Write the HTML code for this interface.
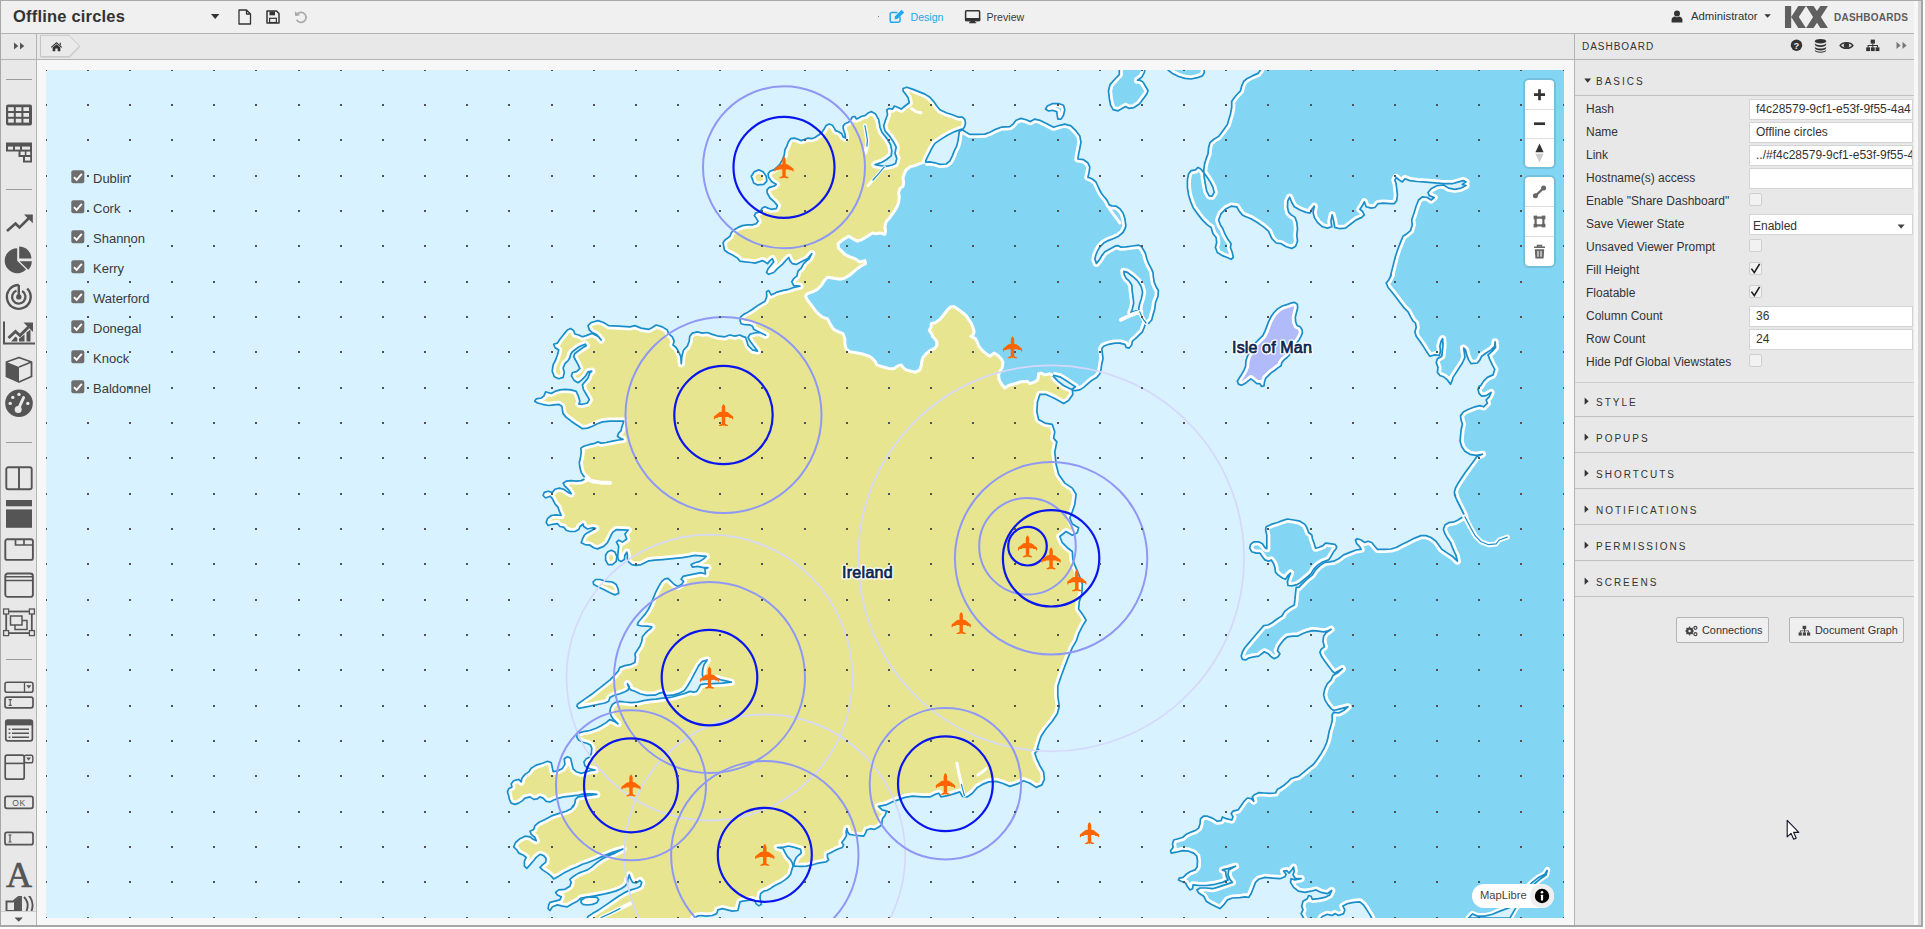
<!DOCTYPE html>
<html lang="en"><head><meta charset="utf-8"><title>Offline circles</title>
<style>

html,body{margin:0;padding:0;background:#fff;}
body{width:1925px;height:929px;overflow:hidden;position:relative;font-family:'Liberation Sans',Arial,sans-serif;color:#333;}
#app{position:absolute;left:0;top:0;width:1925px;height:929px;overflow:hidden;}
.abs{position:absolute;}
#topbar{position:absolute;left:0;top:0;width:1915px;height:33px;background:#f0f0f0;border-bottom:1px solid #b4b4b4;}
#secondbar{position:absolute;left:0;top:34px;width:1915px;height:25px;background:#e8e8e8;border-bottom:1px solid #b4b4b4;}
#sidebar{position:absolute;left:0;top:60px;width:36px;height:865px;background:#e8e8e8;border-right:1px solid #b4b4b4;}
#canvas{position:absolute;left:37px;top:60px;width:1538px;height:865px;background:#f7f7f7;}
#rpanel{position:absolute;left:1574px;top:34px;width:341px;height:891px;background:#e8e8e8;border-left:1px solid #b4b4b4;box-sizing:border-box;}
.title{position:absolute;left:13px;top:7px;font-size:16.5px;font-weight:bold;color:#333;letter-spacing:0.2px;white-space:nowrap;}
.t11{font-size:11px;white-space:nowrap;}
.lbl{position:absolute;left:11px;font-size:12px;color:#333;white-space:nowrap;line-height:14px;}
.inp{position:absolute;left:174px;width:164px;height:21px;background:#fff;border:1px solid #d4d4d4;box-sizing:border-box;font-size:12px;line-height:19px;padding-left:6px;color:#333;white-space:nowrap;overflow:hidden;}
.chk{position:absolute;left:174px;width:13px;height:13px;background:#f2f2f2;border:1px solid #cfcfcf;border-radius:2px;box-sizing:border-box;}
.sec{position:absolute;left:21px;font-size:10px;letter-spacing:2px;color:#333;white-space:nowrap;line-height:12px;}
.hr{position:absolute;left:0px;width:340px;height:1px;background:#c2c2c2;}
.btn{position:absolute;height:26px;box-sizing:border-box;border:1px solid #b4b4b4;border-radius:2px;background:#efefef;font-size:10.9px;color:#333;line-height:25px;white-space:nowrap;}
.cbrow{position:absolute;left:71px;font-size:13px;color:#333;white-space:nowrap;}

</style></head>
<body>
<div id="app">
<div id="topbar">
<div class="title">Offline circles</div>
<svg class="abs" style="left:211px;top:14px" width="9" height="6"><path d="M0,0H8.4L4.2,5Z" fill="#333"/></svg>
<svg class="abs" style="left:238px;top:9px" width="14" height="16" viewBox="0 0 14 16"><path d="M1,1H8.5L12.5,5V15H1Z M8.5,1V5H12.5" fill="none" stroke="#333" stroke-width="1.3" stroke-linejoin="round"/></svg>
<svg class="abs" style="left:266px;top:10px" width="14" height="14" viewBox="0 0 14 14"><path d="M1,1H10.5L13,3.5V13H1Z" fill="none" stroke="#333" stroke-width="1.5" stroke-linejoin="round"/><rect x="3.5" y="1.5" width="5.5" height="3.8" fill="#333"/><rect x="3.6" y="8.3" width="6.8" height="4.2" fill="none" stroke="#333" stroke-width="1.2"/></svg>
<svg class="abs" style="left:294px;top:10px" width="14" height="14" viewBox="0 0 14 14"><path d="M3.2,4.2A5,5 0 1 1 2.6,9.6" fill="none" stroke="#a9a9a9" stroke-width="1.7"/><path d="M0.8,1.2L1.2,6.2L6,5.2Z" fill="#a9a9a9"/></svg>
<span class="abs" style="left:878px;top:16px;width:1px;height:1px;background:#777"></span>
<svg class="abs" style="left:888.5px;top:8.5px" width="17" height="15" viewBox="0 0 17 15"><path d="M11,7.5V11.5A1.8,1.8 0 0 1 9.2,13.3H3A1.8,1.8 0 0 1 1.2,11.5V5.3A1.8,1.8 0 0 1 3,3.5H8.5" fill="none" stroke="#21a8ee" stroke-width="1.5"/><path d="M6,7.2L12.6,0.8L15.2,3.4L8.6,9.8L5.6,10.4Z" fill="#21a8ee"/></svg>
<span class="abs t11" style="left:910.5px;top:10.5px;color:#21a8ee;font-size:10.6px">Design</span>
<svg class="abs" style="left:964px;top:10px" width="17" height="14" viewBox="0 0 17 14"><rect x="1.6" y="0.8" width="14" height="9.8" rx="1" fill="none" stroke="#333" stroke-width="1.5"/><rect x="1" y="8" width="15.2" height="3.2" fill="#333"/><path d="M6.5,11H10.7L11.2,12.3H12.2V13.2H5V12.3H6Z" fill="#333"/></svg>
<span class="abs t11" style="left:986.5px;top:10.5px;color:#3a3a3a;font-size:10.6px">Preview</span>
<svg class="abs" style="left:1671px;top:10px" width="12" height="13" viewBox="0 0 12 13"><circle cx="6" cy="3.4" r="3" fill="#333"/><path d="M0.6,12.4V9.5C0.6,7.6 2.4,6.6 4,6.4C5.2,7.4 6.8,7.4 8,6.4C9.6,6.6 11.4,7.6 11.4,9.5V12.4Z" fill="#333"/></svg>
<span class="abs t11" style="left:1691px;top:10px;color:#333;font-size:11.3px">Administrator</span>
<svg class="abs" style="left:1764px;top:14px" width="8" height="5"><path d="M0.4,0.3H6.8L3.6,3.8Z" fill="#333"/></svg>
<svg class="abs" style="left:1784px;top:5px" width="46" height="24" viewBox="0 0 46 24"><path d="M0.97,1.04H7.19V22.89H0.97Z M7.19,11.98L14.29,1.04H21.93L14.83,11.98L21.93,22.89H14.29Z M22.11,1.04H29.57L32.94,6.01L36.32,1.04H43.96L36.85,11.98L43.96,22.89H36.32L32.94,17.73L29.57,22.89H22.11L29.04,11.98Z" fill="#606060"/></svg>
<span class="abs" style="left:1834px;top:11.5px;font-size:10px;font-weight:bold;color:#5c5c5c;letter-spacing:0.25px;white-space:nowrap">DASHBOARDS</span>
</div>
<div id="secondbar">
<svg class="abs" style="left:12.5px;top:8px" width="13" height="8" viewBox="0 0 13 8"><path d="M1,0.5L5.3,4L1,7.5Z M7,0.5L11.3,4L7,7.5Z" fill="#555"/></svg>
<div class="abs" style="left:36px;top:0;width:1px;height:25px;background:#b4b4b4"></div>
<svg class="abs" style="left:38px;top:0" width="46" height="26" viewBox="0 0 46 26"><path d="M2.5,1.3H31L41.5,12L31,22.7H2.5Z" fill="#d0d0d0" opacity="0.7" transform="translate(0.8,1.4)"/><path d="M2.5,1.3H31L41.5,12L31,22.7H2.5Z" fill="#eaeaea" stroke="#c6c6c6" stroke-width="1"/><g transform="translate(18.5,12.6) scale(0.92) translate(-18.5,-12.3)"><path d="M12.4,12.6L18.5,7.2L24.6,12.6L23.8,13.5L18.5,8.9L13.2,13.5Z M14.3,13.2L18.5,9.7L22.7,13.2V17.3H19.8V14.4H17.2V17.3H14.3Z M22,8V10L23.2,11V8Z" fill="#333"/></g></svg>
</div>
<div id="sidebar">
<div class="abs" style="left:6px;top:19px;width:26px;height:1px;background:#9c9c9c"></div>
<svg class="abs" style="left:0px;top:44px" width="36" height="22" viewBox="0 0 36 22"><rect x="6" y="0.5" width="26" height="21" rx="2" fill="#555"/><rect x="8.2" y="3.2" width="5.6" height="3.8" fill="#e8e8e8"/><rect x="8.2" y="9.0" width="5.6" height="3.8" fill="#e8e8e8"/><rect x="8.2" y="14.8" width="5.6" height="3.8" fill="#e8e8e8"/><rect x="15.8" y="3.2" width="5.6" height="3.8" fill="#e8e8e8"/><rect x="15.8" y="9.0" width="5.6" height="3.8" fill="#e8e8e8"/><rect x="15.8" y="14.8" width="5.6" height="3.8" fill="#e8e8e8"/><rect x="23.4" y="3.2" width="5.6" height="3.8" fill="#e8e8e8"/><rect x="23.4" y="9.0" width="5.6" height="3.8" fill="#e8e8e8"/><rect x="23.4" y="14.8" width="5.6" height="3.8" fill="#e8e8e8"/></svg>
<svg class="abs" style="left:0px;top:82px" width="36" height="21" viewBox="0 0 36 21"><path d="M6,0.5H32V20.5H23V15H18.5V9.5H6Z" fill="#555"/><rect x="8" y="4.6" width="5" height="3" fill="#e8e8e8"/><rect x="15" y="4.6" width="5" height="3" fill="#e8e8e8"/><rect x="22" y="4.6" width="8" height="3" fill="#e8e8e8"/><rect x="20.5" y="9.6" width="4.3" height="3.4" fill="#e8e8e8"/><rect x="26.4" y="9.6" width="3.8" height="3.4" fill="#e8e8e8"/><rect x="25" y="15" width="5.2" height="3.6" fill="#e8e8e8"/></svg>
<div class="abs" style="left:6px;top:128.7px;width:26px;height:1px;background:#9c9c9c"></div>
<svg class="abs" style="left:0px;top:153px" width="36" height="20" viewBox="0 0 36 20"><path d="M7,18L15.5,10.5L19.5,14.5L29.5,4.5" fill="none" stroke="#555" stroke-width="2.6"/><path d="M24,1.5H32.8V10.3Z" fill="#555"/></svg>
<svg class="abs" style="left:0px;top:186px" width="36" height="29" viewBox="0 0 36 29"><path d="M17.2,14.7L26.04,23.54A12.5,12.5 0 1 1 17.2,2.2Z" fill="#555"/><path d="M19.2,12.6V0.4A12.2,12.2 0 0 1 31.4,12.6Z" fill="#555"/><path d="M19.6,15.2H31.8A12.2,12.2 0 0 1 28.23,23.83Z" fill="#555"/></svg>
<svg class="abs" style="left:0px;top:222px" width="36" height="30" viewBox="0 0 36 30"><circle cx="18.8" cy="14.9" r="2.7" fill="#555"/><path d="M18.8,14.9V3" stroke="#555" stroke-width="2.4"/><path d="M18.8,3A11.9,11.9 0 1 0 27.2,6.5" fill="none" stroke="#555" stroke-width="2.4"/><path d="M22.15,9.1A6.7,6.7 0 1 1 16.5,8.6" fill="none" stroke="#555" stroke-width="2.3"/></svg>
<svg class="abs" style="left:0px;top:261px" width="36" height="25" viewBox="0 0 36 25"><path d="M4,0.5V22.5H35" fill="none" stroke="#555" stroke-width="2"/><path d="M8.5,17L15.5,10.5L20,14.5L28.5,6" fill="none" stroke="#555" stroke-width="3"/><path d="M23.5,1.5H33V11Z" fill="#555"/><path d="M11,20.5L15.5,15.5L17.3,17V20.5Z M19,20.5V17.8L22.5,15L24.5,13.5V20.5Z M26.5,20.5V11.5L30.5,8.5V20.5Z" fill="#555"/></svg>
<svg class="abs" style="left:0px;top:296px" width="36" height="28" viewBox="0 0 36 28"><path d="M19,1.5L31.5,6V20.5L19,26L6.5,20.5V6Z" fill="#e8e8e8" stroke="#555" stroke-width="1.8" stroke-linejoin="round"/><path d="M6.5,6L19,11V26L6.5,20.5Z" fill="#555"/><path d="M19,11L31.5,6" stroke="#555" stroke-width="1.6"/></svg>
<svg class="abs" style="left:0px;top:329px" width="36" height="29" viewBox="0 0 36 29"><circle cx="19" cy="14.2" r="13.8" fill="#555"/><circle cx="18.2" cy="20.4" r="3.5" fill="#e8e8e8"/><path d="M18.2,20.4L23.6,8.6" stroke="#e8e8e8" stroke-width="2.9" stroke-linecap="round"/><circle cx="10.2" cy="14.4" r="1.7" fill="#e8e8e8"/><circle cx="12.8" cy="8.4" r="1.7" fill="#e8e8e8"/><circle cx="19" cy="5.4" r="1.7" fill="#e8e8e8"/><circle cx="27.8" cy="14.4" r="1.7" fill="#e8e8e8"/></svg>
<div class="abs" style="left:6px;top:381.5px;width:26px;height:1px;background:#9c9c9c"></div>
<svg class="abs" style="left:0px;top:406px" width="36" height="25" viewBox="0 0 36 25"><rect x="6.3" y="1.3" width="25.4" height="22" rx="2" fill="none" stroke="#555" stroke-width="1.9"/><path d="M19,1.3V23.3" stroke="#555" stroke-width="1.9"/></svg>
<svg class="abs" style="left:0px;top:440px" width="36" height="28" viewBox="0 0 36 28"><rect x="6" y="0" width="26" height="6.3" fill="#555"/><rect x="6" y="9.4" width="26" height="18.4" fill="#555"/></svg>
<svg class="abs" style="left:0px;top:478px" width="36" height="24" viewBox="0 0 36 24"><rect x="5.3" y="1.3" width="27.6" height="20.6" rx="2" fill="none" stroke="#555" stroke-width="1.9"/><path d="M15.5,1.3V7H33 M24,1.3V7" fill="none" stroke="#555" stroke-width="1.7"/></svg>
<svg class="abs" style="left:0px;top:512px" width="36" height="27" viewBox="0 0 36 27"><rect x="5.3" y="1.5" width="27.6" height="23.4" rx="2.5" fill="none" stroke="#555" stroke-width="1.9"/><path d="M5.3,4.8H33 M5.3,8.6H33" stroke="#555" stroke-width="1.5"/></svg>
<svg class="abs" style="left:0px;top:548px" width="36" height="29" viewBox="0 0 36 29"><rect x="6.2" y="3.5" width="25.6" height="21.6" fill="none" stroke="#555" stroke-width="1.8"/><rect x="3.6" y="1" width="5" height="5" fill="#e8e8e8" stroke="#555" stroke-width="1.3"/><rect x="3.6" y="22.6" width="5" height="5" fill="#e8e8e8" stroke="#555" stroke-width="1.3"/><rect x="29.4" y="1" width="5" height="5" fill="#e8e8e8" stroke="#555" stroke-width="1.3"/><rect x="29.4" y="22.6" width="5" height="5" fill="#e8e8e8" stroke="#555" stroke-width="1.3"/><rect x="15" y="12.5" width="12" height="9" fill="#e8e8e8" stroke="#555" stroke-width="1.5"/><rect x="10.5" y="8" width="11.5" height="9" fill="#e8e8e8" stroke="#555" stroke-width="1.5"/></svg>
<div class="abs" style="left:6px;top:598.5px;width:26px;height:1px;background:#9c9c9c"></div>
<svg class="abs" style="left:0px;top:621px" width="36" height="13" viewBox="0 0 36 13"><rect x="5" y="1.2" width="28" height="10" rx="2" fill="none" stroke="#555" stroke-width="1.6"/><path d="M24.5,1.2V11.2" stroke="#555" stroke-width="1.3"/><path d="M26.3,4.3H31.3L28.8,7.6Z" fill="#555"/></svg>
<svg class="abs" style="left:0px;top:636px" width="36" height="13" viewBox="0 0 36 13"><rect x="5" y="1.2" width="28" height="10.6" rx="2" fill="none" stroke="#555" stroke-width="1.7"/><path d="M8.6,3.6H11.8 M8.6,9.4H11.8 M10.2,3.6V9.4" stroke="#555" stroke-width="1.1"/></svg>
<svg class="abs" style="left:0px;top:659px" width="36" height="23" viewBox="0 0 36 23"><rect x="5.8" y="1.2" width="26.6" height="20.6" rx="2" fill="none" stroke="#555" stroke-width="1.7"/><rect x="5.8" y="1.2" width="26.6" height="5.2" fill="#555"/><path d="M12,10.3H29 M12,14.3H29 M12,18.3H29" stroke="#555" stroke-width="1.6"/><path d="M8.6,10.3H10.4 M8.6,14.3H10.4 M8.6,18.3H10.4" stroke="#555" stroke-width="1.6"/></svg>
<svg class="abs" style="left:0px;top:694px" width="36" height="27" viewBox="0 0 36 27"><rect x="5.2" y="1.2" width="19" height="24" rx="2" fill="none" stroke="#555" stroke-width="1.7"/><rect x="24.4" y="1.2" width="8.4" height="7.6" rx="1.5" fill="none" stroke="#555" stroke-width="1.4"/><path d="M26.2,3.6H31L28.6,6.6Z" fill="#555"/><path d="M5.2,9.4H24" stroke="#555" stroke-width="1.6"/></svg>
<svg class="abs" style="left:0px;top:735px" width="36" height="15" viewBox="0 0 36 15"><rect x="5" y="1.3" width="28" height="12" rx="2" fill="none" stroke="#555" stroke-width="1.7"/><text x="19" y="10.6" text-anchor="middle" font-family="'Liberation Sans',Arial,sans-serif" font-size="8.5" letter-spacing="0.6" fill="#555">OK</text></svg>
<svg class="abs" style="left:0px;top:771px" width="36" height="15" viewBox="0 0 36 15"><rect x="5" y="1.3" width="28" height="12.4" rx="2" fill="none" stroke="#555" stroke-width="1.7"/><path d="M8.4,4H11.6 M8.4,11H11.6 M10,4V11" stroke="#555" stroke-width="1.2"/></svg>
<div class="abs" style="left:5px;top:794.5px;width:28px;text-align:center;font-family:'Liberation Serif',serif;font-size:36px;line-height:40px;color:#555;-webkit-text-stroke:0.7px #555">A</div>
<svg class="abs" style="left:0px;top:836px" width="36" height="15" viewBox="0 0 36 15"><path d="M6.5,15V5.5H13L21,-1V15Z" fill="none" stroke="#555" stroke-width="1.9"/><path d="M14,5.5L20,1V15H14Z" fill="#555"/><path d="M24,1A13,13 0 0 1 26.5,15" fill="none" stroke="#555" stroke-width="1.9"/><path d="M28.5,-1A16,16 0 0 1 31.5,15" fill="none" stroke="#555" stroke-width="1.9"/></svg>
<div class="abs" style="left:0;top:851px;width:36px;height:14px;background:#f0f0f0;border-top:1px solid #cfcfcf;box-sizing:border-box"></div>
<svg class="abs" style="left:14px;top:857px" width="10" height="6"><path d="M0.5,0.5H8.9L4.7,4.7Z" fill="#555"/></svg>
</div>
<div id="canvas"></div>
<svg id="map" width="1518" height="848" viewBox="0 0 1518 848" style="position:absolute;left:46px;top:70px;background:#D8F2FF">
<clipPath id="c1"><path d="M1218.8,-6.0 L1215.7,-2.3 L1214.5,0.0 L1212.0,3.4 L1206.3,5.9 L1201.3,8.4 L1197.6,11.5 L1195.7,15.9 L1194.5,20.8 L1191.4,24.0 L1188.2,27.7 L1185.7,31.5 L1185.7,37.7 L1184.5,44.0 L1182.6,50.2 L1181.4,54.6 L1176.4,61.4 L1172.6,66.4 L1167.6,69.5 L1163.9,72.7 L1162.6,77.7 L1162.0,83.9 L1160.1,88.9 L1158.6,93.9 L1158.8,92.4 L1157.8,99.9 L1158.2,107.4 L1159.5,114.9 L1160.7,121.2 L1163.2,125.9 L1166.1,126.2 L1168.2,122.4 L1167.0,117.4 L1164.5,112.4 L1161.3,107.4 L1157.6,102.4 L1154.5,98.7 L1152.0,97.4 L1149.5,99.9 L1145.1,100.6 L1142.6,103.7 L1141.4,109.9 L1141.4,117.4 L1142.6,124.9 L1144.5,131.2 L1147.0,137.4 L1151.3,143.6 L1156.3,149.9 L1161.3,154.9 L1165.1,157.5 L1167.0,163.7 L1170.1,167.5 L1170.7,172.5 L1169.4,177.5 L1171.3,182.5 L1176.3,185.6 L1181.3,187.5 L1185.1,189.3 L1187.3,187.5 L1186.3,182.5 L1184.4,177.5 L1185.1,173.7 L1181.9,169.3 L1178.8,163.7 L1176.9,158.7 L1174.4,155.0 L1172.6,150.0 L1175.1,143.6 L1180.1,138.7 L1185.1,136.2 L1190.7,136.8 L1193.2,141.1 L1196.3,144.9 L1198.8,146.2 L1205.0,148.7 L1211.3,152.5 L1217.5,156.9 L1222.5,161.2 L1225.9,168.7 L1230.2,173.0 L1235.2,173.7 L1240.2,176.8 L1245.8,178.4 L1249.6,176.2 L1251.5,171.2 L1250.8,164.9 L1251.5,158.7 L1250.8,152.4 L1249.0,147.4 L1245.2,144.9 L1242.7,142.4 L1241.5,137.5 L1241.7,131.2 L1243.7,127.2 L1245.8,132.5 L1248.3,136.8 L1254.0,140.0 L1260.2,142.4 L1264.0,143.1 L1265.8,139.3 L1268.3,136.2 L1267.1,142.4 L1268.3,147.4 L1271.4,152.4 L1276.4,156.8 L1281.4,158.1 L1285.8,156.8 L1284.9,151.2 L1286.2,144.9 L1287.7,151.2 L1288.7,157.4 L1293.9,158.7 L1299.5,158.1 L1304.5,154.3 L1310.2,149.9 L1315.8,147.4 L1318.3,144.9 L1316.4,141.2 L1313.9,139.3 L1316.4,135.6 L1318.3,131.8 L1320.1,136.8 L1325.1,138.1 L1328.9,137.5 L1332.0,133.7 L1337.6,133.1 L1343.9,133.7 L1348.2,133.7 L1350.7,130.6 L1351.4,125.0 L1350.7,118.7 L1350.1,113.7 L1348.9,110.0 L1350.1,107.5 L1353.2,110.0 L1356.4,111.9 L1358.9,108.7 L1363.9,110.6 L1371.3,111.5 L1380.1,112.2 L1388.8,112.9 L1397.6,113.5 L1406.3,113.7 L1412.6,111.9 L1417.5,110.6 L1420.0,111.9 L1416.3,114.4 L1420.0,115.6 L1415.0,118.1 L1408.8,119.3 L1402.6,118.1 L1397.6,115.0 L1391.3,115.6 L1385.1,118.7 L1382.0,122.5 L1383.2,125.6 L1388.2,127.5 L1385.1,130.0 L1381.3,127.5 L1376.3,126.8 L1372.6,130.0 L1370.1,136.2 L1368.2,142.4 L1365.7,149.9 L1366.3,154.9 L1364.5,160.6 L1360.1,164.3 L1357.0,166.2 L1354.5,172.4 L1352.0,178.7 L1349.5,186.2 L1347.6,193.6 L1345.7,201.1 L1344.5,206.0 L1345.2,205.0 L1342.7,210.0 L1340.2,213.1 L1342.1,217.5 L1345.2,221.2 L1349.6,226.8 L1353.9,232.5 L1358.3,238.1 L1362.1,241.8 L1364.6,246.8 L1367.1,251.2 L1369.5,253.1 L1370.2,257.4 L1368.9,261.8 L1370.2,266.2 L1373.3,270.6 L1376.4,274.9 L1379.5,279.9 L1382.0,283.7 L1383.9,286.2 L1388.9,284.9 L1393.3,285.5 L1394.5,281.2 L1393.9,276.2 L1395.1,271.2 L1396.6,268.7 L1397.0,274.9 L1396.4,281.2 L1395.8,286.2 L1391.4,288.7 L1390.2,292.4 L1392.0,297.4 L1391.4,302.4 L1393.9,305.5 L1397.6,306.8 L1401.4,309.9 L1404.5,314.3 L1406.4,309.9 L1407.0,307.4 L1409.5,303.6 L1412.6,298.7 L1416.4,293.0 L1418.9,287.4 L1418.3,282.4 L1417.6,278.0 L1419.5,279.9 L1420.7,284.9 L1422.6,289.9 L1425.1,293.7 L1431.4,293.0 L1433.9,289.9 L1435.7,286.2 L1440.1,283.0 L1445.1,279.9 L1448.8,276.2 L1449.1,271.8 L1449.5,277.4 L1446.3,281.2 L1442.0,284.9 L1443.9,289.9 L1446.3,294.9 L1448.8,299.3 L1447.0,304.9 L1441.4,307.4 L1437.6,311.1 L1434.5,316.0 L1433.2,316.2 L1432.0,319.4 L1433.2,323.7 L1435.7,326.2 L1440.1,325.6 L1445.1,322.5 L1443.2,326.9 L1440.1,330.0 L1441.4,333.1 L1437.6,336.8 L1433.9,335.6 L1428.9,336.8 L1422.6,339.3 L1417.6,341.8 L1414.5,345.6 L1415.1,350.0 L1416.4,354.3 L1415.1,360.0 L1414.5,366.2 L1414.1,371.2 L1415.8,376.8 L1418.9,381.2 L1423.9,384.3 L1430.1,385.3 L1436.4,384.3 L1430.7,386.8 L1427.6,391.2 L1423.9,396.2 L1420.1,401.2 L1416.4,406.8 L1412.6,412.4 L1409.5,418.0 L1408.3,422.4 L1409.5,426.0 L1408.6,425.0 L1410.8,430.0 L1413.3,435.0 L1415.8,440.0 L1418.3,445.0 L1418.9,447.5 L1415.8,447.5 L1412.0,450.0 L1408.3,451.8 L1402.6,452.7 L1398.9,455.0 L1397.4,459.3 L1398.9,463.7 L1401.4,468.1 L1404.5,472.4 L1406.4,477.4 L1408.3,481.8 L1410.1,485.6 L1411.4,491.2 L1407.0,486.8 L1401.4,483.1 L1395.8,479.3 L1390.0,471.2 L1385.0,467.5 L1380.0,465.6 L1375.0,465.6 L1368.8,468.1 L1362.5,471.2 L1356.3,474.3 L1350.1,477.5 L1345.1,479.0 L1338.8,479.3 L1331.3,479.3 L1328.8,476.2 L1325.7,472.5 L1322.0,471.2 L1318.8,472.5 L1315.1,470.0 L1311.3,468.7 L1309.5,470.0 L1310.7,473.7 L1313.8,476.8 L1315.1,479.3 L1310.1,480.0 L1303.9,482.4 L1297.6,484.9 L1292.6,488.7 L1287.6,491.2 L1283.9,491.8 L1278.9,492.4 L1273.9,495.6 L1269.5,499.9 L1266.4,504.9 L1261.4,508.7 L1256.4,513.7 L1252.7,517.4 L1250.2,517.4 L1249.5,523.7 L1248.9,529.9 L1248.3,534.9 L1243.9,537.4 L1238.9,541.1 L1235.8,546.0 L1236.4,545.6 L1231.4,548.7 L1226.4,552.5 L1222.1,555.0 L1217.7,555.6 L1213.9,560.0 L1210.2,564.3 L1206.4,568.7 L1202.7,573.1 L1199.0,577.5 L1196.5,581.8 L1195.2,586.2 L1196.5,589.3 L1199.6,589.9 L1202.7,588.1 L1207.7,586.8 L1212.7,586.2 L1215.8,583.7 L1218.3,581.8 L1222.1,583.7 L1225.2,586.8 L1228.3,588.7 L1232.0,586.8 L1233.9,583.7 L1231.4,580.6 L1232.7,576.8 L1235.2,573.1 L1237.7,570.0 L1241.4,566.8 L1246.4,566.2 L1251.4,566.2 L1256.4,563.7 L1261.4,561.8 L1266.4,560.6 L1272.6,561.2 L1277.6,561.8 L1281.4,561.2 L1285.1,559.3 L1280.1,562.7 L1277.6,566.2 L1277.0,571.2 L1278.3,576.8 L1275.1,579.3 L1273.9,582.4 L1275.8,586.8 L1278.9,591.2 L1282.6,596.2 L1286.4,601.2 L1288.9,603.1 L1296.4,598.7 L1291.4,603.1 L1287.0,605.5 L1285.1,609.9 L1281.4,613.7 L1278.9,618.7 L1277.6,624.9 L1278.9,629.9 L1282.0,634.9 L1285.1,638.6 L1287.6,640.5 L1295.1,638.6 L1302.0,636.8 L1297.6,640.5 L1292.6,643.0 L1287.6,642.4 L1286.1,645.0 L1286.3,650.0 L1285.1,655.0 L1283.2,661.2 L1282.0,667.5 L1280.7,672.5 L1278.2,678.1 L1275.1,683.7 L1271.3,689.3 L1267.6,694.3 L1262.6,698.1 L1257.6,702.4 L1252.6,706.4 L1248.9,707.4 L1245.1,708.7 L1241.4,712.4 L1237.6,715.5 L1233.9,718.0 L1231.4,719.3 L1229.5,723.0 L1223.9,723.4 L1217.6,723.0 L1212.7,722.7 L1208.3,724.7 L1206.4,726.8 L1207.7,731.1 L1205.2,728.7 L1201.4,728.0 L1198.3,731.1 L1195.2,735.5 L1192.0,739.9 L1187.1,741.1 L1185.2,743.6 L1187.0,746.9 L1185.8,750.0 L1180.2,748.7 L1176.4,746.9 L1175.2,750.6 L1171.4,751.2 L1166.4,748.1 L1161.4,746.2 L1157.7,746.0 L1154.6,748.7 L1154.0,753.7 L1152.7,758.1 L1149.0,760.6 L1144.0,762.5 L1140.2,764.3 L1136.5,767.5 L1132.1,768.7 L1127.7,770.0 L1126.5,773.7 L1127.1,777.5 L1124.6,780.6 L1125.2,783.1 L1130.2,782.2 L1136.5,780.6 L1142.7,781.2 L1147.7,783.1 L1150.8,786.2 L1151.5,791.2 L1151.2,796.8 L1149.0,799.9 L1144.0,801.8 L1140.2,804.3 L1137.1,807.4 L1133.3,808.1 L1132.5,809.9 L1135.2,811.2 L1139.6,813.0 L1141.5,816.8 L1144.0,819.9 L1146.5,818.7 L1147.1,814.9 L1154.0,815.5 L1160.2,815.5 L1168.9,814.3 L1176.4,812.4 L1182.0,809.9 L1180.2,806.2 L1179.5,801.2 L1176.4,799.9 L1181.4,798.7 L1189.5,796.2 L1182.7,799.9 L1182.0,804.9 L1183.9,809.3 L1186.4,812.4 L1178.9,814.9 L1171.4,817.4 L1166.4,818.7 L1160.2,818.0 L1154.0,818.0 L1150.8,819.9 L1152.7,823.0 L1157.7,826.2 L1160.2,831.2 L1165.2,834.3 L1170.2,836.8 L1173.9,838.6 L1177.7,834.9 L1181.4,829.9 L1186.4,828.0 L1193.9,827.7 L1198.9,826.8 L1202.7,827.4 L1205.1,823.7 L1207.6,817.4 L1209.5,812.4 L1212.6,809.3 L1218.9,807.4 L1226.4,808.1 L1233.9,808.7 L1238.9,806.8 L1240.1,804.3 L1237.6,801.2 L1240.7,800.6 L1243.2,803.1 L1245.7,799.9 L1247.6,797.2 L1248.2,801.2 L1247.0,804.9 L1249.5,808.7 L1255.1,808.7 L1248.9,809.9 L1245.1,808.7 L1244.5,812.4 L1247.6,817.4 L1252.6,821.2 L1258.8,822.4 L1265.1,821.2 L1270.1,819.9 L1275.1,822.4 L1281.3,823.7 L1285.7,820.5 L1283.8,824.9 L1278.8,827.4 L1272.6,828.7 L1266.3,829.3 L1265.1,826.2 L1262.6,825.5 L1261.3,828.7 L1257.0,831.2 L1255.7,836.1 L1257.0,839.9 L1255.1,843.6 L1257.6,848.0 L1257.6,854.9 L1275.1,854.9 L1275.1,848.0 L1276.3,846.5 L1281.3,844.3 L1286.3,845.5 L1288.8,843.6 L1292.6,845.5 L1297.6,843.6 L1298.8,839.9 L1296.9,836.1 L1301.3,833.7 L1307.5,832.4 L1313.8,831.8 L1317.5,834.9 L1320.0,838.6 L1323.2,843.6 L1325.7,848.0 L1325.7,854.9 L1326.0,860.0 L1544.0,860.0 L1544.0,-15.0 L1219.0,-15.0Z" clip-rule="evenodd"/></clipPath>
<path d="M1218.8,-6.0 L1215.7,-2.3 L1214.5,0.0 L1212.0,3.4 L1206.3,5.9 L1201.3,8.4 L1197.6,11.5 L1195.7,15.9 L1194.5,20.8 L1191.4,24.0 L1188.2,27.7 L1185.7,31.5 L1185.7,37.7 L1184.5,44.0 L1182.6,50.2 L1181.4,54.6 L1176.4,61.4 L1172.6,66.4 L1167.6,69.5 L1163.9,72.7 L1162.6,77.7 L1162.0,83.9 L1160.1,88.9 L1158.6,93.9 L1158.8,92.4 L1157.8,99.9 L1158.2,107.4 L1159.5,114.9 L1160.7,121.2 L1163.2,125.9 L1166.1,126.2 L1168.2,122.4 L1167.0,117.4 L1164.5,112.4 L1161.3,107.4 L1157.6,102.4 L1154.5,98.7 L1152.0,97.4 L1149.5,99.9 L1145.1,100.6 L1142.6,103.7 L1141.4,109.9 L1141.4,117.4 L1142.6,124.9 L1144.5,131.2 L1147.0,137.4 L1151.3,143.6 L1156.3,149.9 L1161.3,154.9 L1165.1,157.5 L1167.0,163.7 L1170.1,167.5 L1170.7,172.5 L1169.4,177.5 L1171.3,182.5 L1176.3,185.6 L1181.3,187.5 L1185.1,189.3 L1187.3,187.5 L1186.3,182.5 L1184.4,177.5 L1185.1,173.7 L1181.9,169.3 L1178.8,163.7 L1176.9,158.7 L1174.4,155.0 L1172.6,150.0 L1175.1,143.6 L1180.1,138.7 L1185.1,136.2 L1190.7,136.8 L1193.2,141.1 L1196.3,144.9 L1198.8,146.2 L1205.0,148.7 L1211.3,152.5 L1217.5,156.9 L1222.5,161.2 L1225.9,168.7 L1230.2,173.0 L1235.2,173.7 L1240.2,176.8 L1245.8,178.4 L1249.6,176.2 L1251.5,171.2 L1250.8,164.9 L1251.5,158.7 L1250.8,152.4 L1249.0,147.4 L1245.2,144.9 L1242.7,142.4 L1241.5,137.5 L1241.7,131.2 L1243.7,127.2 L1245.8,132.5 L1248.3,136.8 L1254.0,140.0 L1260.2,142.4 L1264.0,143.1 L1265.8,139.3 L1268.3,136.2 L1267.1,142.4 L1268.3,147.4 L1271.4,152.4 L1276.4,156.8 L1281.4,158.1 L1285.8,156.8 L1284.9,151.2 L1286.2,144.9 L1287.7,151.2 L1288.7,157.4 L1293.9,158.7 L1299.5,158.1 L1304.5,154.3 L1310.2,149.9 L1315.8,147.4 L1318.3,144.9 L1316.4,141.2 L1313.9,139.3 L1316.4,135.6 L1318.3,131.8 L1320.1,136.8 L1325.1,138.1 L1328.9,137.5 L1332.0,133.7 L1337.6,133.1 L1343.9,133.7 L1348.2,133.7 L1350.7,130.6 L1351.4,125.0 L1350.7,118.7 L1350.1,113.7 L1348.9,110.0 L1350.1,107.5 L1353.2,110.0 L1356.4,111.9 L1358.9,108.7 L1363.9,110.6 L1371.3,111.5 L1380.1,112.2 L1388.8,112.9 L1397.6,113.5 L1406.3,113.7 L1412.6,111.9 L1417.5,110.6 L1420.0,111.9 L1416.3,114.4 L1420.0,115.6 L1415.0,118.1 L1408.8,119.3 L1402.6,118.1 L1397.6,115.0 L1391.3,115.6 L1385.1,118.7 L1382.0,122.5 L1383.2,125.6 L1388.2,127.5 L1385.1,130.0 L1381.3,127.5 L1376.3,126.8 L1372.6,130.0 L1370.1,136.2 L1368.2,142.4 L1365.7,149.9 L1366.3,154.9 L1364.5,160.6 L1360.1,164.3 L1357.0,166.2 L1354.5,172.4 L1352.0,178.7 L1349.5,186.2 L1347.6,193.6 L1345.7,201.1 L1344.5,206.0 L1345.2,205.0 L1342.7,210.0 L1340.2,213.1 L1342.1,217.5 L1345.2,221.2 L1349.6,226.8 L1353.9,232.5 L1358.3,238.1 L1362.1,241.8 L1364.6,246.8 L1367.1,251.2 L1369.5,253.1 L1370.2,257.4 L1368.9,261.8 L1370.2,266.2 L1373.3,270.6 L1376.4,274.9 L1379.5,279.9 L1382.0,283.7 L1383.9,286.2 L1388.9,284.9 L1393.3,285.5 L1394.5,281.2 L1393.9,276.2 L1395.1,271.2 L1396.6,268.7 L1397.0,274.9 L1396.4,281.2 L1395.8,286.2 L1391.4,288.7 L1390.2,292.4 L1392.0,297.4 L1391.4,302.4 L1393.9,305.5 L1397.6,306.8 L1401.4,309.9 L1404.5,314.3 L1406.4,309.9 L1407.0,307.4 L1409.5,303.6 L1412.6,298.7 L1416.4,293.0 L1418.9,287.4 L1418.3,282.4 L1417.6,278.0 L1419.5,279.9 L1420.7,284.9 L1422.6,289.9 L1425.1,293.7 L1431.4,293.0 L1433.9,289.9 L1435.7,286.2 L1440.1,283.0 L1445.1,279.9 L1448.8,276.2 L1449.1,271.8 L1449.5,277.4 L1446.3,281.2 L1442.0,284.9 L1443.9,289.9 L1446.3,294.9 L1448.8,299.3 L1447.0,304.9 L1441.4,307.4 L1437.6,311.1 L1434.5,316.0 L1433.2,316.2 L1432.0,319.4 L1433.2,323.7 L1435.7,326.2 L1440.1,325.6 L1445.1,322.5 L1443.2,326.9 L1440.1,330.0 L1441.4,333.1 L1437.6,336.8 L1433.9,335.6 L1428.9,336.8 L1422.6,339.3 L1417.6,341.8 L1414.5,345.6 L1415.1,350.0 L1416.4,354.3 L1415.1,360.0 L1414.5,366.2 L1414.1,371.2 L1415.8,376.8 L1418.9,381.2 L1423.9,384.3 L1430.1,385.3 L1436.4,384.3 L1430.7,386.8 L1427.6,391.2 L1423.9,396.2 L1420.1,401.2 L1416.4,406.8 L1412.6,412.4 L1409.5,418.0 L1408.3,422.4 L1409.5,426.0 L1408.6,425.0 L1410.8,430.0 L1413.3,435.0 L1415.8,440.0 L1418.3,445.0 L1418.9,447.5 L1415.8,447.5 L1412.0,450.0 L1408.3,451.8 L1402.6,452.7 L1398.9,455.0 L1397.4,459.3 L1398.9,463.7 L1401.4,468.1 L1404.5,472.4 L1406.4,477.4 L1408.3,481.8 L1410.1,485.6 L1411.4,491.2 L1407.0,486.8 L1401.4,483.1 L1395.8,479.3 L1390.0,471.2 L1385.0,467.5 L1380.0,465.6 L1375.0,465.6 L1368.8,468.1 L1362.5,471.2 L1356.3,474.3 L1350.1,477.5 L1345.1,479.0 L1338.8,479.3 L1331.3,479.3 L1328.8,476.2 L1325.7,472.5 L1322.0,471.2 L1318.8,472.5 L1315.1,470.0 L1311.3,468.7 L1309.5,470.0 L1310.7,473.7 L1313.8,476.8 L1315.1,479.3 L1310.1,480.0 L1303.9,482.4 L1297.6,484.9 L1292.6,488.7 L1287.6,491.2 L1283.9,491.8 L1278.9,492.4 L1273.9,495.6 L1269.5,499.9 L1266.4,504.9 L1261.4,508.7 L1256.4,513.7 L1252.7,517.4 L1250.2,517.4 L1249.5,523.7 L1248.9,529.9 L1248.3,534.9 L1243.9,537.4 L1238.9,541.1 L1235.8,546.0 L1236.4,545.6 L1231.4,548.7 L1226.4,552.5 L1222.1,555.0 L1217.7,555.6 L1213.9,560.0 L1210.2,564.3 L1206.4,568.7 L1202.7,573.1 L1199.0,577.5 L1196.5,581.8 L1195.2,586.2 L1196.5,589.3 L1199.6,589.9 L1202.7,588.1 L1207.7,586.8 L1212.7,586.2 L1215.8,583.7 L1218.3,581.8 L1222.1,583.7 L1225.2,586.8 L1228.3,588.7 L1232.0,586.8 L1233.9,583.7 L1231.4,580.6 L1232.7,576.8 L1235.2,573.1 L1237.7,570.0 L1241.4,566.8 L1246.4,566.2 L1251.4,566.2 L1256.4,563.7 L1261.4,561.8 L1266.4,560.6 L1272.6,561.2 L1277.6,561.8 L1281.4,561.2 L1285.1,559.3 L1280.1,562.7 L1277.6,566.2 L1277.0,571.2 L1278.3,576.8 L1275.1,579.3 L1273.9,582.4 L1275.8,586.8 L1278.9,591.2 L1282.6,596.2 L1286.4,601.2 L1288.9,603.1 L1296.4,598.7 L1291.4,603.1 L1287.0,605.5 L1285.1,609.9 L1281.4,613.7 L1278.9,618.7 L1277.6,624.9 L1278.9,629.9 L1282.0,634.9 L1285.1,638.6 L1287.6,640.5 L1295.1,638.6 L1302.0,636.8 L1297.6,640.5 L1292.6,643.0 L1287.6,642.4 L1286.1,645.0 L1286.3,650.0 L1285.1,655.0 L1283.2,661.2 L1282.0,667.5 L1280.7,672.5 L1278.2,678.1 L1275.1,683.7 L1271.3,689.3 L1267.6,694.3 L1262.6,698.1 L1257.6,702.4 L1252.6,706.4 L1248.9,707.4 L1245.1,708.7 L1241.4,712.4 L1237.6,715.5 L1233.9,718.0 L1231.4,719.3 L1229.5,723.0 L1223.9,723.4 L1217.6,723.0 L1212.7,722.7 L1208.3,724.7 L1206.4,726.8 L1207.7,731.1 L1205.2,728.7 L1201.4,728.0 L1198.3,731.1 L1195.2,735.5 L1192.0,739.9 L1187.1,741.1 L1185.2,743.6 L1187.0,746.9 L1185.8,750.0 L1180.2,748.7 L1176.4,746.9 L1175.2,750.6 L1171.4,751.2 L1166.4,748.1 L1161.4,746.2 L1157.7,746.0 L1154.6,748.7 L1154.0,753.7 L1152.7,758.1 L1149.0,760.6 L1144.0,762.5 L1140.2,764.3 L1136.5,767.5 L1132.1,768.7 L1127.7,770.0 L1126.5,773.7 L1127.1,777.5 L1124.6,780.6 L1125.2,783.1 L1130.2,782.2 L1136.5,780.6 L1142.7,781.2 L1147.7,783.1 L1150.8,786.2 L1151.5,791.2 L1151.2,796.8 L1149.0,799.9 L1144.0,801.8 L1140.2,804.3 L1137.1,807.4 L1133.3,808.1 L1132.5,809.9 L1135.2,811.2 L1139.6,813.0 L1141.5,816.8 L1144.0,819.9 L1146.5,818.7 L1147.1,814.9 L1154.0,815.5 L1160.2,815.5 L1168.9,814.3 L1176.4,812.4 L1182.0,809.9 L1180.2,806.2 L1179.5,801.2 L1176.4,799.9 L1181.4,798.7 L1189.5,796.2 L1182.7,799.9 L1182.0,804.9 L1183.9,809.3 L1186.4,812.4 L1178.9,814.9 L1171.4,817.4 L1166.4,818.7 L1160.2,818.0 L1154.0,818.0 L1150.8,819.9 L1152.7,823.0 L1157.7,826.2 L1160.2,831.2 L1165.2,834.3 L1170.2,836.8 L1173.9,838.6 L1177.7,834.9 L1181.4,829.9 L1186.4,828.0 L1193.9,827.7 L1198.9,826.8 L1202.7,827.4 L1205.1,823.7 L1207.6,817.4 L1209.5,812.4 L1212.6,809.3 L1218.9,807.4 L1226.4,808.1 L1233.9,808.7 L1238.9,806.8 L1240.1,804.3 L1237.6,801.2 L1240.7,800.6 L1243.2,803.1 L1245.7,799.9 L1247.6,797.2 L1248.2,801.2 L1247.0,804.9 L1249.5,808.7 L1255.1,808.7 L1248.9,809.9 L1245.1,808.7 L1244.5,812.4 L1247.6,817.4 L1252.6,821.2 L1258.8,822.4 L1265.1,821.2 L1270.1,819.9 L1275.1,822.4 L1281.3,823.7 L1285.7,820.5 L1283.8,824.9 L1278.8,827.4 L1272.6,828.7 L1266.3,829.3 L1265.1,826.2 L1262.6,825.5 L1261.3,828.7 L1257.0,831.2 L1255.7,836.1 L1257.0,839.9 L1255.1,843.6 L1257.6,848.0 L1257.6,854.9 L1275.1,854.9 L1275.1,848.0 L1276.3,846.5 L1281.3,844.3 L1286.3,845.5 L1288.8,843.6 L1292.6,845.5 L1297.6,843.6 L1298.8,839.9 L1296.9,836.1 L1301.3,833.7 L1307.5,832.4 L1313.8,831.8 L1317.5,834.9 L1320.0,838.6 L1323.2,843.6 L1325.7,848.0 L1325.7,854.9 L1326.0,860.0 L1544.0,860.0 L1544.0,-15.0 L1219.0,-15.0Z" fill="#83D5F4" fill-rule="evenodd"/>
<path d="M1218.8,-6.0 L1215.7,-2.3 L1214.5,0.0 L1212.0,3.4 L1206.3,5.9 L1201.3,8.4 L1197.6,11.5 L1195.7,15.9 L1194.5,20.8 L1191.4,24.0 L1188.2,27.7 L1185.7,31.5 L1185.7,37.7 L1184.5,44.0 L1182.6,50.2 L1181.4,54.6 L1176.4,61.4 L1172.6,66.4 L1167.6,69.5 L1163.9,72.7 L1162.6,77.7 L1162.0,83.9 L1160.1,88.9 L1158.6,93.9 L1158.8,92.4 L1157.8,99.9 L1158.2,107.4 L1159.5,114.9 L1160.7,121.2 L1163.2,125.9 L1166.1,126.2 L1168.2,122.4 L1167.0,117.4 L1164.5,112.4 L1161.3,107.4 L1157.6,102.4 L1154.5,98.7 L1152.0,97.4 L1149.5,99.9 L1145.1,100.6 L1142.6,103.7 L1141.4,109.9 L1141.4,117.4 L1142.6,124.9 L1144.5,131.2 L1147.0,137.4 L1151.3,143.6 L1156.3,149.9 L1161.3,154.9 L1165.1,157.5 L1167.0,163.7 L1170.1,167.5 L1170.7,172.5 L1169.4,177.5 L1171.3,182.5 L1176.3,185.6 L1181.3,187.5 L1185.1,189.3 L1187.3,187.5 L1186.3,182.5 L1184.4,177.5 L1185.1,173.7 L1181.9,169.3 L1178.8,163.7 L1176.9,158.7 L1174.4,155.0 L1172.6,150.0 L1175.1,143.6 L1180.1,138.7 L1185.1,136.2 L1190.7,136.8 L1193.2,141.1 L1196.3,144.9 L1198.8,146.2 L1205.0,148.7 L1211.3,152.5 L1217.5,156.9 L1222.5,161.2 L1225.9,168.7 L1230.2,173.0 L1235.2,173.7 L1240.2,176.8 L1245.8,178.4 L1249.6,176.2 L1251.5,171.2 L1250.8,164.9 L1251.5,158.7 L1250.8,152.4 L1249.0,147.4 L1245.2,144.9 L1242.7,142.4 L1241.5,137.5 L1241.7,131.2 L1243.7,127.2 L1245.8,132.5 L1248.3,136.8 L1254.0,140.0 L1260.2,142.4 L1264.0,143.1 L1265.8,139.3 L1268.3,136.2 L1267.1,142.4 L1268.3,147.4 L1271.4,152.4 L1276.4,156.8 L1281.4,158.1 L1285.8,156.8 L1284.9,151.2 L1286.2,144.9 L1287.7,151.2 L1288.7,157.4 L1293.9,158.7 L1299.5,158.1 L1304.5,154.3 L1310.2,149.9 L1315.8,147.4 L1318.3,144.9 L1316.4,141.2 L1313.9,139.3 L1316.4,135.6 L1318.3,131.8 L1320.1,136.8 L1325.1,138.1 L1328.9,137.5 L1332.0,133.7 L1337.6,133.1 L1343.9,133.7 L1348.2,133.7 L1350.7,130.6 L1351.4,125.0 L1350.7,118.7 L1350.1,113.7 L1348.9,110.0 L1350.1,107.5 L1353.2,110.0 L1356.4,111.9 L1358.9,108.7 L1363.9,110.6 L1371.3,111.5 L1380.1,112.2 L1388.8,112.9 L1397.6,113.5 L1406.3,113.7 L1412.6,111.9 L1417.5,110.6 L1420.0,111.9 L1416.3,114.4 L1420.0,115.6 L1415.0,118.1 L1408.8,119.3 L1402.6,118.1 L1397.6,115.0 L1391.3,115.6 L1385.1,118.7 L1382.0,122.5 L1383.2,125.6 L1388.2,127.5 L1385.1,130.0 L1381.3,127.5 L1376.3,126.8 L1372.6,130.0 L1370.1,136.2 L1368.2,142.4 L1365.7,149.9 L1366.3,154.9 L1364.5,160.6 L1360.1,164.3 L1357.0,166.2 L1354.5,172.4 L1352.0,178.7 L1349.5,186.2 L1347.6,193.6 L1345.7,201.1 L1344.5,206.0 L1345.2,205.0 L1342.7,210.0 L1340.2,213.1 L1342.1,217.5 L1345.2,221.2 L1349.6,226.8 L1353.9,232.5 L1358.3,238.1 L1362.1,241.8 L1364.6,246.8 L1367.1,251.2 L1369.5,253.1 L1370.2,257.4 L1368.9,261.8 L1370.2,266.2 L1373.3,270.6 L1376.4,274.9 L1379.5,279.9 L1382.0,283.7 L1383.9,286.2 L1388.9,284.9 L1393.3,285.5 L1394.5,281.2 L1393.9,276.2 L1395.1,271.2 L1396.6,268.7 L1397.0,274.9 L1396.4,281.2 L1395.8,286.2 L1391.4,288.7 L1390.2,292.4 L1392.0,297.4 L1391.4,302.4 L1393.9,305.5 L1397.6,306.8 L1401.4,309.9 L1404.5,314.3 L1406.4,309.9 L1407.0,307.4 L1409.5,303.6 L1412.6,298.7 L1416.4,293.0 L1418.9,287.4 L1418.3,282.4 L1417.6,278.0 L1419.5,279.9 L1420.7,284.9 L1422.6,289.9 L1425.1,293.7 L1431.4,293.0 L1433.9,289.9 L1435.7,286.2 L1440.1,283.0 L1445.1,279.9 L1448.8,276.2 L1449.1,271.8 L1449.5,277.4 L1446.3,281.2 L1442.0,284.9 L1443.9,289.9 L1446.3,294.9 L1448.8,299.3 L1447.0,304.9 L1441.4,307.4 L1437.6,311.1 L1434.5,316.0 L1433.2,316.2 L1432.0,319.4 L1433.2,323.7 L1435.7,326.2 L1440.1,325.6 L1445.1,322.5 L1443.2,326.9 L1440.1,330.0 L1441.4,333.1 L1437.6,336.8 L1433.9,335.6 L1428.9,336.8 L1422.6,339.3 L1417.6,341.8 L1414.5,345.6 L1415.1,350.0 L1416.4,354.3 L1415.1,360.0 L1414.5,366.2 L1414.1,371.2 L1415.8,376.8 L1418.9,381.2 L1423.9,384.3 L1430.1,385.3 L1436.4,384.3 L1430.7,386.8 L1427.6,391.2 L1423.9,396.2 L1420.1,401.2 L1416.4,406.8 L1412.6,412.4 L1409.5,418.0 L1408.3,422.4 L1409.5,426.0 L1408.6,425.0 L1410.8,430.0 L1413.3,435.0 L1415.8,440.0 L1418.3,445.0 L1418.9,447.5 L1415.8,447.5 L1412.0,450.0 L1408.3,451.8 L1402.6,452.7 L1398.9,455.0 L1397.4,459.3 L1398.9,463.7 L1401.4,468.1 L1404.5,472.4 L1406.4,477.4 L1408.3,481.8 L1410.1,485.6 L1411.4,491.2 L1407.0,486.8 L1401.4,483.1 L1395.8,479.3 L1390.0,471.2 L1385.0,467.5 L1380.0,465.6 L1375.0,465.6 L1368.8,468.1 L1362.5,471.2 L1356.3,474.3 L1350.1,477.5 L1345.1,479.0 L1338.8,479.3 L1331.3,479.3 L1328.8,476.2 L1325.7,472.5 L1322.0,471.2 L1318.8,472.5 L1315.1,470.0 L1311.3,468.7 L1309.5,470.0 L1310.7,473.7 L1313.8,476.8 L1315.1,479.3 L1310.1,480.0 L1303.9,482.4 L1297.6,484.9 L1292.6,488.7 L1287.6,491.2 L1283.9,491.8 L1278.9,492.4 L1273.9,495.6 L1269.5,499.9 L1266.4,504.9 L1261.4,508.7 L1256.4,513.7 L1252.7,517.4 L1250.2,517.4 L1249.5,523.7 L1248.9,529.9 L1248.3,534.9 L1243.9,537.4 L1238.9,541.1 L1235.8,546.0 L1236.4,545.6 L1231.4,548.7 L1226.4,552.5 L1222.1,555.0 L1217.7,555.6 L1213.9,560.0 L1210.2,564.3 L1206.4,568.7 L1202.7,573.1 L1199.0,577.5 L1196.5,581.8 L1195.2,586.2 L1196.5,589.3 L1199.6,589.9 L1202.7,588.1 L1207.7,586.8 L1212.7,586.2 L1215.8,583.7 L1218.3,581.8 L1222.1,583.7 L1225.2,586.8 L1228.3,588.7 L1232.0,586.8 L1233.9,583.7 L1231.4,580.6 L1232.7,576.8 L1235.2,573.1 L1237.7,570.0 L1241.4,566.8 L1246.4,566.2 L1251.4,566.2 L1256.4,563.7 L1261.4,561.8 L1266.4,560.6 L1272.6,561.2 L1277.6,561.8 L1281.4,561.2 L1285.1,559.3 L1280.1,562.7 L1277.6,566.2 L1277.0,571.2 L1278.3,576.8 L1275.1,579.3 L1273.9,582.4 L1275.8,586.8 L1278.9,591.2 L1282.6,596.2 L1286.4,601.2 L1288.9,603.1 L1296.4,598.7 L1291.4,603.1 L1287.0,605.5 L1285.1,609.9 L1281.4,613.7 L1278.9,618.7 L1277.6,624.9 L1278.9,629.9 L1282.0,634.9 L1285.1,638.6 L1287.6,640.5 L1295.1,638.6 L1302.0,636.8 L1297.6,640.5 L1292.6,643.0 L1287.6,642.4 L1286.1,645.0 L1286.3,650.0 L1285.1,655.0 L1283.2,661.2 L1282.0,667.5 L1280.7,672.5 L1278.2,678.1 L1275.1,683.7 L1271.3,689.3 L1267.6,694.3 L1262.6,698.1 L1257.6,702.4 L1252.6,706.4 L1248.9,707.4 L1245.1,708.7 L1241.4,712.4 L1237.6,715.5 L1233.9,718.0 L1231.4,719.3 L1229.5,723.0 L1223.9,723.4 L1217.6,723.0 L1212.7,722.7 L1208.3,724.7 L1206.4,726.8 L1207.7,731.1 L1205.2,728.7 L1201.4,728.0 L1198.3,731.1 L1195.2,735.5 L1192.0,739.9 L1187.1,741.1 L1185.2,743.6 L1187.0,746.9 L1185.8,750.0 L1180.2,748.7 L1176.4,746.9 L1175.2,750.6 L1171.4,751.2 L1166.4,748.1 L1161.4,746.2 L1157.7,746.0 L1154.6,748.7 L1154.0,753.7 L1152.7,758.1 L1149.0,760.6 L1144.0,762.5 L1140.2,764.3 L1136.5,767.5 L1132.1,768.7 L1127.7,770.0 L1126.5,773.7 L1127.1,777.5 L1124.6,780.6 L1125.2,783.1 L1130.2,782.2 L1136.5,780.6 L1142.7,781.2 L1147.7,783.1 L1150.8,786.2 L1151.5,791.2 L1151.2,796.8 L1149.0,799.9 L1144.0,801.8 L1140.2,804.3 L1137.1,807.4 L1133.3,808.1 L1132.5,809.9 L1135.2,811.2 L1139.6,813.0 L1141.5,816.8 L1144.0,819.9 L1146.5,818.7 L1147.1,814.9 L1154.0,815.5 L1160.2,815.5 L1168.9,814.3 L1176.4,812.4 L1182.0,809.9 L1180.2,806.2 L1179.5,801.2 L1176.4,799.9 L1181.4,798.7 L1189.5,796.2 L1182.7,799.9 L1182.0,804.9 L1183.9,809.3 L1186.4,812.4 L1178.9,814.9 L1171.4,817.4 L1166.4,818.7 L1160.2,818.0 L1154.0,818.0 L1150.8,819.9 L1152.7,823.0 L1157.7,826.2 L1160.2,831.2 L1165.2,834.3 L1170.2,836.8 L1173.9,838.6 L1177.7,834.9 L1181.4,829.9 L1186.4,828.0 L1193.9,827.7 L1198.9,826.8 L1202.7,827.4 L1205.1,823.7 L1207.6,817.4 L1209.5,812.4 L1212.6,809.3 L1218.9,807.4 L1226.4,808.1 L1233.9,808.7 L1238.9,806.8 L1240.1,804.3 L1237.6,801.2 L1240.7,800.6 L1243.2,803.1 L1245.7,799.9 L1247.6,797.2 L1248.2,801.2 L1247.0,804.9 L1249.5,808.7 L1255.1,808.7 L1248.9,809.9 L1245.1,808.7 L1244.5,812.4 L1247.6,817.4 L1252.6,821.2 L1258.8,822.4 L1265.1,821.2 L1270.1,819.9 L1275.1,822.4 L1281.3,823.7 L1285.7,820.5 L1283.8,824.9 L1278.8,827.4 L1272.6,828.7 L1266.3,829.3 L1265.1,826.2 L1262.6,825.5 L1261.3,828.7 L1257.0,831.2 L1255.7,836.1 L1257.0,839.9 L1255.1,843.6 L1257.6,848.0 L1257.6,854.9 L1275.1,854.9 L1275.1,848.0 L1276.3,846.5 L1281.3,844.3 L1286.3,845.5 L1288.8,843.6 L1292.6,845.5 L1297.6,843.6 L1298.8,839.9 L1296.9,836.1 L1301.3,833.7 L1307.5,832.4 L1313.8,831.8 L1317.5,834.9 L1320.0,838.6 L1323.2,843.6 L1325.7,848.0 L1325.7,854.9" fill="none" stroke="#fff" stroke-width="7.2" stroke-linejoin="round" clip-path="url(#c1)"/>
<path d="M1218.8,-6.0 L1215.7,-2.3 L1214.5,0.0 L1212.0,3.4 L1206.3,5.9 L1201.3,8.4 L1197.6,11.5 L1195.7,15.9 L1194.5,20.8 L1191.4,24.0 L1188.2,27.7 L1185.7,31.5 L1185.7,37.7 L1184.5,44.0 L1182.6,50.2 L1181.4,54.6 L1176.4,61.4 L1172.6,66.4 L1167.6,69.5 L1163.9,72.7 L1162.6,77.7 L1162.0,83.9 L1160.1,88.9 L1158.6,93.9 L1158.8,92.4 L1157.8,99.9 L1158.2,107.4 L1159.5,114.9 L1160.7,121.2 L1163.2,125.9 L1166.1,126.2 L1168.2,122.4 L1167.0,117.4 L1164.5,112.4 L1161.3,107.4 L1157.6,102.4 L1154.5,98.7 L1152.0,97.4 L1149.5,99.9 L1145.1,100.6 L1142.6,103.7 L1141.4,109.9 L1141.4,117.4 L1142.6,124.9 L1144.5,131.2 L1147.0,137.4 L1151.3,143.6 L1156.3,149.9 L1161.3,154.9 L1165.1,157.5 L1167.0,163.7 L1170.1,167.5 L1170.7,172.5 L1169.4,177.5 L1171.3,182.5 L1176.3,185.6 L1181.3,187.5 L1185.1,189.3 L1187.3,187.5 L1186.3,182.5 L1184.4,177.5 L1185.1,173.7 L1181.9,169.3 L1178.8,163.7 L1176.9,158.7 L1174.4,155.0 L1172.6,150.0 L1175.1,143.6 L1180.1,138.7 L1185.1,136.2 L1190.7,136.8 L1193.2,141.1 L1196.3,144.9 L1198.8,146.2 L1205.0,148.7 L1211.3,152.5 L1217.5,156.9 L1222.5,161.2 L1225.9,168.7 L1230.2,173.0 L1235.2,173.7 L1240.2,176.8 L1245.8,178.4 L1249.6,176.2 L1251.5,171.2 L1250.8,164.9 L1251.5,158.7 L1250.8,152.4 L1249.0,147.4 L1245.2,144.9 L1242.7,142.4 L1241.5,137.5 L1241.7,131.2 L1243.7,127.2 L1245.8,132.5 L1248.3,136.8 L1254.0,140.0 L1260.2,142.4 L1264.0,143.1 L1265.8,139.3 L1268.3,136.2 L1267.1,142.4 L1268.3,147.4 L1271.4,152.4 L1276.4,156.8 L1281.4,158.1 L1285.8,156.8 L1284.9,151.2 L1286.2,144.9 L1287.7,151.2 L1288.7,157.4 L1293.9,158.7 L1299.5,158.1 L1304.5,154.3 L1310.2,149.9 L1315.8,147.4 L1318.3,144.9 L1316.4,141.2 L1313.9,139.3 L1316.4,135.6 L1318.3,131.8 L1320.1,136.8 L1325.1,138.1 L1328.9,137.5 L1332.0,133.7 L1337.6,133.1 L1343.9,133.7 L1348.2,133.7 L1350.7,130.6 L1351.4,125.0 L1350.7,118.7 L1350.1,113.7 L1348.9,110.0 L1350.1,107.5 L1353.2,110.0 L1356.4,111.9 L1358.9,108.7 L1363.9,110.6 L1371.3,111.5 L1380.1,112.2 L1388.8,112.9 L1397.6,113.5 L1406.3,113.7 L1412.6,111.9 L1417.5,110.6 L1420.0,111.9 L1416.3,114.4 L1420.0,115.6 L1415.0,118.1 L1408.8,119.3 L1402.6,118.1 L1397.6,115.0 L1391.3,115.6 L1385.1,118.7 L1382.0,122.5 L1383.2,125.6 L1388.2,127.5 L1385.1,130.0 L1381.3,127.5 L1376.3,126.8 L1372.6,130.0 L1370.1,136.2 L1368.2,142.4 L1365.7,149.9 L1366.3,154.9 L1364.5,160.6 L1360.1,164.3 L1357.0,166.2 L1354.5,172.4 L1352.0,178.7 L1349.5,186.2 L1347.6,193.6 L1345.7,201.1 L1344.5,206.0 L1345.2,205.0 L1342.7,210.0 L1340.2,213.1 L1342.1,217.5 L1345.2,221.2 L1349.6,226.8 L1353.9,232.5 L1358.3,238.1 L1362.1,241.8 L1364.6,246.8 L1367.1,251.2 L1369.5,253.1 L1370.2,257.4 L1368.9,261.8 L1370.2,266.2 L1373.3,270.6 L1376.4,274.9 L1379.5,279.9 L1382.0,283.7 L1383.9,286.2 L1388.9,284.9 L1393.3,285.5 L1394.5,281.2 L1393.9,276.2 L1395.1,271.2 L1396.6,268.7 L1397.0,274.9 L1396.4,281.2 L1395.8,286.2 L1391.4,288.7 L1390.2,292.4 L1392.0,297.4 L1391.4,302.4 L1393.9,305.5 L1397.6,306.8 L1401.4,309.9 L1404.5,314.3 L1406.4,309.9 L1407.0,307.4 L1409.5,303.6 L1412.6,298.7 L1416.4,293.0 L1418.9,287.4 L1418.3,282.4 L1417.6,278.0 L1419.5,279.9 L1420.7,284.9 L1422.6,289.9 L1425.1,293.7 L1431.4,293.0 L1433.9,289.9 L1435.7,286.2 L1440.1,283.0 L1445.1,279.9 L1448.8,276.2 L1449.1,271.8 L1449.5,277.4 L1446.3,281.2 L1442.0,284.9 L1443.9,289.9 L1446.3,294.9 L1448.8,299.3 L1447.0,304.9 L1441.4,307.4 L1437.6,311.1 L1434.5,316.0 L1433.2,316.2 L1432.0,319.4 L1433.2,323.7 L1435.7,326.2 L1440.1,325.6 L1445.1,322.5 L1443.2,326.9 L1440.1,330.0 L1441.4,333.1 L1437.6,336.8 L1433.9,335.6 L1428.9,336.8 L1422.6,339.3 L1417.6,341.8 L1414.5,345.6 L1415.1,350.0 L1416.4,354.3 L1415.1,360.0 L1414.5,366.2 L1414.1,371.2 L1415.8,376.8 L1418.9,381.2 L1423.9,384.3 L1430.1,385.3 L1436.4,384.3 L1430.7,386.8 L1427.6,391.2 L1423.9,396.2 L1420.1,401.2 L1416.4,406.8 L1412.6,412.4 L1409.5,418.0 L1408.3,422.4 L1409.5,426.0 L1408.6,425.0 L1410.8,430.0 L1413.3,435.0 L1415.8,440.0 L1418.3,445.0 L1418.9,447.5 L1415.8,447.5 L1412.0,450.0 L1408.3,451.8 L1402.6,452.7 L1398.9,455.0 L1397.4,459.3 L1398.9,463.7 L1401.4,468.1 L1404.5,472.4 L1406.4,477.4 L1408.3,481.8 L1410.1,485.6 L1411.4,491.2 L1407.0,486.8 L1401.4,483.1 L1395.8,479.3 L1390.0,471.2 L1385.0,467.5 L1380.0,465.6 L1375.0,465.6 L1368.8,468.1 L1362.5,471.2 L1356.3,474.3 L1350.1,477.5 L1345.1,479.0 L1338.8,479.3 L1331.3,479.3 L1328.8,476.2 L1325.7,472.5 L1322.0,471.2 L1318.8,472.5 L1315.1,470.0 L1311.3,468.7 L1309.5,470.0 L1310.7,473.7 L1313.8,476.8 L1315.1,479.3 L1310.1,480.0 L1303.9,482.4 L1297.6,484.9 L1292.6,488.7 L1287.6,491.2 L1283.9,491.8 L1278.9,492.4 L1273.9,495.6 L1269.5,499.9 L1266.4,504.9 L1261.4,508.7 L1256.4,513.7 L1252.7,517.4 L1250.2,517.4 L1249.5,523.7 L1248.9,529.9 L1248.3,534.9 L1243.9,537.4 L1238.9,541.1 L1235.8,546.0 L1236.4,545.6 L1231.4,548.7 L1226.4,552.5 L1222.1,555.0 L1217.7,555.6 L1213.9,560.0 L1210.2,564.3 L1206.4,568.7 L1202.7,573.1 L1199.0,577.5 L1196.5,581.8 L1195.2,586.2 L1196.5,589.3 L1199.6,589.9 L1202.7,588.1 L1207.7,586.8 L1212.7,586.2 L1215.8,583.7 L1218.3,581.8 L1222.1,583.7 L1225.2,586.8 L1228.3,588.7 L1232.0,586.8 L1233.9,583.7 L1231.4,580.6 L1232.7,576.8 L1235.2,573.1 L1237.7,570.0 L1241.4,566.8 L1246.4,566.2 L1251.4,566.2 L1256.4,563.7 L1261.4,561.8 L1266.4,560.6 L1272.6,561.2 L1277.6,561.8 L1281.4,561.2 L1285.1,559.3 L1280.1,562.7 L1277.6,566.2 L1277.0,571.2 L1278.3,576.8 L1275.1,579.3 L1273.9,582.4 L1275.8,586.8 L1278.9,591.2 L1282.6,596.2 L1286.4,601.2 L1288.9,603.1 L1296.4,598.7 L1291.4,603.1 L1287.0,605.5 L1285.1,609.9 L1281.4,613.7 L1278.9,618.7 L1277.6,624.9 L1278.9,629.9 L1282.0,634.9 L1285.1,638.6 L1287.6,640.5 L1295.1,638.6 L1302.0,636.8 L1297.6,640.5 L1292.6,643.0 L1287.6,642.4 L1286.1,645.0 L1286.3,650.0 L1285.1,655.0 L1283.2,661.2 L1282.0,667.5 L1280.7,672.5 L1278.2,678.1 L1275.1,683.7 L1271.3,689.3 L1267.6,694.3 L1262.6,698.1 L1257.6,702.4 L1252.6,706.4 L1248.9,707.4 L1245.1,708.7 L1241.4,712.4 L1237.6,715.5 L1233.9,718.0 L1231.4,719.3 L1229.5,723.0 L1223.9,723.4 L1217.6,723.0 L1212.7,722.7 L1208.3,724.7 L1206.4,726.8 L1207.7,731.1 L1205.2,728.7 L1201.4,728.0 L1198.3,731.1 L1195.2,735.5 L1192.0,739.9 L1187.1,741.1 L1185.2,743.6 L1187.0,746.9 L1185.8,750.0 L1180.2,748.7 L1176.4,746.9 L1175.2,750.6 L1171.4,751.2 L1166.4,748.1 L1161.4,746.2 L1157.7,746.0 L1154.6,748.7 L1154.0,753.7 L1152.7,758.1 L1149.0,760.6 L1144.0,762.5 L1140.2,764.3 L1136.5,767.5 L1132.1,768.7 L1127.7,770.0 L1126.5,773.7 L1127.1,777.5 L1124.6,780.6 L1125.2,783.1 L1130.2,782.2 L1136.5,780.6 L1142.7,781.2 L1147.7,783.1 L1150.8,786.2 L1151.5,791.2 L1151.2,796.8 L1149.0,799.9 L1144.0,801.8 L1140.2,804.3 L1137.1,807.4 L1133.3,808.1 L1132.5,809.9 L1135.2,811.2 L1139.6,813.0 L1141.5,816.8 L1144.0,819.9 L1146.5,818.7 L1147.1,814.9 L1154.0,815.5 L1160.2,815.5 L1168.9,814.3 L1176.4,812.4 L1182.0,809.9 L1180.2,806.2 L1179.5,801.2 L1176.4,799.9 L1181.4,798.7 L1189.5,796.2 L1182.7,799.9 L1182.0,804.9 L1183.9,809.3 L1186.4,812.4 L1178.9,814.9 L1171.4,817.4 L1166.4,818.7 L1160.2,818.0 L1154.0,818.0 L1150.8,819.9 L1152.7,823.0 L1157.7,826.2 L1160.2,831.2 L1165.2,834.3 L1170.2,836.8 L1173.9,838.6 L1177.7,834.9 L1181.4,829.9 L1186.4,828.0 L1193.9,827.7 L1198.9,826.8 L1202.7,827.4 L1205.1,823.7 L1207.6,817.4 L1209.5,812.4 L1212.6,809.3 L1218.9,807.4 L1226.4,808.1 L1233.9,808.7 L1238.9,806.8 L1240.1,804.3 L1237.6,801.2 L1240.7,800.6 L1243.2,803.1 L1245.7,799.9 L1247.6,797.2 L1248.2,801.2 L1247.0,804.9 L1249.5,808.7 L1255.1,808.7 L1248.9,809.9 L1245.1,808.7 L1244.5,812.4 L1247.6,817.4 L1252.6,821.2 L1258.8,822.4 L1265.1,821.2 L1270.1,819.9 L1275.1,822.4 L1281.3,823.7 L1285.7,820.5 L1283.8,824.9 L1278.8,827.4 L1272.6,828.7 L1266.3,829.3 L1265.1,826.2 L1262.6,825.5 L1261.3,828.7 L1257.0,831.2 L1255.7,836.1 L1257.0,839.9 L1255.1,843.6 L1257.6,848.0 L1257.6,854.9 L1275.1,854.9 L1275.1,848.0 L1276.3,846.5 L1281.3,844.3 L1286.3,845.5 L1288.8,843.6 L1292.6,845.5 L1297.6,843.6 L1298.8,839.9 L1296.9,836.1 L1301.3,833.7 L1307.5,832.4 L1313.8,831.8 L1317.5,834.9 L1320.0,838.6 L1323.2,843.6 L1325.7,848.0 L1325.7,854.9" fill="none" stroke="#198EC8" stroke-width="1.7" stroke-linejoin="round" stroke-linecap="round"/>
<clipPath id="c2"><path d="M1290.7,476.8 L1288.9,474.3 L1283.9,473.7 L1279.5,473.1 L1277.0,475.6 L1272.6,477.5 L1269.5,478.1 L1268.3,473.7 L1266.4,468.7 L1265.8,465.0 L1262.6,462.5 L1260.8,457.5 L1258.9,454.4 L1253.9,451.2 L1247.7,450.0 L1241.4,449.0 L1236.4,450.6 L1231.4,452.5 L1225.2,454.4 L1220.2,456.8 L1219.6,460.0 L1220.8,465.0 L1220.8,471.2 L1220.8,478.7 L1218.9,477.5 L1216.4,473.7 L1212.7,471.8 L1207.7,471.8 L1204.6,474.3 L1203.7,478.1 L1205.8,481.8 L1210.2,483.1 L1213.9,483.1 L1216.4,486.8 L1218.9,489.9 L1222.7,491.2 L1225.2,489.9 L1227.7,493.7 L1228.9,497.4 L1229.5,502.4 L1232.0,504.9 L1236.4,508.0 L1239.5,509.3 L1242.0,505.5 L1244.5,503.1 L1242.7,507.4 L1241.4,511.8 L1242.0,515.5 L1245.8,515.9 L1250.2,514.9 L1253.9,513.0 L1257.6,509.9 L1261.4,506.8 L1265.1,503.7 L1267.6,499.3 L1272.0,494.9 L1277.0,491.8 L1282.6,489.9 L1285.1,486.2 L1287.6,481.8 L1290.1,478.7Z" clip-rule="evenodd"/></clipPath>
<path d="M1290.7,476.8 L1288.9,474.3 L1283.9,473.7 L1279.5,473.1 L1277.0,475.6 L1272.6,477.5 L1269.5,478.1 L1268.3,473.7 L1266.4,468.7 L1265.8,465.0 L1262.6,462.5 L1260.8,457.5 L1258.9,454.4 L1253.9,451.2 L1247.7,450.0 L1241.4,449.0 L1236.4,450.6 L1231.4,452.5 L1225.2,454.4 L1220.2,456.8 L1219.6,460.0 L1220.8,465.0 L1220.8,471.2 L1220.8,478.7 L1218.9,477.5 L1216.4,473.7 L1212.7,471.8 L1207.7,471.8 L1204.6,474.3 L1203.7,478.1 L1205.8,481.8 L1210.2,483.1 L1213.9,483.1 L1216.4,486.8 L1218.9,489.9 L1222.7,491.2 L1225.2,489.9 L1227.7,493.7 L1228.9,497.4 L1229.5,502.4 L1232.0,504.9 L1236.4,508.0 L1239.5,509.3 L1242.0,505.5 L1244.5,503.1 L1242.7,507.4 L1241.4,511.8 L1242.0,515.5 L1245.8,515.9 L1250.2,514.9 L1253.9,513.0 L1257.6,509.9 L1261.4,506.8 L1265.1,503.7 L1267.6,499.3 L1272.0,494.9 L1277.0,491.8 L1282.6,489.9 L1285.1,486.2 L1287.6,481.8 L1290.1,478.7Z" fill="#83D5F4" fill-rule="evenodd"/>
<path d="M1290.7,476.8 L1288.9,474.3 L1283.9,473.7 L1279.5,473.1 L1277.0,475.6 L1272.6,477.5 L1269.5,478.1 L1268.3,473.7 L1266.4,468.7 L1265.8,465.0 L1262.6,462.5 L1260.8,457.5 L1258.9,454.4 L1253.9,451.2 L1247.7,450.0 L1241.4,449.0 L1236.4,450.6 L1231.4,452.5 L1225.2,454.4 L1220.2,456.8 L1219.6,460.0 L1220.8,465.0 L1220.8,471.2 L1220.8,478.7 L1218.9,477.5 L1216.4,473.7 L1212.7,471.8 L1207.7,471.8 L1204.6,474.3 L1203.7,478.1 L1205.8,481.8 L1210.2,483.1 L1213.9,483.1 L1216.4,486.8 L1218.9,489.9 L1222.7,491.2 L1225.2,489.9 L1227.7,493.7 L1228.9,497.4 L1229.5,502.4 L1232.0,504.9 L1236.4,508.0 L1239.5,509.3 L1242.0,505.5 L1244.5,503.1 L1242.7,507.4 L1241.4,511.8 L1242.0,515.5 L1245.8,515.9 L1250.2,514.9 L1253.9,513.0 L1257.6,509.9 L1261.4,506.8 L1265.1,503.7 L1267.6,499.3 L1272.0,494.9 L1277.0,491.8 L1282.6,489.9 L1285.1,486.2 L1287.6,481.8 L1290.1,478.7Z" fill="none" stroke="#fff" stroke-width="7.2" stroke-linejoin="round" clip-path="url(#c2)"/>
<path d="M1290.7,476.8 L1288.9,474.3 L1283.9,473.7 L1279.5,473.1 L1277.0,475.6 L1272.6,477.5 L1269.5,478.1 L1268.3,473.7 L1266.4,468.7 L1265.8,465.0 L1262.6,462.5 L1260.8,457.5 L1258.9,454.4 L1253.9,451.2 L1247.7,450.0 L1241.4,449.0 L1236.4,450.6 L1231.4,452.5 L1225.2,454.4 L1220.2,456.8 L1219.6,460.0 L1220.8,465.0 L1220.8,471.2 L1220.8,478.7 L1218.9,477.5 L1216.4,473.7 L1212.7,471.8 L1207.7,471.8 L1204.6,474.3 L1203.7,478.1 L1205.8,481.8 L1210.2,483.1 L1213.9,483.1 L1216.4,486.8 L1218.9,489.9 L1222.7,491.2 L1225.2,489.9 L1227.7,493.7 L1228.9,497.4 L1229.5,502.4 L1232.0,504.9 L1236.4,508.0 L1239.5,509.3 L1242.0,505.5 L1244.5,503.1 L1242.7,507.4 L1241.4,511.8 L1242.0,515.5 L1245.8,515.9 L1250.2,514.9 L1253.9,513.0 L1257.6,509.9 L1261.4,506.8 L1265.1,503.7 L1267.6,499.3 L1272.0,494.9 L1277.0,491.8 L1282.6,489.9 L1285.1,486.2 L1287.6,481.8 L1290.1,478.7Z" fill="none" stroke="#198EC8" stroke-width="1.7" stroke-linejoin="round" stroke-linecap="round"/>
<clipPath id="c3"><path d="M1073.3,-6.0 L1073.3,4.6 L1069.0,9.0 L1064.0,14.6 L1062.5,20.8 L1063.4,29.0 L1064.6,35.2 L1067.1,39.6 L1072.1,40.8 L1076.5,38.3 L1079.6,36.5 L1082.7,38.3 L1087.7,37.7 L1093.3,34.0 L1097.7,28.3 L1100.8,24.0 L1102.1,20.8 L1099.6,16.5 L1097.1,12.1 L1094.0,10.2 L1091.5,10.2 L1095.8,7.1 L1098.3,2.7 L1099.9,-6.0Z" clip-rule="evenodd"/></clipPath>
<path d="M1073.3,-6.0 L1073.3,4.6 L1069.0,9.0 L1064.0,14.6 L1062.5,20.8 L1063.4,29.0 L1064.6,35.2 L1067.1,39.6 L1072.1,40.8 L1076.5,38.3 L1079.6,36.5 L1082.7,38.3 L1087.7,37.7 L1093.3,34.0 L1097.7,28.3 L1100.8,24.0 L1102.1,20.8 L1099.6,16.5 L1097.1,12.1 L1094.0,10.2 L1091.5,10.2 L1095.8,7.1 L1098.3,2.7 L1099.9,-6.0Z" fill="#83D5F4" fill-rule="evenodd"/>
<path d="M1073.3,-6.0 L1073.3,4.6 L1069.0,9.0 L1064.0,14.6 L1062.5,20.8 L1063.4,29.0 L1064.6,35.2 L1067.1,39.6 L1072.1,40.8 L1076.5,38.3 L1079.6,36.5 L1082.7,38.3 L1087.7,37.7 L1093.3,34.0 L1097.7,28.3 L1100.8,24.0 L1102.1,20.8 L1099.6,16.5 L1097.1,12.1 L1094.0,10.2 L1091.5,10.2 L1095.8,7.1 L1098.3,2.7 L1099.9,-6.0Z" fill="none" stroke="#fff" stroke-width="7.2" stroke-linejoin="round" clip-path="url(#c3)"/>
<path d="M1073.3,-6.0 L1073.3,4.6 L1069.0,9.0 L1064.0,14.6 L1062.5,20.8 L1063.4,29.0 L1064.6,35.2 L1067.1,39.6 L1072.1,40.8 L1076.5,38.3 L1079.6,36.5 L1082.7,38.3 L1087.7,37.7 L1093.3,34.0 L1097.7,28.3 L1100.8,24.0 L1102.1,20.8 L1099.6,16.5 L1097.1,12.1 L1094.0,10.2 L1091.5,10.2 L1095.8,7.1 L1098.3,2.7 L1099.9,-6.0Z" fill="none" stroke="#198EC8" stroke-width="1.7" stroke-linejoin="round" stroke-linecap="round"/>
<clipPath id="c4"><path d="M1120.2,-6.0 L1122.0,0.0 L1126.4,3.4 L1132.7,6.5 L1138.9,8.4 L1145.1,9.0 L1151.4,7.7 L1156.4,5.9 L1158.3,2.7 L1157.9,-6.0Z" clip-rule="evenodd"/></clipPath>
<path d="M1120.2,-6.0 L1122.0,0.0 L1126.4,3.4 L1132.7,6.5 L1138.9,8.4 L1145.1,9.0 L1151.4,7.7 L1156.4,5.9 L1158.3,2.7 L1157.9,-6.0Z" fill="#83D5F4" fill-rule="evenodd"/>
<path d="M1120.2,-6.0 L1122.0,0.0 L1126.4,3.4 L1132.7,6.5 L1138.9,8.4 L1145.1,9.0 L1151.4,7.7 L1156.4,5.9 L1158.3,2.7 L1157.9,-6.0Z" fill="none" stroke="#fff" stroke-width="7.2" stroke-linejoin="round" clip-path="url(#c4)"/>
<path d="M1120.2,-6.0 L1122.0,0.0 L1126.4,3.4 L1132.7,6.5 L1138.9,8.4 L1145.1,9.0 L1151.4,7.7 L1156.4,5.9 L1158.3,2.7 L1157.9,-6.0Z" fill="none" stroke="#198EC8" stroke-width="1.7" stroke-linejoin="round" stroke-linecap="round"/>
<clipPath id="c5"><path d="M999.4,39.1 L1001.3,36.0 L1006.3,33.7 L1012.6,33.5 L1017.5,35.3 L1018.8,39.7 L1017.5,45.3 L1015.0,49.1 L1011.9,49.1 L1011.1,44.7 L1010.7,41.6 L1006.3,40.3 L1002.6,41.0Z" clip-rule="evenodd"/></clipPath>
<path d="M999.4,39.1 L1001.3,36.0 L1006.3,33.7 L1012.6,33.5 L1017.5,35.3 L1018.8,39.7 L1017.5,45.3 L1015.0,49.1 L1011.9,49.1 L1011.1,44.7 L1010.7,41.6 L1006.3,40.3 L1002.6,41.0Z" fill="#83D5F4" fill-rule="evenodd"/>
<path d="M999.4,39.1 L1001.3,36.0 L1006.3,33.7 L1012.6,33.5 L1017.5,35.3 L1018.8,39.7 L1017.5,45.3 L1015.0,49.1 L1011.9,49.1 L1011.1,44.7 L1010.7,41.6 L1006.3,40.3 L1002.6,41.0Z" fill="none" stroke="#fff" stroke-width="7.2" stroke-linejoin="round" clip-path="url(#c5)"/>
<path d="M999.4,39.1 L1001.3,36.0 L1006.3,33.7 L1012.6,33.5 L1017.5,35.3 L1018.8,39.7 L1017.5,45.3 L1015.0,49.1 L1011.9,49.1 L1011.1,44.7 L1010.7,41.6 L1006.3,40.3 L1002.6,41.0Z" fill="none" stroke="#198EC8" stroke-width="1.7" stroke-linejoin="round" stroke-linecap="round"/>
<clipPath id="c6"><path d="M1248.7,232.4 L1251.3,234.2 L1251.7,237.8 L1250.5,242.5 L1249.3,247.2 L1249.7,252.0 L1251.1,255.5 L1254.1,256.7 L1256.1,259.7 L1256.4,263.2 L1254.7,266.8 L1253.2,269.7 L1250.5,273.3 L1247.6,276.8 L1244.6,281.6 L1244.0,284.5 L1241.0,287.5 L1238.1,289.9 L1235.7,292.8 L1235.1,295.8 L1232.2,297.6 L1228.6,300.5 L1225.1,302.9 L1222.1,305.9 L1219.7,308.2 L1218.5,311.8 L1218.0,315.9 L1215.6,316.5 L1213.8,313.6 L1210.8,313.6 L1207.9,311.2 L1204.9,308.8 L1202.0,311.2 L1199.0,313.6 L1195.4,315.3 L1192.5,314.1 L1191.3,311.2 L1193.1,308.2 L1195.4,304.7 L1197.8,300.5 L1199.6,296.4 L1199.9,291.1 L1201.4,286.3 L1203.7,281.6 L1206.7,276.8 L1209.7,272.7 L1213.2,269.1 L1216.8,265.6 L1219.1,260.9 L1220.9,256.1 L1222.7,251.4 L1225.1,246.6 L1228.0,242.5 L1231.6,238.9 L1236.3,236.0 L1241.6,234.4 L1245.8,232.8Z" clip-rule="evenodd"/></clipPath>
<path d="M1248.7,232.4 L1251.3,234.2 L1251.7,237.8 L1250.5,242.5 L1249.3,247.2 L1249.7,252.0 L1251.1,255.5 L1254.1,256.7 L1256.1,259.7 L1256.4,263.2 L1254.7,266.8 L1253.2,269.7 L1250.5,273.3 L1247.6,276.8 L1244.6,281.6 L1244.0,284.5 L1241.0,287.5 L1238.1,289.9 L1235.7,292.8 L1235.1,295.8 L1232.2,297.6 L1228.6,300.5 L1225.1,302.9 L1222.1,305.9 L1219.7,308.2 L1218.5,311.8 L1218.0,315.9 L1215.6,316.5 L1213.8,313.6 L1210.8,313.6 L1207.9,311.2 L1204.9,308.8 L1202.0,311.2 L1199.0,313.6 L1195.4,315.3 L1192.5,314.1 L1191.3,311.2 L1193.1,308.2 L1195.4,304.7 L1197.8,300.5 L1199.6,296.4 L1199.9,291.1 L1201.4,286.3 L1203.7,281.6 L1206.7,276.8 L1209.7,272.7 L1213.2,269.1 L1216.8,265.6 L1219.1,260.9 L1220.9,256.1 L1222.7,251.4 L1225.1,246.6 L1228.0,242.5 L1231.6,238.9 L1236.3,236.0 L1241.6,234.4 L1245.8,232.8Z" fill="#B1BBF9" fill-rule="evenodd"/>
<path d="M1248.7,232.4 L1251.3,234.2 L1251.7,237.8 L1250.5,242.5 L1249.3,247.2 L1249.7,252.0 L1251.1,255.5 L1254.1,256.7 L1256.1,259.7 L1256.4,263.2 L1254.7,266.8 L1253.2,269.7 L1250.5,273.3 L1247.6,276.8 L1244.6,281.6 L1244.0,284.5 L1241.0,287.5 L1238.1,289.9 L1235.7,292.8 L1235.1,295.8 L1232.2,297.6 L1228.6,300.5 L1225.1,302.9 L1222.1,305.9 L1219.7,308.2 L1218.5,311.8 L1218.0,315.9 L1215.6,316.5 L1213.8,313.6 L1210.8,313.6 L1207.9,311.2 L1204.9,308.8 L1202.0,311.2 L1199.0,313.6 L1195.4,315.3 L1192.5,314.1 L1191.3,311.2 L1193.1,308.2 L1195.4,304.7 L1197.8,300.5 L1199.6,296.4 L1199.9,291.1 L1201.4,286.3 L1203.7,281.6 L1206.7,276.8 L1209.7,272.7 L1213.2,269.1 L1216.8,265.6 L1219.1,260.9 L1220.9,256.1 L1222.7,251.4 L1225.1,246.6 L1228.0,242.5 L1231.6,238.9 L1236.3,236.0 L1241.6,234.4 L1245.8,232.8Z" fill="none" stroke="#fff" stroke-width="7.2" stroke-linejoin="round" clip-path="url(#c6)"/>
<path d="M1248.7,232.4 L1251.3,234.2 L1251.7,237.8 L1250.5,242.5 L1249.3,247.2 L1249.7,252.0 L1251.1,255.5 L1254.1,256.7 L1256.1,259.7 L1256.4,263.2 L1254.7,266.8 L1253.2,269.7 L1250.5,273.3 L1247.6,276.8 L1244.6,281.6 L1244.0,284.5 L1241.0,287.5 L1238.1,289.9 L1235.7,292.8 L1235.1,295.8 L1232.2,297.6 L1228.6,300.5 L1225.1,302.9 L1222.1,305.9 L1219.7,308.2 L1218.5,311.8 L1218.0,315.9 L1215.6,316.5 L1213.8,313.6 L1210.8,313.6 L1207.9,311.2 L1204.9,308.8 L1202.0,311.2 L1199.0,313.6 L1195.4,315.3 L1192.5,314.1 L1191.3,311.2 L1193.1,308.2 L1195.4,304.7 L1197.8,300.5 L1199.6,296.4 L1199.9,291.1 L1201.4,286.3 L1203.7,281.6 L1206.7,276.8 L1209.7,272.7 L1213.2,269.1 L1216.8,265.6 L1219.1,260.9 L1220.9,256.1 L1222.7,251.4 L1225.1,246.6 L1228.0,242.5 L1231.6,238.9 L1236.3,236.0 L1241.6,234.4 L1245.8,232.8Z" fill="none" stroke="#198EC8" stroke-width="1.7" stroke-linejoin="round" stroke-linecap="round"/>
<clipPath id="c7"><path d="M879.2,92.2 L883.9,91.9 L888.9,92.8 L893.9,94.4 L900.2,94.0 L903.9,90.9 L906.4,85.9 L908.3,80.9 L910.8,75.9 L912.0,70.9 L912.7,65.9 L913.3,61.6 L916.4,59.7 L916.4,59.7 L920.1,62.2 L923.9,64.4 L931.4,64.4 L938.9,64.1 L943.9,62.2 L950.1,59.1 L955.1,57.2 L963.9,56.6 L967.0,54.1 L970.1,50.3 L975.1,48.4 L980.1,49.7 L984.5,51.6 L988.8,49.1 L993.8,50.3 L1001.3,54.1 L1007.6,57.2 L1013.8,55.3 L1018.8,54.1 L1025.0,55.9 L1030.0,60.9 L1033.8,65.9 L1035.0,72.2 L1033.8,78.4 L1032.5,84.7 L1031.9,89.0 L1037.5,89.7 L1041.9,92.8 L1043.8,97.1 L1043.1,102.1 L1041.9,107.1 L1046.3,109.0 L1050.0,112.0 L1052.7,118.0 L1055.2,123.0 L1057.7,126.2 L1060.8,129.9 L1063.3,134.9 L1065.8,135.9 L1070.2,136.2 L1073.9,138.7 L1077.0,143.0 L1078.9,148.6 L1079.9,156.0 L1079.5,157.5 L1077.0,162.5 L1072.7,166.2 L1067.7,168.5 L1062.1,170.6 L1057.7,173.1 L1053.9,176.8 L1051.4,181.2 L1049.6,185.6 L1048.9,189.3 L1050.4,193.4 L1053.3,190.0 L1055.8,185.6 L1058.9,181.8 L1063.9,179.0 L1068.9,176.2 L1072.0,175.6 L1074.5,177.1 L1080.2,176.8 L1086.4,176.0 L1092.7,175.2 L1095.1,176.2 L1097.6,180.0 L1099.5,183.7 L1100.8,188.7 L1102.6,193.7 L1105.1,198.1 L1107.0,202.4 L1107.4,207.4 L1108.3,212.4 L1110.1,216.8 L1112.4,220.5 L1112.0,226.2 L1109.5,232.5 L1108.8,238.7 L1107.0,245.0 L1105.7,250.0 L1102.6,253.5 L1099.5,253.5 L1098.2,257.5 L1096.4,261.8 L1092.6,265.6 L1089.5,268.7 L1086.4,271.2 L1085.7,274.9 L1083.2,278.1 L1080.1,277.4 L1078.9,274.3 L1073.9,273.1 L1068.9,273.1 L1062.6,274.3 L1057.6,276.2 L1055.8,278.7 L1056.4,283.7 L1057.0,288.7 L1055.8,293.7 L1055.1,298.7 L1053.9,303.7 L1050.8,307.4 L1046.4,309.9 L1042.0,313.7 L1037.7,317.4 L1033.9,319.9 L1028.9,320.6 L1025.2,319.9 L1029.4,316.8 L1025.0,313.9 L1020.0,310.5 L1013.8,306.8 L1006.9,305.2 L1006.9,305.5 L1003.8,303.7 L998.8,304.9 L995.0,303.1 L992.6,303.7 L991.9,309.9 L988.8,311.8 L983.8,313.7 L981.3,311.2 L975.1,311.8 L968.8,313.7 L962.6,315.5 L958.8,318.0 L955.7,314.3 L953.2,309.9 L952.6,304.9 L953.8,301.8 L956.3,297.4 L957.0,292.4 L955.1,288.7 L952.0,285.6 L948.2,283.1 L943.9,286.2 L940.1,283.7 L936.4,280.6 L933.2,276.8 L931.4,272.5 L929.5,268.7 L925.1,266.5 L927.0,265.0 L928.2,261.8 L927.0,257.5 L925.1,253.1 L922.6,249.4 L920.1,245.6 L916.4,242.5 L911.4,238.7 L907.6,236.5 L904.5,236.9 L901.4,240.0 L897.6,245.0 L893.9,249.4 L889.5,252.5 L885.2,253.7 L885.2,256.8 L883.3,260.6 L885.8,263.7 L886.4,266.2 L888.9,268.7 L890.8,271.8 L890.8,275.6 L888.9,278.1 L883.9,280.6 L880.2,283.7 L877.0,287.4 L875.8,291.2 L875.2,295.6 L873.9,299.9 L869.5,302.2 L865.2,301.2 L860.2,299.9 L857.7,298.1 L855.2,294.9 L851.4,296.2 L847.7,298.7 L842.7,298.4 L836.5,296.8 L830.8,294.9 L829.0,291.2 L825.2,287.4 L822.6,286.0 L817.6,284.3 L811.4,283.0 L803.9,281.8 L800.1,278.6 L798.9,273.6 L798.9,268.7 L797.0,263.7 L792.6,261.8 L787.6,259.3 L783.9,253.7 L781.4,248.7 L777.0,247.4 L772.7,244.3 L768.9,239.9 L765.2,234.9 L761.4,229.9 L759.5,226.2 L761.4,223.7 L766.4,221.8 L771.4,219.3 L775.1,215.6 L778.3,210.6 L781.4,207.2 L786.4,208.1 L793.9,209.3 L798.9,208.1 L803.9,205.0 L808.9,200.6 L813.9,196.8 L819.5,193.7 L818.9,190.6 L813.9,191.9 L808.9,188.7 L803.9,186.9 L798.9,184.4 L795.8,181.2 L792.6,178.1 L792.0,173.7 L792.7,173.0 L797.7,169.3 L802.7,166.2 L807.7,169.3 L811.4,171.2 L816.4,169.3 L821.4,166.2 L826.4,163.0 L830.2,163.7 L833.9,163.0 L838.9,164.3 L839.5,161.2 L838.9,156.2 L840.1,151.8 L843.9,147.4 L847.6,142.4 L850.8,137.4 L852.6,132.4 L853.3,127.5 L852.6,122.5 L853.9,118.7 L857.0,116.2 L857.6,112.5 L857.0,107.5 L858.3,103.7 L860.1,100.0 L863.9,96.9 L868.9,95.6 L873.9,93.7 L878.9,91.9ZM1077.9,201.4 L1081.4,202.4 L1086.4,206.2 L1091.4,210.6 L1095.1,216.2 L1096.6,222.4 L1095.4,228.7 L1093.7,233.7 L1092.7,238.7 L1093.7,241.8 L1090.2,240.9 L1084.9,242.6 L1086.4,238.7 L1087.7,233.0 L1087.0,227.4 L1086.2,221.2 L1085.8,214.9 L1083.3,211.2 L1080.2,208.4 L1078.3,204.9Z" clip-rule="evenodd"/></clipPath>
<path d="M879.2,92.2 L883.9,91.9 L888.9,92.8 L893.9,94.4 L900.2,94.0 L903.9,90.9 L906.4,85.9 L908.3,80.9 L910.8,75.9 L912.0,70.9 L912.7,65.9 L913.3,61.6 L916.4,59.7 L916.4,59.7 L920.1,62.2 L923.9,64.4 L931.4,64.4 L938.9,64.1 L943.9,62.2 L950.1,59.1 L955.1,57.2 L963.9,56.6 L967.0,54.1 L970.1,50.3 L975.1,48.4 L980.1,49.7 L984.5,51.6 L988.8,49.1 L993.8,50.3 L1001.3,54.1 L1007.6,57.2 L1013.8,55.3 L1018.8,54.1 L1025.0,55.9 L1030.0,60.9 L1033.8,65.9 L1035.0,72.2 L1033.8,78.4 L1032.5,84.7 L1031.9,89.0 L1037.5,89.7 L1041.9,92.8 L1043.8,97.1 L1043.1,102.1 L1041.9,107.1 L1046.3,109.0 L1050.0,112.0 L1052.7,118.0 L1055.2,123.0 L1057.7,126.2 L1060.8,129.9 L1063.3,134.9 L1065.8,135.9 L1070.2,136.2 L1073.9,138.7 L1077.0,143.0 L1078.9,148.6 L1079.9,156.0 L1079.5,157.5 L1077.0,162.5 L1072.7,166.2 L1067.7,168.5 L1062.1,170.6 L1057.7,173.1 L1053.9,176.8 L1051.4,181.2 L1049.6,185.6 L1048.9,189.3 L1050.4,193.4 L1053.3,190.0 L1055.8,185.6 L1058.9,181.8 L1063.9,179.0 L1068.9,176.2 L1072.0,175.6 L1074.5,177.1 L1080.2,176.8 L1086.4,176.0 L1092.7,175.2 L1095.1,176.2 L1097.6,180.0 L1099.5,183.7 L1100.8,188.7 L1102.6,193.7 L1105.1,198.1 L1107.0,202.4 L1107.4,207.4 L1108.3,212.4 L1110.1,216.8 L1112.4,220.5 L1112.0,226.2 L1109.5,232.5 L1108.8,238.7 L1107.0,245.0 L1105.7,250.0 L1102.6,253.5 L1099.5,253.5 L1098.2,257.5 L1096.4,261.8 L1092.6,265.6 L1089.5,268.7 L1086.4,271.2 L1085.7,274.9 L1083.2,278.1 L1080.1,277.4 L1078.9,274.3 L1073.9,273.1 L1068.9,273.1 L1062.6,274.3 L1057.6,276.2 L1055.8,278.7 L1056.4,283.7 L1057.0,288.7 L1055.8,293.7 L1055.1,298.7 L1053.9,303.7 L1050.8,307.4 L1046.4,309.9 L1042.0,313.7 L1037.7,317.4 L1033.9,319.9 L1028.9,320.6 L1025.2,319.9 L1029.4,316.8 L1025.0,313.9 L1020.0,310.5 L1013.8,306.8 L1006.9,305.2 L1006.9,305.5 L1003.8,303.7 L998.8,304.9 L995.0,303.1 L992.6,303.7 L991.9,309.9 L988.8,311.8 L983.8,313.7 L981.3,311.2 L975.1,311.8 L968.8,313.7 L962.6,315.5 L958.8,318.0 L955.7,314.3 L953.2,309.9 L952.6,304.9 L953.8,301.8 L956.3,297.4 L957.0,292.4 L955.1,288.7 L952.0,285.6 L948.2,283.1 L943.9,286.2 L940.1,283.7 L936.4,280.6 L933.2,276.8 L931.4,272.5 L929.5,268.7 L925.1,266.5 L927.0,265.0 L928.2,261.8 L927.0,257.5 L925.1,253.1 L922.6,249.4 L920.1,245.6 L916.4,242.5 L911.4,238.7 L907.6,236.5 L904.5,236.9 L901.4,240.0 L897.6,245.0 L893.9,249.4 L889.5,252.5 L885.2,253.7 L885.2,256.8 L883.3,260.6 L885.8,263.7 L886.4,266.2 L888.9,268.7 L890.8,271.8 L890.8,275.6 L888.9,278.1 L883.9,280.6 L880.2,283.7 L877.0,287.4 L875.8,291.2 L875.2,295.6 L873.9,299.9 L869.5,302.2 L865.2,301.2 L860.2,299.9 L857.7,298.1 L855.2,294.9 L851.4,296.2 L847.7,298.7 L842.7,298.4 L836.5,296.8 L830.8,294.9 L829.0,291.2 L825.2,287.4 L822.6,286.0 L817.6,284.3 L811.4,283.0 L803.9,281.8 L800.1,278.6 L798.9,273.6 L798.9,268.7 L797.0,263.7 L792.6,261.8 L787.6,259.3 L783.9,253.7 L781.4,248.7 L777.0,247.4 L772.7,244.3 L768.9,239.9 L765.2,234.9 L761.4,229.9 L759.5,226.2 L761.4,223.7 L766.4,221.8 L771.4,219.3 L775.1,215.6 L778.3,210.6 L781.4,207.2 L786.4,208.1 L793.9,209.3 L798.9,208.1 L803.9,205.0 L808.9,200.6 L813.9,196.8 L819.5,193.7 L818.9,190.6 L813.9,191.9 L808.9,188.7 L803.9,186.9 L798.9,184.4 L795.8,181.2 L792.6,178.1 L792.0,173.7 L792.7,173.0 L797.7,169.3 L802.7,166.2 L807.7,169.3 L811.4,171.2 L816.4,169.3 L821.4,166.2 L826.4,163.0 L830.2,163.7 L833.9,163.0 L838.9,164.3 L839.5,161.2 L838.9,156.2 L840.1,151.8 L843.9,147.4 L847.6,142.4 L850.8,137.4 L852.6,132.4 L853.3,127.5 L852.6,122.5 L853.9,118.7 L857.0,116.2 L857.6,112.5 L857.0,107.5 L858.3,103.7 L860.1,100.0 L863.9,96.9 L868.9,95.6 L873.9,93.7 L878.9,91.9ZM1077.9,201.4 L1081.4,202.4 L1086.4,206.2 L1091.4,210.6 L1095.1,216.2 L1096.6,222.4 L1095.4,228.7 L1093.7,233.7 L1092.7,238.7 L1093.7,241.8 L1090.2,240.9 L1084.9,242.6 L1086.4,238.7 L1087.7,233.0 L1087.0,227.4 L1086.2,221.2 L1085.8,214.9 L1083.3,211.2 L1080.2,208.4 L1078.3,204.9Z" fill="#83D5F4" fill-rule="evenodd"/>
<path d="M879.2,92.2 L883.9,91.9 L888.9,92.8 L893.9,94.4 L900.2,94.0 L903.9,90.9 L906.4,85.9 L908.3,80.9 L910.8,75.9 L912.0,70.9 L912.7,65.9 L913.3,61.6 L916.4,59.7 L916.4,59.7 L920.1,62.2 L923.9,64.4 L931.4,64.4 L938.9,64.1 L943.9,62.2 L950.1,59.1 L955.1,57.2 L963.9,56.6 L967.0,54.1 L970.1,50.3 L975.1,48.4 L980.1,49.7 L984.5,51.6 L988.8,49.1 L993.8,50.3 L1001.3,54.1 L1007.6,57.2 L1013.8,55.3 L1018.8,54.1 L1025.0,55.9 L1030.0,60.9 L1033.8,65.9 L1035.0,72.2 L1033.8,78.4 L1032.5,84.7 L1031.9,89.0 L1037.5,89.7 L1041.9,92.8 L1043.8,97.1 L1043.1,102.1 L1041.9,107.1 L1046.3,109.0 L1050.0,112.0 L1052.7,118.0 L1055.2,123.0 L1057.7,126.2 L1060.8,129.9 L1063.3,134.9 L1065.8,135.9 L1070.2,136.2 L1073.9,138.7 L1077.0,143.0 L1078.9,148.6 L1079.9,156.0 L1079.5,157.5 L1077.0,162.5 L1072.7,166.2 L1067.7,168.5 L1062.1,170.6 L1057.7,173.1 L1053.9,176.8 L1051.4,181.2 L1049.6,185.6 L1048.9,189.3 L1050.4,193.4 L1053.3,190.0 L1055.8,185.6 L1058.9,181.8 L1063.9,179.0 L1068.9,176.2 L1072.0,175.6 L1074.5,177.1 L1080.2,176.8 L1086.4,176.0 L1092.7,175.2 L1095.1,176.2 L1097.6,180.0 L1099.5,183.7 L1100.8,188.7 L1102.6,193.7 L1105.1,198.1 L1107.0,202.4 L1107.4,207.4 L1108.3,212.4 L1110.1,216.8 L1112.4,220.5 L1112.0,226.2 L1109.5,232.5 L1108.8,238.7 L1107.0,245.0 L1105.7,250.0 L1102.6,253.5 L1099.5,253.5 L1098.2,257.5 L1096.4,261.8 L1092.6,265.6 L1089.5,268.7 L1086.4,271.2 L1085.7,274.9 L1083.2,278.1 L1080.1,277.4 L1078.9,274.3 L1073.9,273.1 L1068.9,273.1 L1062.6,274.3 L1057.6,276.2 L1055.8,278.7 L1056.4,283.7 L1057.0,288.7 L1055.8,293.7 L1055.1,298.7 L1053.9,303.7 L1050.8,307.4 L1046.4,309.9 L1042.0,313.7 L1037.7,317.4 L1033.9,319.9 L1028.9,320.6 L1025.2,319.9 L1029.4,316.8 L1025.0,313.9 L1020.0,310.5 L1013.8,306.8 L1006.9,305.2M1077.9,201.4 L1081.4,202.4 L1086.4,206.2 L1091.4,210.6 L1095.1,216.2 L1096.6,222.4 L1095.4,228.7 L1093.7,233.7 L1092.7,238.7 L1093.7,241.8 L1090.2,240.9 L1084.9,242.6 L1086.4,238.7 L1087.7,233.0 L1087.0,227.4 L1086.2,221.2 L1085.8,214.9 L1083.3,211.2 L1080.2,208.4 L1078.3,204.9Z" fill="none" stroke="#fff" stroke-width="7.2" stroke-linejoin="round" clip-path="url(#c7)"/>
<path d="M879.2,92.2 L883.9,91.9 L888.9,92.8 L893.9,94.4 L900.2,94.0 L903.9,90.9 L906.4,85.9 L908.3,80.9 L910.8,75.9 L912.0,70.9 L912.7,65.9 L913.3,61.6 L916.4,59.7 L916.4,59.7 L920.1,62.2 L923.9,64.4 L931.4,64.4 L938.9,64.1 L943.9,62.2 L950.1,59.1 L955.1,57.2 L963.9,56.6 L967.0,54.1 L970.1,50.3 L975.1,48.4 L980.1,49.7 L984.5,51.6 L988.8,49.1 L993.8,50.3 L1001.3,54.1 L1007.6,57.2 L1013.8,55.3 L1018.8,54.1 L1025.0,55.9 L1030.0,60.9 L1033.8,65.9 L1035.0,72.2 L1033.8,78.4 L1032.5,84.7 L1031.9,89.0 L1037.5,89.7 L1041.9,92.8 L1043.8,97.1 L1043.1,102.1 L1041.9,107.1 L1046.3,109.0 L1050.0,112.0 L1052.7,118.0 L1055.2,123.0 L1057.7,126.2 L1060.8,129.9 L1063.3,134.9 L1065.8,135.9 L1070.2,136.2 L1073.9,138.7 L1077.0,143.0 L1078.9,148.6 L1079.9,156.0 L1079.5,157.5 L1077.0,162.5 L1072.7,166.2 L1067.7,168.5 L1062.1,170.6 L1057.7,173.1 L1053.9,176.8 L1051.4,181.2 L1049.6,185.6 L1048.9,189.3 L1050.4,193.4 L1053.3,190.0 L1055.8,185.6 L1058.9,181.8 L1063.9,179.0 L1068.9,176.2 L1072.0,175.6 L1074.5,177.1 L1080.2,176.8 L1086.4,176.0 L1092.7,175.2 L1095.1,176.2 L1097.6,180.0 L1099.5,183.7 L1100.8,188.7 L1102.6,193.7 L1105.1,198.1 L1107.0,202.4 L1107.4,207.4 L1108.3,212.4 L1110.1,216.8 L1112.4,220.5 L1112.0,226.2 L1109.5,232.5 L1108.8,238.7 L1107.0,245.0 L1105.7,250.0 L1102.6,253.5 L1099.5,253.5 L1098.2,257.5 L1096.4,261.8 L1092.6,265.6 L1089.5,268.7 L1086.4,271.2 L1085.7,274.9 L1083.2,278.1 L1080.1,277.4 L1078.9,274.3 L1073.9,273.1 L1068.9,273.1 L1062.6,274.3 L1057.6,276.2 L1055.8,278.7 L1056.4,283.7 L1057.0,288.7 L1055.8,293.7 L1055.1,298.7 L1053.9,303.7 L1050.8,307.4 L1046.4,309.9 L1042.0,313.7 L1037.7,317.4 L1033.9,319.9 L1028.9,320.6 L1025.2,319.9 L1029.4,316.8 L1025.0,313.9 L1020.0,310.5 L1013.8,306.8 L1006.9,305.2M1077.9,201.4 L1081.4,202.4 L1086.4,206.2 L1091.4,210.6 L1095.1,216.2 L1096.6,222.4 L1095.4,228.7 L1093.7,233.7 L1092.7,238.7 L1093.7,241.8 L1090.2,240.9 L1084.9,242.6 L1086.4,238.7 L1087.7,233.0 L1087.0,227.4 L1086.2,221.2 L1085.8,214.9 L1083.3,211.2 L1080.2,208.4 L1078.3,204.9Z" fill="none" stroke="#198EC8" stroke-width="1.7" stroke-linejoin="round" stroke-linecap="round"/>
<clipPath id="c8"><path d="M1006.9,305.9 L1011.9,311.2 L1017.5,315.5 L1022.5,318.0 L1026.3,319.7 L1026.8,324.4 L1022.6,330.6 L1017.6,333.6 L1008.8,328.6 L1000.1,324.4 L993.9,324.4 L991.4,331.9 L990.9,341.9 L992.6,349.4 L998.9,353.1 L1006.3,354.4 L1008.8,361.9 L1007.6,368.1 L1010.8,371.9 L1008.8,381.8 L1010.1,394.3 L1012.6,404.3 L1018.8,413.1 L1026.3,418.1 L1030.1,424.3 L1028.8,434.3 L1026.3,441.8 L1023.8,448.0 L1026.3,454.0 L1032.6,457.7 L1031.3,462.7 L1026.3,465.2 L1020.1,461.5 L1013.8,466.5 L1016.3,472.7 L1021.3,477.7 L1026.3,481.5 L1026.8,489.0 L1028.8,495.2 L1032.6,504.0 L1036.3,513.9 L1035.8,523.9 L1033.3,531.4 L1032.6,538.9 L1036.3,543.9 L1040.1,550.2 L1036.3,556.4 L1032.6,563.9 L1030.1,571.4 L1026.3,577.6 L1022.6,586.4 L1018.8,596.4 L1015.1,606.3 L1011.8,616.3 L1011.8,626.3 L1013.3,636.3 L1011.3,643.8 L1006.3,651.3 L1000.1,658.8 L995.1,666.3 L992.6,673.8 L990.9,680.0 L992.6,679.4 L988.9,683.2 L990.9,689.4 L993.9,695.7 L997.6,701.9 L998.4,709.4 L995.9,714.9 L990.1,717.4 L983.9,713.2 L977.6,710.7 L971.4,713.9 L963.9,716.4 L956.4,713.2 L950.2,711.4 L942.7,711.9 L936.4,714.4 L931.4,717.4 L926.4,723.2 L921.4,726.9 L916.4,726.4 L913.9,721.9 L907.7,723.9 L901.5,725.7 L895.2,726.9 L892.7,723.2 L889.0,724.4 L884.0,726.9 L876.5,726.9 L866.5,726.2 L859.0,727.4 L853.6,729.4 L846.1,731.9 L839.9,734.9 L832.4,736.4 L836.1,739.9 L841.6,741.4 L840.7,741.2 L838.9,745.6 L836.4,748.7 L835.7,755.0 L832.0,757.5 L828.2,759.4 L824.5,758.7 L820.7,760.0 L819.5,763.1 L817.6,766.2 L812.6,765.6 L807.6,765.0 L803.3,764.3 L801.6,761.8 L800.9,758.5 L800.1,761.8 L800.5,765.6 L798.3,769.3 L795.8,772.5 L797.6,775.0 L796.4,777.5 L792.7,778.7 L788.9,780.6 L785.2,782.5 L781.4,784.3 L781.4,787.4 L782.7,789.9 L780.2,791.8 L775.2,792.7 L770.2,793.7 L765.2,795.2 L760.2,796.2 L755.2,796.4 L750.2,796.2 L747.7,795.8 L748.6,791.2 L750.4,787.4 L752.9,785.0 L755.2,783.1 L754.6,779.3 L750.8,778.1 L746.4,776.8 L742.7,776.0 L737.7,777.1 L731.5,777.5 L737.1,778.7 L739.0,782.5 L741.2,786.4 L744.6,789.9 L746.4,793.1 L747.1,796.2 L745.8,799.9 L744.6,804.3 L742.1,807.4 L739.0,809.9 L735.2,812.4 L731.5,814.3 L727.7,816.2 L724.6,818.4 L720.8,820.5 L717.7,821.2 L714.6,823.7 L714.0,827.4 L714.6,831.2 L715.5,834.3 L713.0,835.9 L710.2,833.9 L708.7,830.5 L705.2,829.7 L701.5,830.5 L696.5,831.2 L694.0,831.8 L691.9,840.5 L686.3,841.1 L681.3,839.9 L676.3,838.6 L671.9,839.9 L670.7,843.6 L666.3,845.5 L660.0,846.1 L655.0,845.5 L651.3,846.1 L647.6,848.6 L647.6,854.9 L541.4,854.9 L541.4,848.0 L542.0,846.5 L546.4,843.6 L552.7,839.9 L560.1,834.9 L566.4,830.5 L572.6,826.2 L578.9,822.4 L585.1,819.9 L591.4,818.0 L594.5,816.2 L595.7,812.4 L593.9,810.5 L590.1,813.0 L586.6,812.4 L584.5,808.7 L583.2,804.9 L582.0,808.7 L581.4,813.0 L578.9,816.2 L575.1,818.7 L570.1,820.9 L565.1,822.4 L558.9,823.9 L553.9,824.9 L548.9,825.8 L541.4,827.0 L535.2,828.0 L531.4,831.2 L526.4,833.7 L521.4,836.8 L516.4,836.1 L511.4,834.9 L506.4,836.8 L504.0,840.5 L502.1,838.6 L502.7,834.9 L504.0,832.4 L508.9,831.2 L513.9,829.9 L515.2,826.8 L511.4,824.9 L509.6,822.4 L512.7,819.9 L518.9,819.3 L523.9,816.2 L525.2,812.4 L523.9,809.3 L527.7,806.2 L532.7,803.1 L537.7,801.2 L541.4,799.9 L545.2,797.4 L550.2,793.1 L556.4,788.7 L562.6,785.6 L568.9,783.1 L577.0,779.0 L566.4,782.2 L556.4,786.4 L548.9,789.7 L541.4,792.7 L536.4,794.3 L531.4,796.8 L526.4,798.7 L521.4,801.2 L517.7,803.1 L512.7,806.2 L507.7,808.9 L505.2,806.2 L501.5,803.1 L496.5,799.9 L494.0,797.4 L496.5,794.9 L499.6,792.4 L500.2,788.7 L497.7,785.6 L494.0,784.3 L490.2,787.4 L487.1,791.2 L484.0,794.9 L480.8,798.4 L478.4,796.2 L478.4,791.2 L480.2,787.4 L477.1,785.0 L472.7,783.1 L470.9,780.0 L467.7,776.8 L469.6,772.5 L474.0,768.7 L479.0,766.2 L484.0,766.8 L487.1,769.3 L490.2,770.6 L489.0,767.5 L485.2,764.3 L484.0,761.2 L487.7,759.4 L489.0,755.6 L492.7,752.5 L499.0,749.4 L506.4,745.6 L513.9,743.1 L520.2,741.2 L525.2,738.7 L527.1,735.6 L527.1,736.9 L528.9,733.1 L529.5,729.4 L532.0,726.9 L536.4,726.3 L541.4,725.7 L546.4,725.0 L550.8,724.4 L546.4,723.8 L541.4,723.8 L536.4,724.2 L532.7,725.0 L527.7,725.7 L522.7,726.3 L517.7,726.9 L512.7,728.1 L507.7,730.0 L504.0,731.9 L500.2,731.3 L497.1,728.1 L494.0,726.9 L491.5,728.8 L487.7,729.4 L484.0,726.9 L479.0,728.1 L476.5,730.6 L472.7,733.1 L469.0,734.4 L465.2,733.1 L463.4,729.4 L462.7,725.7 L461.5,721.9 L462.7,718.8 L465.9,716.9 L465.2,713.8 L467.7,710.7 L472.7,709.4 L475.2,711.9 L475.9,708.2 L479.0,704.4 L482.7,701.9 L485.2,698.2 L490.2,695.1 L496.5,693.2 L501.5,691.3 L505.2,692.6 L506.2,696.9 L507.1,701.6 L511.4,700.9 L516.4,698.4 L518.9,694.4 L518.3,688.8 L521.4,686.7 L524.6,688.2 L525.8,693.2 L527.1,698.8 L530.2,701.7 L535.2,703.4 L540.2,701.9 L543.9,700.7 L548.9,700.1 L543.9,698.8 L541.4,697.6 L538.9,695.7 L537.9,691.9 L540.2,688.8 L543.9,686.9 L545.4,683.2 L545.8,678.2 L544.5,675.1 L541.4,673.5 L536.4,672.0 L532.7,670.1 L530.8,667.0 L530.8,664.5 L533.9,662.6 L538.9,661.3 L543.9,660.5 L550.2,658.2 L555.1,655.7 L560.1,652.6 L563.9,649.5 L568.3,651.4 L572.0,653.8 L567.0,648.9 L565.1,645.7 L563.9,642.0 L564.5,638.2 L566.4,634.5 L568.9,632.6 L573.9,631.4 L578.9,632.0 L585.1,632.6 L591.4,632.2 L597.6,630.7 L603.9,629.7 L610.1,629.2 L616.3,628.2 L622.6,627.6 L626.4,627.0 L632.6,625.2 L638.9,623.4 L643.9,621.4 L647.6,622.2 L650.7,621.4 L652.6,618.4 L654.5,614.7 L658.9,613.9 L666.3,613.7 L676.3,613.2 L685.3,612.2 L676.3,610.2 L670.1,608.3 L663.9,608.9 L658.2,609.7 L656.4,604.9 L656.7,599.9 L657.9,594.9 L661.1,590.0 L656.4,591.4 L652.6,595.9 L649.1,602.4 L645.1,609.9 L641.4,616.2 L638.3,620.5 L632.6,623.4 L626.4,625.2 L620.1,625.5 L616.4,622.4 L612.7,623.4 L608.9,625.2 L606.4,625.2 L600.2,625.3 L593.9,623.7 L588.9,621.2 L584.6,619.9 L582.4,616.4 L581.4,613.7 L583.3,616.4 L582.1,619.9 L578.9,621.8 L573.9,623.7 L567.7,625.5 L564.0,627.4 L562.7,631.2 L559.0,633.0 L551.5,634.5 L542.7,636.4 L532.7,638.3 L530.9,636.2 L531.5,634.3 L539.0,628.9 L546.5,623.7 L555.2,616.8 L564.0,609.9 L568.9,604.9 L572.1,601.2 L573.9,597.4 L578.9,595.6 L585.2,594.3 L588.9,592.4 L589.5,587.5 L588.9,583.7 L591.4,580.0 L593.9,576.2 L595.8,571.2 L596.4,566.8 L598.9,563.7 L601.4,561.2 L604.5,558.7 L605.8,556.9 L601.4,556.2 L595.2,556.0 L591.4,555.0 L592.0,552.5 L595.2,548.7 L598.9,544.4 L602.0,540.0 L604.5,535.1 L607.0,528.9 L609.5,522.7 L612.7,516.4 L615.8,511.4 L618.9,508.9 L622.0,508.3 L625.1,511.4 L628.3,514.5 L632.0,516.4 L635.8,514.2 L637.6,511.4 L635.1,509.2 L637.0,506.4 L642.6,505.2 L648.9,503.9 L655.1,502.7 L659.5,503.9 L658.9,498.9 L662.0,497.7 L657.6,497.7 L651.4,496.4 L646.4,497.1 L645.1,494.6 L648.9,492.7 L653.9,491.4 L657.6,488.9 L660.1,486.4 L655.1,485.8 L648.9,485.4 L643.9,486.4 L636.4,487.7 L626.4,488.7 L616.4,489.6 L608.9,490.2 L602.7,490.8 L598.9,492.7 L595.2,494.6 L590.2,495.4 L585.8,494.6 L582.7,492.1 L581.4,488.9 L581.4,485.2 L580.8,482.1 L578.9,485.2 L578.3,489.6 L575.2,491.4 L572.4,489.9 L571.7,486.4 L572.2,481.4 L572.7,476.4 L570.4,472.1 L572.7,470.2 L576.4,472.1 L580.8,469.0 L578.9,464.0 L582.1,460.2 L570.2,459.6 L566.4,462.7 L564.0,467.7 L561.5,472.7 L557.7,476.4 L551.5,478.9 L547.7,477.7 L544.0,475.2 L539.0,474.6 L535.2,472.7 L536.5,469.0 L538.4,465.2 L541.5,462.7 L545.2,460.8 L549.6,458.3 L546.5,457.7 L541.5,459.0 L537.7,456.5 L537.1,454.0 L534.0,456.5 L532.7,459.6 L529.0,461.5 L524.0,461.5 L520.2,460.2 L517.7,457.1 L514.0,456.5 L511.4,453.6 L506.4,454.3 L502.1,455.5 L500.2,452.4 L501.5,448.7 L505.2,445.5 L510.2,444.9 L515.2,445.5 L513.3,441.2 L512.1,437.4 L508.9,433.7 L506.4,428.7 L504.0,426.2 L499.6,428.0 L497.1,425.5 L498.3,422.4 L502.1,421.2 L506.4,422.4 L508.9,419.3 L513.3,418.1 L517.7,419.3 L522.1,422.4 L525.2,423.7 L522.7,419.9 L518.9,416.2 L517.1,413.1 L520.2,411.2 L525.2,410.6 L530.2,411.2 L535.2,410.6 L540.2,408.4 L537.7,406.2 L535.2,402.4 L533.9,397.5 L533.3,392.5 L534.5,387.5 L535.2,382.5 L534.9,378.1 L537.7,376.2 L542.7,374.7 L547.7,373.7 L552.0,371.9 L555.1,373.1 L560.1,372.5 L566.4,371.2 L572.6,370.0 L577.0,369.4 L573.9,368.1 L571.4,366.2 L572.6,363.1 L575.1,360.6 L575.8,356.9 L577.0,353.7 L577.6,351.2 L571.4,351.0 L563.9,351.2 L556.4,351.9 L551.4,353.7 L546.4,356.2 L541.4,358.1 L536.4,358.7 L532.7,356.2 L528.9,353.7 L525.2,351.2 L523.9,350.0 L520.2,347.4 L517.1,343.6 L516.4,339.9 L515.8,336.2 L512.7,334.3 L507.7,334.9 L502.7,335.5 L496.5,334.3 L491.5,333.0 L488.7,331.2 L490.2,328.9 L495.2,328.0 L498.0,325.9 L499.6,321.8 L502.7,322.7 L505.2,323.4 L508.9,321.4 L513.9,319.9 L518.9,319.3 L525.2,319.9 L530.2,321.4 L532.4,326.2 L533.9,331.2 L532.9,333.9 L536.4,334.3 L541.4,333.0 L543.3,329.7 L541.4,326.2 L539.5,323.0 L537.4,319.3 L536.4,314.9 L538.9,311.8 L542.0,308.1 L543.7,303.1 L545.8,301.2 L542.0,301.8 L539.5,306.2 L535.8,309.9 L532.0,312.7 L528.3,310.6 L525.4,305.9 L526.4,302.7 L530.8,301.4 L533.9,298.7 L531.7,293.9 L529.5,290.0 L527.7,286.5 L528.7,283.7 L530.9,282.0 L533.9,279.8 L537.0,277.6 L540.2,275.7 L539.2,274.2 L535.8,275.5 L532.4,277.3 L529.3,279.5 L526.4,281.7 L524.7,284.3 L523.9,287.5 L522.1,290.6 L518.9,293.7 L517.1,298.1 L518.3,302.4 L517.1,307.4 L512.7,308.7 L508.3,306.8 L506.2,301.2 L507.1,294.9 L509.6,290.0 L511.4,285.0 L512.7,280.0 L508.9,277.5 L507.7,274.3 L511.4,273.1 L513.9,269.3 L517.7,264.4 L521.4,260.0 L524.6,258.5 L527.7,260.6 L528.9,264.0 L532.7,265.0 L536.4,266.8 L540.2,265.6 L543.3,264.4 L546.2,263.5 L552.7,266.8 L555.1,270.0 L550.8,264.7 L545.8,262.2 L543.3,260.0 L542.0,255.6 L545.2,252.5 L552.0,250.6 L557.6,252.5 L562.6,255.6 L572.6,256.2 L583.9,256.9 L588.9,255.6 L595.1,258.1 L602.6,259.4 L606.3,257.5 L610.1,255.0 L616.3,256.9 L621.3,260.0 L622.6,263.7 L626.3,266.8 L628.2,271.2 L627.0,275.0 L630.1,277.5 L632.6,281.8 L634.8,286.5 L635.3,293.7 L635.8,286.5 L637.6,280.0 L641.3,276.2 L643.2,271.2 L643.8,266.2 L646.3,263.1 L651.3,261.9 L656.3,263.1 L661.3,262.5 L666.3,264.4 L672.5,266.2 L678.8,266.8 L683.8,265.0 L688.8,266.2 L694.0,265.0 L696.5,266.4 L699.6,267.4 L700.8,271.1 L702.1,275.5 L706.5,279.9 L711.5,281.1 L707.7,276.1 L704.0,271.1 L702.1,267.4 L704.0,264.3 L708.3,263.0 L714.0,262.4 L719.6,265.2 L711.5,261.2 L707.7,259.3 L706.5,256.2 L704.0,254.9 L699.0,254.7 L695.2,253.7 L694.0,250.5 L694.6,246.8 L697.7,244.3 L701.5,242.4 L706.5,239.3 L712.7,234.9 L719.0,231.2 L720.8,226.2 L720.5,221.8 L722.7,220.6 L725.2,224.9 L730.2,222.4 L736.4,220.6 L742.7,219.3 L747.7,217.5 L753.9,216.2 L747.7,215.6 L745.8,211.8 L747.7,208.7 L750.8,206.2 L752.0,201.2 L755.2,198.1 L757.7,193.7 L760.8,190.6 L763.3,188.7 L765.8,183.7 L761.4,188.7 L757.7,190.6 L753.9,192.5 L750.2,194.4 L746.4,193.7 L743.9,190.6 L742.7,187.5 L740.2,190.0 L736.4,194.4 L731.4,198.7 L727.7,202.5 L722.7,204.3 L720.5,202.5 L722.1,198.7 L725.2,195.0 L727.7,191.9 L726.4,188.7 L724.0,190.6 L721.5,193.7 L719.0,191.9 L716.5,190.6 L712.7,191.9 L709.0,193.1 L705.2,192.5 L699.0,191.9 L694.0,191.2 L691.5,188.1 L686.5,185.0 L681.5,182.5 L678.4,180.0 L677.7,176.2 L677.1,172.5 L679.0,170.0 L681.5,168.1 L684.0,166.2 L685.2,163.1 L687.7,159.9 L692.1,157.4 L696.4,155.6 L701.4,154.9 L706.4,154.9 L710.2,153.7 L712.1,151.2 L710.2,148.1 L708.3,145.6 L709.6,143.1 L713.9,141.8 L716.4,138.1 L718.9,136.8 L722.0,138.1 L725.2,139.3 L730.2,138.7 L731.4,135.6 L728.3,131.8 L724.0,128.0 L721.2,123.0 L721.0,119.9 L723.3,117.4 L728.3,116.2 L730.2,114.3 L725.8,111.8 L722.7,107.4 L722.1,103.7 L724.0,101.2 L727.7,99.9 L730.8,97.4 L733.9,94.3 L736.4,89.9 L738.3,84.9 L738.9,79.9 L740.8,76.2 L742.4,71.8 L744.6,68.7 L748.3,68.1 L752.0,69.3 L755.2,70.6 L758.9,69.3 L762.0,68.1 L765.8,68.7 L768.9,67.5 L772.7,65.0 L775.8,62.5 L778.3,58.7 L780.1,55.6 L783.3,54.0 L786.4,55.2 L788.3,58.1 L789.5,60.6 L792.6,61.8 L795.8,63.7 L797.0,66.8 L799.5,68.1 L798.9,63.7 L797.6,60.0 L797.0,56.2 L798.9,53.7 L802.6,52.2 L805.1,49.3 L806.4,46.8 L808.9,46.5 L810.4,49.0 L812.6,48.1 L815.1,46.5 L818.9,45.6 L822.0,43.1 L824.5,41.9 L825.2,41.6 L829.6,44.1 L832.7,49.7 L834.0,57.2 L835.9,62.2 L840.8,68.4 L844.6,74.7 L845.8,80.9 L845.2,85.9 L840.2,89.7 L835.9,92.2 L829.0,94.7 L834.6,95.7 L840.1,96.3 L846.3,95.0 L849.6,93.4 L850.8,88.4 L849.0,83.4 L850.2,77.2 L847.7,72.2 L844.0,66.6 L839.0,60.9 L837.7,55.9 L839.6,49.7 L841.5,44.7 L840.8,39.7 L843.3,38.5 L846.5,39.1 L848.3,36.0 L851.5,37.2 L855.2,39.1 L859.0,36.0 L863.3,32.8 L862.1,27.8 L859.6,24.1 L857.1,21.0 L857.1,18.5 L860.8,17.2 L866.4,19.1 L872.7,21.6 L878.9,24.1 L883.9,27.2 L887.7,31.6 L890.8,36.0 L893.9,39.7 L900.2,42.8 L906.4,44.7 L912.7,47.2 L916.4,47.2 L918.9,49.7 L919.5,53.4 L918.3,57.2 L916.4,59.7 L915.8,59.1 L908.9,61.6 L901.4,65.3 L895.2,69.1 L888.9,73.4 L885.8,78.4 L883.3,83.4 L880.8,88.4 L879.2,92.2 L878.9,91.9 L873.9,93.7 L868.9,95.6 L863.9,96.9 L860.1,100.0 L858.3,103.7 L857.0,107.5 L857.6,112.5 L857.0,116.2 L853.9,118.7 L852.6,122.5 L853.3,127.5 L852.6,132.4 L850.8,137.4 L847.6,142.4 L843.9,147.4 L840.1,151.8 L838.9,156.2 L839.5,161.2 L838.9,164.3 L833.9,163.0 L830.2,163.7 L826.4,163.0 L821.4,166.2 L816.4,169.3 L811.4,171.2 L807.7,169.3 L802.7,166.2 L797.7,169.3 L792.7,173.0 L792.0,173.7 L792.6,178.1 L795.8,181.2 L798.9,184.4 L803.9,186.9 L808.9,188.7 L813.9,191.9 L818.9,190.6 L819.5,193.7 L813.9,196.8 L808.9,200.6 L803.9,205.0 L798.9,208.1 L793.9,209.3 L786.4,208.1 L781.4,207.2 L778.3,210.6 L775.1,215.6 L771.4,219.3 L766.4,221.8 L761.4,223.7 L759.5,226.2 L761.4,229.9 L765.2,234.9 L768.9,239.9 L772.7,244.3 L777.0,247.4 L781.4,248.7 L783.9,253.7 L787.6,259.3 L792.6,261.8 L797.0,263.7 L798.9,268.7 L798.9,273.6 L800.1,278.6 L803.9,281.8 L811.4,283.0 L817.6,284.3 L822.6,286.0 L825.2,287.4 L829.0,291.2 L830.8,294.9 L836.5,296.8 L842.7,298.4 L847.7,298.7 L851.4,296.2 L855.2,294.9 L857.7,298.1 L860.2,299.9 L865.2,301.2 L869.5,302.2 L873.9,299.9 L875.2,295.6 L875.8,291.2 L877.0,287.4 L880.2,283.7 L883.9,280.6 L888.9,278.1 L890.8,275.6 L890.8,271.8 L888.9,268.7 L886.4,266.2 L885.8,263.7 L883.3,260.6 L885.2,256.8 L885.2,253.7 L889.5,252.5 L893.9,249.4 L897.6,245.0 L901.4,240.0 L904.5,236.9 L907.6,236.5 L911.4,238.7 L916.4,242.5 L920.1,245.6 L922.6,249.4 L925.1,253.1 L927.0,257.5 L928.2,261.8 L927.0,265.0 L925.1,266.5 L929.5,268.7 L931.4,272.5 L933.2,276.8 L936.4,280.6 L940.1,283.7 L943.9,286.2 L948.2,283.1 L952.0,285.6 L955.1,288.7 L957.0,292.4 L956.3,297.4 L953.8,301.8 L952.6,304.9 L953.2,309.9 L955.7,314.3 L958.8,318.0 L962.6,315.5 L968.8,313.7 L975.1,311.8 L981.3,311.2 L983.8,313.7 L988.8,311.8 L991.9,309.9 L992.6,303.7 L995.0,303.1 L998.8,304.9 L1003.8,303.7 L1006.9,305.5Z" clip-rule="evenodd"/></clipPath>
<path d="M1006.9,305.9 L1011.9,311.2 L1017.5,315.5 L1022.5,318.0 L1026.3,319.7 L1026.8,324.4 L1022.6,330.6 L1017.6,333.6 L1008.8,328.6 L1000.1,324.4 L993.9,324.4 L991.4,331.9 L990.9,341.9 L992.6,349.4 L998.9,353.1 L1006.3,354.4 L1008.8,361.9 L1007.6,368.1 L1010.8,371.9 L1008.8,381.8 L1010.1,394.3 L1012.6,404.3 L1018.8,413.1 L1026.3,418.1 L1030.1,424.3 L1028.8,434.3 L1026.3,441.8 L1023.8,448.0 L1026.3,454.0 L1032.6,457.7 L1031.3,462.7 L1026.3,465.2 L1020.1,461.5 L1013.8,466.5 L1016.3,472.7 L1021.3,477.7 L1026.3,481.5 L1026.8,489.0 L1028.8,495.2 L1032.6,504.0 L1036.3,513.9 L1035.8,523.9 L1033.3,531.4 L1032.6,538.9 L1036.3,543.9 L1040.1,550.2 L1036.3,556.4 L1032.6,563.9 L1030.1,571.4 L1026.3,577.6 L1022.6,586.4 L1018.8,596.4 L1015.1,606.3 L1011.8,616.3 L1011.8,626.3 L1013.3,636.3 L1011.3,643.8 L1006.3,651.3 L1000.1,658.8 L995.1,666.3 L992.6,673.8 L990.9,680.0 L992.6,679.4 L988.9,683.2 L990.9,689.4 L993.9,695.7 L997.6,701.9 L998.4,709.4 L995.9,714.9 L990.1,717.4 L983.9,713.2 L977.6,710.7 L971.4,713.9 L963.9,716.4 L956.4,713.2 L950.2,711.4 L942.7,711.9 L936.4,714.4 L931.4,717.4 L926.4,723.2 L921.4,726.9 L916.4,726.4 L913.9,721.9 L907.7,723.9 L901.5,725.7 L895.2,726.9 L892.7,723.2 L889.0,724.4 L884.0,726.9 L876.5,726.9 L866.5,726.2 L859.0,727.4 L853.6,729.4 L846.1,731.9 L839.9,734.9 L832.4,736.4 L836.1,739.9 L841.6,741.4 L840.7,741.2 L838.9,745.6 L836.4,748.7 L835.7,755.0 L832.0,757.5 L828.2,759.4 L824.5,758.7 L820.7,760.0 L819.5,763.1 L817.6,766.2 L812.6,765.6 L807.6,765.0 L803.3,764.3 L801.6,761.8 L800.9,758.5 L800.1,761.8 L800.5,765.6 L798.3,769.3 L795.8,772.5 L797.6,775.0 L796.4,777.5 L792.7,778.7 L788.9,780.6 L785.2,782.5 L781.4,784.3 L781.4,787.4 L782.7,789.9 L780.2,791.8 L775.2,792.7 L770.2,793.7 L765.2,795.2 L760.2,796.2 L755.2,796.4 L750.2,796.2 L747.7,795.8 L748.6,791.2 L750.4,787.4 L752.9,785.0 L755.2,783.1 L754.6,779.3 L750.8,778.1 L746.4,776.8 L742.7,776.0 L737.7,777.1 L731.5,777.5 L737.1,778.7 L739.0,782.5 L741.2,786.4 L744.6,789.9 L746.4,793.1 L747.1,796.2 L745.8,799.9 L744.6,804.3 L742.1,807.4 L739.0,809.9 L735.2,812.4 L731.5,814.3 L727.7,816.2 L724.6,818.4 L720.8,820.5 L717.7,821.2 L714.6,823.7 L714.0,827.4 L714.6,831.2 L715.5,834.3 L713.0,835.9 L710.2,833.9 L708.7,830.5 L705.2,829.7 L701.5,830.5 L696.5,831.2 L694.0,831.8 L691.9,840.5 L686.3,841.1 L681.3,839.9 L676.3,838.6 L671.9,839.9 L670.7,843.6 L666.3,845.5 L660.0,846.1 L655.0,845.5 L651.3,846.1 L647.6,848.6 L647.6,854.9 L541.4,854.9 L541.4,848.0 L542.0,846.5 L546.4,843.6 L552.7,839.9 L560.1,834.9 L566.4,830.5 L572.6,826.2 L578.9,822.4 L585.1,819.9 L591.4,818.0 L594.5,816.2 L595.7,812.4 L593.9,810.5 L590.1,813.0 L586.6,812.4 L584.5,808.7 L583.2,804.9 L582.0,808.7 L581.4,813.0 L578.9,816.2 L575.1,818.7 L570.1,820.9 L565.1,822.4 L558.9,823.9 L553.9,824.9 L548.9,825.8 L541.4,827.0 L535.2,828.0 L531.4,831.2 L526.4,833.7 L521.4,836.8 L516.4,836.1 L511.4,834.9 L506.4,836.8 L504.0,840.5 L502.1,838.6 L502.7,834.9 L504.0,832.4 L508.9,831.2 L513.9,829.9 L515.2,826.8 L511.4,824.9 L509.6,822.4 L512.7,819.9 L518.9,819.3 L523.9,816.2 L525.2,812.4 L523.9,809.3 L527.7,806.2 L532.7,803.1 L537.7,801.2 L541.4,799.9 L545.2,797.4 L550.2,793.1 L556.4,788.7 L562.6,785.6 L568.9,783.1 L577.0,779.0 L566.4,782.2 L556.4,786.4 L548.9,789.7 L541.4,792.7 L536.4,794.3 L531.4,796.8 L526.4,798.7 L521.4,801.2 L517.7,803.1 L512.7,806.2 L507.7,808.9 L505.2,806.2 L501.5,803.1 L496.5,799.9 L494.0,797.4 L496.5,794.9 L499.6,792.4 L500.2,788.7 L497.7,785.6 L494.0,784.3 L490.2,787.4 L487.1,791.2 L484.0,794.9 L480.8,798.4 L478.4,796.2 L478.4,791.2 L480.2,787.4 L477.1,785.0 L472.7,783.1 L470.9,780.0 L467.7,776.8 L469.6,772.5 L474.0,768.7 L479.0,766.2 L484.0,766.8 L487.1,769.3 L490.2,770.6 L489.0,767.5 L485.2,764.3 L484.0,761.2 L487.7,759.4 L489.0,755.6 L492.7,752.5 L499.0,749.4 L506.4,745.6 L513.9,743.1 L520.2,741.2 L525.2,738.7 L527.1,735.6 L527.1,736.9 L528.9,733.1 L529.5,729.4 L532.0,726.9 L536.4,726.3 L541.4,725.7 L546.4,725.0 L550.8,724.4 L546.4,723.8 L541.4,723.8 L536.4,724.2 L532.7,725.0 L527.7,725.7 L522.7,726.3 L517.7,726.9 L512.7,728.1 L507.7,730.0 L504.0,731.9 L500.2,731.3 L497.1,728.1 L494.0,726.9 L491.5,728.8 L487.7,729.4 L484.0,726.9 L479.0,728.1 L476.5,730.6 L472.7,733.1 L469.0,734.4 L465.2,733.1 L463.4,729.4 L462.7,725.7 L461.5,721.9 L462.7,718.8 L465.9,716.9 L465.2,713.8 L467.7,710.7 L472.7,709.4 L475.2,711.9 L475.9,708.2 L479.0,704.4 L482.7,701.9 L485.2,698.2 L490.2,695.1 L496.5,693.2 L501.5,691.3 L505.2,692.6 L506.2,696.9 L507.1,701.6 L511.4,700.9 L516.4,698.4 L518.9,694.4 L518.3,688.8 L521.4,686.7 L524.6,688.2 L525.8,693.2 L527.1,698.8 L530.2,701.7 L535.2,703.4 L540.2,701.9 L543.9,700.7 L548.9,700.1 L543.9,698.8 L541.4,697.6 L538.9,695.7 L537.9,691.9 L540.2,688.8 L543.9,686.9 L545.4,683.2 L545.8,678.2 L544.5,675.1 L541.4,673.5 L536.4,672.0 L532.7,670.1 L530.8,667.0 L530.8,664.5 L533.9,662.6 L538.9,661.3 L543.9,660.5 L550.2,658.2 L555.1,655.7 L560.1,652.6 L563.9,649.5 L568.3,651.4 L572.0,653.8 L567.0,648.9 L565.1,645.7 L563.9,642.0 L564.5,638.2 L566.4,634.5 L568.9,632.6 L573.9,631.4 L578.9,632.0 L585.1,632.6 L591.4,632.2 L597.6,630.7 L603.9,629.7 L610.1,629.2 L616.3,628.2 L622.6,627.6 L626.4,627.0 L632.6,625.2 L638.9,623.4 L643.9,621.4 L647.6,622.2 L650.7,621.4 L652.6,618.4 L654.5,614.7 L658.9,613.9 L666.3,613.7 L676.3,613.2 L685.3,612.2 L676.3,610.2 L670.1,608.3 L663.9,608.9 L658.2,609.7 L656.4,604.9 L656.7,599.9 L657.9,594.9 L661.1,590.0 L656.4,591.4 L652.6,595.9 L649.1,602.4 L645.1,609.9 L641.4,616.2 L638.3,620.5 L632.6,623.4 L626.4,625.2 L620.1,625.5 L616.4,622.4 L612.7,623.4 L608.9,625.2 L606.4,625.2 L600.2,625.3 L593.9,623.7 L588.9,621.2 L584.6,619.9 L582.4,616.4 L581.4,613.7 L583.3,616.4 L582.1,619.9 L578.9,621.8 L573.9,623.7 L567.7,625.5 L564.0,627.4 L562.7,631.2 L559.0,633.0 L551.5,634.5 L542.7,636.4 L532.7,638.3 L530.9,636.2 L531.5,634.3 L539.0,628.9 L546.5,623.7 L555.2,616.8 L564.0,609.9 L568.9,604.9 L572.1,601.2 L573.9,597.4 L578.9,595.6 L585.2,594.3 L588.9,592.4 L589.5,587.5 L588.9,583.7 L591.4,580.0 L593.9,576.2 L595.8,571.2 L596.4,566.8 L598.9,563.7 L601.4,561.2 L604.5,558.7 L605.8,556.9 L601.4,556.2 L595.2,556.0 L591.4,555.0 L592.0,552.5 L595.2,548.7 L598.9,544.4 L602.0,540.0 L604.5,535.1 L607.0,528.9 L609.5,522.7 L612.7,516.4 L615.8,511.4 L618.9,508.9 L622.0,508.3 L625.1,511.4 L628.3,514.5 L632.0,516.4 L635.8,514.2 L637.6,511.4 L635.1,509.2 L637.0,506.4 L642.6,505.2 L648.9,503.9 L655.1,502.7 L659.5,503.9 L658.9,498.9 L662.0,497.7 L657.6,497.7 L651.4,496.4 L646.4,497.1 L645.1,494.6 L648.9,492.7 L653.9,491.4 L657.6,488.9 L660.1,486.4 L655.1,485.8 L648.9,485.4 L643.9,486.4 L636.4,487.7 L626.4,488.7 L616.4,489.6 L608.9,490.2 L602.7,490.8 L598.9,492.7 L595.2,494.6 L590.2,495.4 L585.8,494.6 L582.7,492.1 L581.4,488.9 L581.4,485.2 L580.8,482.1 L578.9,485.2 L578.3,489.6 L575.2,491.4 L572.4,489.9 L571.7,486.4 L572.2,481.4 L572.7,476.4 L570.4,472.1 L572.7,470.2 L576.4,472.1 L580.8,469.0 L578.9,464.0 L582.1,460.2 L570.2,459.6 L566.4,462.7 L564.0,467.7 L561.5,472.7 L557.7,476.4 L551.5,478.9 L547.7,477.7 L544.0,475.2 L539.0,474.6 L535.2,472.7 L536.5,469.0 L538.4,465.2 L541.5,462.7 L545.2,460.8 L549.6,458.3 L546.5,457.7 L541.5,459.0 L537.7,456.5 L537.1,454.0 L534.0,456.5 L532.7,459.6 L529.0,461.5 L524.0,461.5 L520.2,460.2 L517.7,457.1 L514.0,456.5 L511.4,453.6 L506.4,454.3 L502.1,455.5 L500.2,452.4 L501.5,448.7 L505.2,445.5 L510.2,444.9 L515.2,445.5 L513.3,441.2 L512.1,437.4 L508.9,433.7 L506.4,428.7 L504.0,426.2 L499.6,428.0 L497.1,425.5 L498.3,422.4 L502.1,421.2 L506.4,422.4 L508.9,419.3 L513.3,418.1 L517.7,419.3 L522.1,422.4 L525.2,423.7 L522.7,419.9 L518.9,416.2 L517.1,413.1 L520.2,411.2 L525.2,410.6 L530.2,411.2 L535.2,410.6 L540.2,408.4 L537.7,406.2 L535.2,402.4 L533.9,397.5 L533.3,392.5 L534.5,387.5 L535.2,382.5 L534.9,378.1 L537.7,376.2 L542.7,374.7 L547.7,373.7 L552.0,371.9 L555.1,373.1 L560.1,372.5 L566.4,371.2 L572.6,370.0 L577.0,369.4 L573.9,368.1 L571.4,366.2 L572.6,363.1 L575.1,360.6 L575.8,356.9 L577.0,353.7 L577.6,351.2 L571.4,351.0 L563.9,351.2 L556.4,351.9 L551.4,353.7 L546.4,356.2 L541.4,358.1 L536.4,358.7 L532.7,356.2 L528.9,353.7 L525.2,351.2 L523.9,350.0 L520.2,347.4 L517.1,343.6 L516.4,339.9 L515.8,336.2 L512.7,334.3 L507.7,334.9 L502.7,335.5 L496.5,334.3 L491.5,333.0 L488.7,331.2 L490.2,328.9 L495.2,328.0 L498.0,325.9 L499.6,321.8 L502.7,322.7 L505.2,323.4 L508.9,321.4 L513.9,319.9 L518.9,319.3 L525.2,319.9 L530.2,321.4 L532.4,326.2 L533.9,331.2 L532.9,333.9 L536.4,334.3 L541.4,333.0 L543.3,329.7 L541.4,326.2 L539.5,323.0 L537.4,319.3 L536.4,314.9 L538.9,311.8 L542.0,308.1 L543.7,303.1 L545.8,301.2 L542.0,301.8 L539.5,306.2 L535.8,309.9 L532.0,312.7 L528.3,310.6 L525.4,305.9 L526.4,302.7 L530.8,301.4 L533.9,298.7 L531.7,293.9 L529.5,290.0 L527.7,286.5 L528.7,283.7 L530.9,282.0 L533.9,279.8 L537.0,277.6 L540.2,275.7 L539.2,274.2 L535.8,275.5 L532.4,277.3 L529.3,279.5 L526.4,281.7 L524.7,284.3 L523.9,287.5 L522.1,290.6 L518.9,293.7 L517.1,298.1 L518.3,302.4 L517.1,307.4 L512.7,308.7 L508.3,306.8 L506.2,301.2 L507.1,294.9 L509.6,290.0 L511.4,285.0 L512.7,280.0 L508.9,277.5 L507.7,274.3 L511.4,273.1 L513.9,269.3 L517.7,264.4 L521.4,260.0 L524.6,258.5 L527.7,260.6 L528.9,264.0 L532.7,265.0 L536.4,266.8 L540.2,265.6 L543.3,264.4 L546.2,263.5 L552.7,266.8 L555.1,270.0 L550.8,264.7 L545.8,262.2 L543.3,260.0 L542.0,255.6 L545.2,252.5 L552.0,250.6 L557.6,252.5 L562.6,255.6 L572.6,256.2 L583.9,256.9 L588.9,255.6 L595.1,258.1 L602.6,259.4 L606.3,257.5 L610.1,255.0 L616.3,256.9 L621.3,260.0 L622.6,263.7 L626.3,266.8 L628.2,271.2 L627.0,275.0 L630.1,277.5 L632.6,281.8 L634.8,286.5 L635.3,293.7 L635.8,286.5 L637.6,280.0 L641.3,276.2 L643.2,271.2 L643.8,266.2 L646.3,263.1 L651.3,261.9 L656.3,263.1 L661.3,262.5 L666.3,264.4 L672.5,266.2 L678.8,266.8 L683.8,265.0 L688.8,266.2 L694.0,265.0 L696.5,266.4 L699.6,267.4 L700.8,271.1 L702.1,275.5 L706.5,279.9 L711.5,281.1 L707.7,276.1 L704.0,271.1 L702.1,267.4 L704.0,264.3 L708.3,263.0 L714.0,262.4 L719.6,265.2 L711.5,261.2 L707.7,259.3 L706.5,256.2 L704.0,254.9 L699.0,254.7 L695.2,253.7 L694.0,250.5 L694.6,246.8 L697.7,244.3 L701.5,242.4 L706.5,239.3 L712.7,234.9 L719.0,231.2 L720.8,226.2 L720.5,221.8 L722.7,220.6 L725.2,224.9 L730.2,222.4 L736.4,220.6 L742.7,219.3 L747.7,217.5 L753.9,216.2 L747.7,215.6 L745.8,211.8 L747.7,208.7 L750.8,206.2 L752.0,201.2 L755.2,198.1 L757.7,193.7 L760.8,190.6 L763.3,188.7 L765.8,183.7 L761.4,188.7 L757.7,190.6 L753.9,192.5 L750.2,194.4 L746.4,193.7 L743.9,190.6 L742.7,187.5 L740.2,190.0 L736.4,194.4 L731.4,198.7 L727.7,202.5 L722.7,204.3 L720.5,202.5 L722.1,198.7 L725.2,195.0 L727.7,191.9 L726.4,188.7 L724.0,190.6 L721.5,193.7 L719.0,191.9 L716.5,190.6 L712.7,191.9 L709.0,193.1 L705.2,192.5 L699.0,191.9 L694.0,191.2 L691.5,188.1 L686.5,185.0 L681.5,182.5 L678.4,180.0 L677.7,176.2 L677.1,172.5 L679.0,170.0 L681.5,168.1 L684.0,166.2 L685.2,163.1 L687.7,159.9 L692.1,157.4 L696.4,155.6 L701.4,154.9 L706.4,154.9 L710.2,153.7 L712.1,151.2 L710.2,148.1 L708.3,145.6 L709.6,143.1 L713.9,141.8 L716.4,138.1 L718.9,136.8 L722.0,138.1 L725.2,139.3 L730.2,138.7 L731.4,135.6 L728.3,131.8 L724.0,128.0 L721.2,123.0 L721.0,119.9 L723.3,117.4 L728.3,116.2 L730.2,114.3 L725.8,111.8 L722.7,107.4 L722.1,103.7 L724.0,101.2 L727.7,99.9 L730.8,97.4 L733.9,94.3 L736.4,89.9 L738.3,84.9 L738.9,79.9 L740.8,76.2 L742.4,71.8 L744.6,68.7 L748.3,68.1 L752.0,69.3 L755.2,70.6 L758.9,69.3 L762.0,68.1 L765.8,68.7 L768.9,67.5 L772.7,65.0 L775.8,62.5 L778.3,58.7 L780.1,55.6 L783.3,54.0 L786.4,55.2 L788.3,58.1 L789.5,60.6 L792.6,61.8 L795.8,63.7 L797.0,66.8 L799.5,68.1 L798.9,63.7 L797.6,60.0 L797.0,56.2 L798.9,53.7 L802.6,52.2 L805.1,49.3 L806.4,46.8 L808.9,46.5 L810.4,49.0 L812.6,48.1 L815.1,46.5 L818.9,45.6 L822.0,43.1 L824.5,41.9 L825.2,41.6 L829.6,44.1 L832.7,49.7 L834.0,57.2 L835.9,62.2 L840.8,68.4 L844.6,74.7 L845.8,80.9 L845.2,85.9 L840.2,89.7 L835.9,92.2 L829.0,94.7 L834.6,95.7 L840.1,96.3 L846.3,95.0 L849.6,93.4 L850.8,88.4 L849.0,83.4 L850.2,77.2 L847.7,72.2 L844.0,66.6 L839.0,60.9 L837.7,55.9 L839.6,49.7 L841.5,44.7 L840.8,39.7 L843.3,38.5 L846.5,39.1 L848.3,36.0 L851.5,37.2 L855.2,39.1 L859.0,36.0 L863.3,32.8 L862.1,27.8 L859.6,24.1 L857.1,21.0 L857.1,18.5 L860.8,17.2 L866.4,19.1 L872.7,21.6 L878.9,24.1 L883.9,27.2 L887.7,31.6 L890.8,36.0 L893.9,39.7 L900.2,42.8 L906.4,44.7 L912.7,47.2 L916.4,47.2 L918.9,49.7 L919.5,53.4 L918.3,57.2 L916.4,59.7 L915.8,59.1 L908.9,61.6 L901.4,65.3 L895.2,69.1 L888.9,73.4 L885.8,78.4 L883.3,83.4 L880.8,88.4 L879.2,92.2 L878.9,91.9 L873.9,93.7 L868.9,95.6 L863.9,96.9 L860.1,100.0 L858.3,103.7 L857.0,107.5 L857.6,112.5 L857.0,116.2 L853.9,118.7 L852.6,122.5 L853.3,127.5 L852.6,132.4 L850.8,137.4 L847.6,142.4 L843.9,147.4 L840.1,151.8 L838.9,156.2 L839.5,161.2 L838.9,164.3 L833.9,163.0 L830.2,163.7 L826.4,163.0 L821.4,166.2 L816.4,169.3 L811.4,171.2 L807.7,169.3 L802.7,166.2 L797.7,169.3 L792.7,173.0 L792.0,173.7 L792.6,178.1 L795.8,181.2 L798.9,184.4 L803.9,186.9 L808.9,188.7 L813.9,191.9 L818.9,190.6 L819.5,193.7 L813.9,196.8 L808.9,200.6 L803.9,205.0 L798.9,208.1 L793.9,209.3 L786.4,208.1 L781.4,207.2 L778.3,210.6 L775.1,215.6 L771.4,219.3 L766.4,221.8 L761.4,223.7 L759.5,226.2 L761.4,229.9 L765.2,234.9 L768.9,239.9 L772.7,244.3 L777.0,247.4 L781.4,248.7 L783.9,253.7 L787.6,259.3 L792.6,261.8 L797.0,263.7 L798.9,268.7 L798.9,273.6 L800.1,278.6 L803.9,281.8 L811.4,283.0 L817.6,284.3 L822.6,286.0 L825.2,287.4 L829.0,291.2 L830.8,294.9 L836.5,296.8 L842.7,298.4 L847.7,298.7 L851.4,296.2 L855.2,294.9 L857.7,298.1 L860.2,299.9 L865.2,301.2 L869.5,302.2 L873.9,299.9 L875.2,295.6 L875.8,291.2 L877.0,287.4 L880.2,283.7 L883.9,280.6 L888.9,278.1 L890.8,275.6 L890.8,271.8 L888.9,268.7 L886.4,266.2 L885.8,263.7 L883.3,260.6 L885.2,256.8 L885.2,253.7 L889.5,252.5 L893.9,249.4 L897.6,245.0 L901.4,240.0 L904.5,236.9 L907.6,236.5 L911.4,238.7 L916.4,242.5 L920.1,245.6 L922.6,249.4 L925.1,253.1 L927.0,257.5 L928.2,261.8 L927.0,265.0 L925.1,266.5 L929.5,268.7 L931.4,272.5 L933.2,276.8 L936.4,280.6 L940.1,283.7 L943.9,286.2 L948.2,283.1 L952.0,285.6 L955.1,288.7 L957.0,292.4 L956.3,297.4 L953.8,301.8 L952.6,304.9 L953.2,309.9 L955.7,314.3 L958.8,318.0 L962.6,315.5 L968.8,313.7 L975.1,311.8 L981.3,311.2 L983.8,313.7 L988.8,311.8 L991.9,309.9 L992.6,303.7 L995.0,303.1 L998.8,304.9 L1003.8,303.7 L1006.9,305.5Z" fill="#E7E58F" fill-rule="evenodd"/>
<path d="M1006.9,305.9 L1011.9,311.2 L1017.5,315.5 L1022.5,318.0 L1026.3,319.7 L1026.8,324.4 L1022.6,330.6 L1017.6,333.6 L1008.8,328.6 L1000.1,324.4 L993.9,324.4 L991.4,331.9 L990.9,341.9 L992.6,349.4 L998.9,353.1 L1006.3,354.4 L1008.8,361.9 L1007.6,368.1 L1010.8,371.9 L1008.8,381.8 L1010.1,394.3 L1012.6,404.3 L1018.8,413.1 L1026.3,418.1 L1030.1,424.3 L1028.8,434.3 L1026.3,441.8 L1023.8,448.0 L1026.3,454.0 L1032.6,457.7 L1031.3,462.7 L1026.3,465.2 L1020.1,461.5 L1013.8,466.5 L1016.3,472.7 L1021.3,477.7 L1026.3,481.5 L1026.8,489.0 L1028.8,495.2 L1032.6,504.0 L1036.3,513.9 L1035.8,523.9 L1033.3,531.4 L1032.6,538.9 L1036.3,543.9 L1040.1,550.2 L1036.3,556.4 L1032.6,563.9 L1030.1,571.4 L1026.3,577.6 L1022.6,586.4 L1018.8,596.4 L1015.1,606.3 L1011.8,616.3 L1011.8,626.3 L1013.3,636.3 L1011.3,643.8 L1006.3,651.3 L1000.1,658.8 L995.1,666.3 L992.6,673.8 L990.9,680.0 L992.6,679.4 L988.9,683.2 L990.9,689.4 L993.9,695.7 L997.6,701.9 L998.4,709.4 L995.9,714.9 L990.1,717.4 L983.9,713.2 L977.6,710.7 L971.4,713.9 L963.9,716.4 L956.4,713.2 L950.2,711.4 L942.7,711.9 L936.4,714.4 L931.4,717.4 L926.4,723.2 L921.4,726.9 L916.4,726.4 L913.9,721.9 L907.7,723.9 L901.5,725.7 L895.2,726.9 L892.7,723.2 L889.0,724.4 L884.0,726.9 L876.5,726.9 L866.5,726.2 L859.0,727.4 L853.6,729.4 L846.1,731.9 L839.9,734.9 L832.4,736.4 L836.1,739.9 L841.6,741.4 L840.7,741.2 L838.9,745.6 L836.4,748.7 L835.7,755.0 L832.0,757.5 L828.2,759.4 L824.5,758.7 L820.7,760.0 L819.5,763.1 L817.6,766.2 L812.6,765.6 L807.6,765.0 L803.3,764.3 L801.6,761.8 L800.9,758.5 L800.1,761.8 L800.5,765.6 L798.3,769.3 L795.8,772.5 L797.6,775.0 L796.4,777.5 L792.7,778.7 L788.9,780.6 L785.2,782.5 L781.4,784.3 L781.4,787.4 L782.7,789.9 L780.2,791.8 L775.2,792.7 L770.2,793.7 L765.2,795.2 L760.2,796.2 L755.2,796.4 L750.2,796.2 L747.7,795.8 L748.6,791.2 L750.4,787.4 L752.9,785.0 L755.2,783.1 L754.6,779.3 L750.8,778.1 L746.4,776.8 L742.7,776.0 L737.7,777.1 L731.5,777.5 L737.1,778.7 L739.0,782.5 L741.2,786.4 L744.6,789.9 L746.4,793.1 L747.1,796.2 L745.8,799.9 L744.6,804.3 L742.1,807.4 L739.0,809.9 L735.2,812.4 L731.5,814.3 L727.7,816.2 L724.6,818.4 L720.8,820.5 L717.7,821.2 L714.6,823.7 L714.0,827.4 L714.6,831.2 L715.5,834.3 L713.0,835.9 L710.2,833.9 L708.7,830.5 L705.2,829.7 L701.5,830.5 L696.5,831.2 L694.0,831.8 L691.9,840.5 L686.3,841.1 L681.3,839.9 L676.3,838.6 L671.9,839.9 L670.7,843.6 L666.3,845.5 L660.0,846.1 L655.0,845.5 L651.3,846.1 L647.6,848.6 L647.6,854.9 L541.4,854.9 L541.4,848.0 L542.0,846.5 L546.4,843.6 L552.7,839.9 L560.1,834.9 L566.4,830.5 L572.6,826.2 L578.9,822.4 L585.1,819.9 L591.4,818.0 L594.5,816.2 L595.7,812.4 L593.9,810.5 L590.1,813.0 L586.6,812.4 L584.5,808.7 L583.2,804.9 L582.0,808.7 L581.4,813.0 L578.9,816.2 L575.1,818.7 L570.1,820.9 L565.1,822.4 L558.9,823.9 L553.9,824.9 L548.9,825.8 L541.4,827.0 L535.2,828.0 L531.4,831.2 L526.4,833.7 L521.4,836.8 L516.4,836.1 L511.4,834.9 L506.4,836.8 L504.0,840.5 L502.1,838.6 L502.7,834.9 L504.0,832.4 L508.9,831.2 L513.9,829.9 L515.2,826.8 L511.4,824.9 L509.6,822.4 L512.7,819.9 L518.9,819.3 L523.9,816.2 L525.2,812.4 L523.9,809.3 L527.7,806.2 L532.7,803.1 L537.7,801.2 L541.4,799.9 L545.2,797.4 L550.2,793.1 L556.4,788.7 L562.6,785.6 L568.9,783.1 L577.0,779.0 L566.4,782.2 L556.4,786.4 L548.9,789.7 L541.4,792.7 L536.4,794.3 L531.4,796.8 L526.4,798.7 L521.4,801.2 L517.7,803.1 L512.7,806.2 L507.7,808.9 L505.2,806.2 L501.5,803.1 L496.5,799.9 L494.0,797.4 L496.5,794.9 L499.6,792.4 L500.2,788.7 L497.7,785.6 L494.0,784.3 L490.2,787.4 L487.1,791.2 L484.0,794.9 L480.8,798.4 L478.4,796.2 L478.4,791.2 L480.2,787.4 L477.1,785.0 L472.7,783.1 L470.9,780.0 L467.7,776.8 L469.6,772.5 L474.0,768.7 L479.0,766.2 L484.0,766.8 L487.1,769.3 L490.2,770.6 L489.0,767.5 L485.2,764.3 L484.0,761.2 L487.7,759.4 L489.0,755.6 L492.7,752.5 L499.0,749.4 L506.4,745.6 L513.9,743.1 L520.2,741.2 L525.2,738.7 L527.1,735.6 L527.1,736.9 L528.9,733.1 L529.5,729.4 L532.0,726.9 L536.4,726.3 L541.4,725.7 L546.4,725.0 L550.8,724.4 L546.4,723.8 L541.4,723.8 L536.4,724.2 L532.7,725.0 L527.7,725.7 L522.7,726.3 L517.7,726.9 L512.7,728.1 L507.7,730.0 L504.0,731.9 L500.2,731.3 L497.1,728.1 L494.0,726.9 L491.5,728.8 L487.7,729.4 L484.0,726.9 L479.0,728.1 L476.5,730.6 L472.7,733.1 L469.0,734.4 L465.2,733.1 L463.4,729.4 L462.7,725.7 L461.5,721.9 L462.7,718.8 L465.9,716.9 L465.2,713.8 L467.7,710.7 L472.7,709.4 L475.2,711.9 L475.9,708.2 L479.0,704.4 L482.7,701.9 L485.2,698.2 L490.2,695.1 L496.5,693.2 L501.5,691.3 L505.2,692.6 L506.2,696.9 L507.1,701.6 L511.4,700.9 L516.4,698.4 L518.9,694.4 L518.3,688.8 L521.4,686.7 L524.6,688.2 L525.8,693.2 L527.1,698.8 L530.2,701.7 L535.2,703.4 L540.2,701.9 L543.9,700.7 L548.9,700.1 L543.9,698.8 L541.4,697.6 L538.9,695.7 L537.9,691.9 L540.2,688.8 L543.9,686.9 L545.4,683.2 L545.8,678.2 L544.5,675.1 L541.4,673.5 L536.4,672.0 L532.7,670.1 L530.8,667.0 L530.8,664.5 L533.9,662.6 L538.9,661.3 L543.9,660.5 L550.2,658.2 L555.1,655.7 L560.1,652.6 L563.9,649.5 L568.3,651.4 L572.0,653.8 L567.0,648.9 L565.1,645.7 L563.9,642.0 L564.5,638.2 L566.4,634.5 L568.9,632.6 L573.9,631.4 L578.9,632.0 L585.1,632.6 L591.4,632.2 L597.6,630.7 L603.9,629.7 L610.1,629.2 L616.3,628.2 L622.6,627.6 L626.4,627.0 L632.6,625.2 L638.9,623.4 L643.9,621.4 L647.6,622.2 L650.7,621.4 L652.6,618.4 L654.5,614.7 L658.9,613.9 L666.3,613.7 L676.3,613.2 L685.3,612.2 L676.3,610.2 L670.1,608.3 L663.9,608.9 L658.2,609.7 L656.4,604.9 L656.7,599.9 L657.9,594.9 L661.1,590.0 L656.4,591.4 L652.6,595.9 L649.1,602.4 L645.1,609.9 L641.4,616.2 L638.3,620.5 L632.6,623.4 L626.4,625.2 L620.1,625.5 L616.4,622.4 L612.7,623.4 L608.9,625.2 L606.4,625.2 L600.2,625.3 L593.9,623.7 L588.9,621.2 L584.6,619.9 L582.4,616.4 L581.4,613.7 L583.3,616.4 L582.1,619.9 L578.9,621.8 L573.9,623.7 L567.7,625.5 L564.0,627.4 L562.7,631.2 L559.0,633.0 L551.5,634.5 L542.7,636.4 L532.7,638.3 L530.9,636.2 L531.5,634.3 L539.0,628.9 L546.5,623.7 L555.2,616.8 L564.0,609.9 L568.9,604.9 L572.1,601.2 L573.9,597.4 L578.9,595.6 L585.2,594.3 L588.9,592.4 L589.5,587.5 L588.9,583.7 L591.4,580.0 L593.9,576.2 L595.8,571.2 L596.4,566.8 L598.9,563.7 L601.4,561.2 L604.5,558.7 L605.8,556.9 L601.4,556.2 L595.2,556.0 L591.4,555.0 L592.0,552.5 L595.2,548.7 L598.9,544.4 L602.0,540.0 L604.5,535.1 L607.0,528.9 L609.5,522.7 L612.7,516.4 L615.8,511.4 L618.9,508.9 L622.0,508.3 L625.1,511.4 L628.3,514.5 L632.0,516.4 L635.8,514.2 L637.6,511.4 L635.1,509.2 L637.0,506.4 L642.6,505.2 L648.9,503.9 L655.1,502.7 L659.5,503.9 L658.9,498.9 L662.0,497.7 L657.6,497.7 L651.4,496.4 L646.4,497.1 L645.1,494.6 L648.9,492.7 L653.9,491.4 L657.6,488.9 L660.1,486.4 L655.1,485.8 L648.9,485.4 L643.9,486.4 L636.4,487.7 L626.4,488.7 L616.4,489.6 L608.9,490.2 L602.7,490.8 L598.9,492.7 L595.2,494.6 L590.2,495.4 L585.8,494.6 L582.7,492.1 L581.4,488.9 L581.4,485.2 L580.8,482.1 L578.9,485.2 L578.3,489.6 L575.2,491.4 L572.4,489.9 L571.7,486.4 L572.2,481.4 L572.7,476.4 L570.4,472.1 L572.7,470.2 L576.4,472.1 L580.8,469.0 L578.9,464.0 L582.1,460.2 L570.2,459.6 L566.4,462.7 L564.0,467.7 L561.5,472.7 L557.7,476.4 L551.5,478.9 L547.7,477.7 L544.0,475.2 L539.0,474.6 L535.2,472.7 L536.5,469.0 L538.4,465.2 L541.5,462.7 L545.2,460.8 L549.6,458.3 L546.5,457.7 L541.5,459.0 L537.7,456.5 L537.1,454.0 L534.0,456.5 L532.7,459.6 L529.0,461.5 L524.0,461.5 L520.2,460.2 L517.7,457.1 L514.0,456.5 L511.4,453.6 L506.4,454.3 L502.1,455.5 L500.2,452.4 L501.5,448.7 L505.2,445.5 L510.2,444.9 L515.2,445.5 L513.3,441.2 L512.1,437.4 L508.9,433.7 L506.4,428.7 L504.0,426.2 L499.6,428.0 L497.1,425.5 L498.3,422.4 L502.1,421.2 L506.4,422.4 L508.9,419.3 L513.3,418.1 L517.7,419.3 L522.1,422.4 L525.2,423.7 L522.7,419.9 L518.9,416.2 L517.1,413.1 L520.2,411.2 L525.2,410.6 L530.2,411.2 L535.2,410.6 L540.2,408.4 L537.7,406.2 L535.2,402.4 L533.9,397.5 L533.3,392.5 L534.5,387.5 L535.2,382.5 L534.9,378.1 L537.7,376.2 L542.7,374.7 L547.7,373.7 L552.0,371.9 L555.1,373.1 L560.1,372.5 L566.4,371.2 L572.6,370.0 L577.0,369.4 L573.9,368.1 L571.4,366.2 L572.6,363.1 L575.1,360.6 L575.8,356.9 L577.0,353.7 L577.6,351.2 L571.4,351.0 L563.9,351.2 L556.4,351.9 L551.4,353.7 L546.4,356.2 L541.4,358.1 L536.4,358.7 L532.7,356.2 L528.9,353.7 L525.2,351.2 L523.9,350.0 L520.2,347.4 L517.1,343.6 L516.4,339.9 L515.8,336.2 L512.7,334.3 L507.7,334.9 L502.7,335.5 L496.5,334.3 L491.5,333.0 L488.7,331.2 L490.2,328.9 L495.2,328.0 L498.0,325.9 L499.6,321.8 L502.7,322.7 L505.2,323.4 L508.9,321.4 L513.9,319.9 L518.9,319.3 L525.2,319.9 L530.2,321.4 L532.4,326.2 L533.9,331.2 L532.9,333.9 L536.4,334.3 L541.4,333.0 L543.3,329.7 L541.4,326.2 L539.5,323.0 L537.4,319.3 L536.4,314.9 L538.9,311.8 L542.0,308.1 L543.7,303.1 L545.8,301.2 L542.0,301.8 L539.5,306.2 L535.8,309.9 L532.0,312.7 L528.3,310.6 L525.4,305.9 L526.4,302.7 L530.8,301.4 L533.9,298.7 L531.7,293.9 L529.5,290.0 L527.7,286.5 L528.7,283.7 L530.9,282.0 L533.9,279.8 L537.0,277.6 L540.2,275.7 L539.2,274.2 L535.8,275.5 L532.4,277.3 L529.3,279.5 L526.4,281.7 L524.7,284.3 L523.9,287.5 L522.1,290.6 L518.9,293.7 L517.1,298.1 L518.3,302.4 L517.1,307.4 L512.7,308.7 L508.3,306.8 L506.2,301.2 L507.1,294.9 L509.6,290.0 L511.4,285.0 L512.7,280.0 L508.9,277.5 L507.7,274.3 L511.4,273.1 L513.9,269.3 L517.7,264.4 L521.4,260.0 L524.6,258.5 L527.7,260.6 L528.9,264.0 L532.7,265.0 L536.4,266.8 L540.2,265.6 L543.3,264.4 L546.2,263.5 L552.7,266.8 L555.1,270.0 L550.8,264.7 L545.8,262.2 L543.3,260.0 L542.0,255.6 L545.2,252.5 L552.0,250.6 L557.6,252.5 L562.6,255.6 L572.6,256.2 L583.9,256.9 L588.9,255.6 L595.1,258.1 L602.6,259.4 L606.3,257.5 L610.1,255.0 L616.3,256.9 L621.3,260.0 L622.6,263.7 L626.3,266.8 L628.2,271.2 L627.0,275.0 L630.1,277.5 L632.6,281.8 L634.8,286.5 L635.3,293.7 L635.8,286.5 L637.6,280.0 L641.3,276.2 L643.2,271.2 L643.8,266.2 L646.3,263.1 L651.3,261.9 L656.3,263.1 L661.3,262.5 L666.3,264.4 L672.5,266.2 L678.8,266.8 L683.8,265.0 L688.8,266.2 L694.0,265.0 L696.5,266.4 L699.6,267.4 L700.8,271.1 L702.1,275.5 L706.5,279.9 L711.5,281.1 L707.7,276.1 L704.0,271.1 L702.1,267.4 L704.0,264.3 L708.3,263.0 L714.0,262.4 L719.6,265.2 L711.5,261.2 L707.7,259.3 L706.5,256.2 L704.0,254.9 L699.0,254.7 L695.2,253.7 L694.0,250.5 L694.6,246.8 L697.7,244.3 L701.5,242.4 L706.5,239.3 L712.7,234.9 L719.0,231.2 L720.8,226.2 L720.5,221.8 L722.7,220.6 L725.2,224.9 L730.2,222.4 L736.4,220.6 L742.7,219.3 L747.7,217.5 L753.9,216.2 L747.7,215.6 L745.8,211.8 L747.7,208.7 L750.8,206.2 L752.0,201.2 L755.2,198.1 L757.7,193.7 L760.8,190.6 L763.3,188.7 L765.8,183.7 L761.4,188.7 L757.7,190.6 L753.9,192.5 L750.2,194.4 L746.4,193.7 L743.9,190.6 L742.7,187.5 L740.2,190.0 L736.4,194.4 L731.4,198.7 L727.7,202.5 L722.7,204.3 L720.5,202.5 L722.1,198.7 L725.2,195.0 L727.7,191.9 L726.4,188.7 L724.0,190.6 L721.5,193.7 L719.0,191.9 L716.5,190.6 L712.7,191.9 L709.0,193.1 L705.2,192.5 L699.0,191.9 L694.0,191.2 L691.5,188.1 L686.5,185.0 L681.5,182.5 L678.4,180.0 L677.7,176.2 L677.1,172.5 L679.0,170.0 L681.5,168.1 L684.0,166.2 L685.2,163.1 L687.7,159.9 L692.1,157.4 L696.4,155.6 L701.4,154.9 L706.4,154.9 L710.2,153.7 L712.1,151.2 L710.2,148.1 L708.3,145.6 L709.6,143.1 L713.9,141.8 L716.4,138.1 L718.9,136.8 L722.0,138.1 L725.2,139.3 L730.2,138.7 L731.4,135.6 L728.3,131.8 L724.0,128.0 L721.2,123.0 L721.0,119.9 L723.3,117.4 L728.3,116.2 L730.2,114.3 L725.8,111.8 L722.7,107.4 L722.1,103.7 L724.0,101.2 L727.7,99.9 L730.8,97.4 L733.9,94.3 L736.4,89.9 L738.3,84.9 L738.9,79.9 L740.8,76.2 L742.4,71.8 L744.6,68.7 L748.3,68.1 L752.0,69.3 L755.2,70.6 L758.9,69.3 L762.0,68.1 L765.8,68.7 L768.9,67.5 L772.7,65.0 L775.8,62.5 L778.3,58.7 L780.1,55.6 L783.3,54.0 L786.4,55.2 L788.3,58.1 L789.5,60.6 L792.6,61.8 L795.8,63.7 L797.0,66.8 L799.5,68.1 L798.9,63.7 L797.6,60.0 L797.0,56.2 L798.9,53.7 L802.6,52.2 L805.1,49.3 L806.4,46.8 L808.9,46.5 L810.4,49.0 L812.6,48.1 L815.1,46.5 L818.9,45.6 L822.0,43.1 L824.5,41.9 L825.2,41.6 L829.6,44.1 L832.7,49.7 L834.0,57.2 L835.9,62.2 L840.8,68.4 L844.6,74.7 L845.8,80.9 L845.2,85.9 L840.2,89.7 L835.9,92.2 L829.0,94.7 L834.6,95.7 L840.1,96.3 L846.3,95.0 L849.6,93.4 L850.8,88.4 L849.0,83.4 L850.2,77.2 L847.7,72.2 L844.0,66.6 L839.0,60.9 L837.7,55.9 L839.6,49.7 L841.5,44.7 L840.8,39.7 L843.3,38.5 L846.5,39.1 L848.3,36.0 L851.5,37.2 L855.2,39.1 L859.0,36.0 L863.3,32.8 L862.1,27.8 L859.6,24.1 L857.1,21.0 L857.1,18.5 L860.8,17.2 L866.4,19.1 L872.7,21.6 L878.9,24.1 L883.9,27.2 L887.7,31.6 L890.8,36.0 L893.9,39.7 L900.2,42.8 L906.4,44.7 L912.7,47.2 L916.4,47.2 L918.9,49.7 L919.5,53.4 L918.3,57.2 L916.4,59.7 L915.8,59.1 L908.9,61.6 L901.4,65.3 L895.2,69.1 L888.9,73.4 L885.8,78.4 L883.3,83.4 L880.8,88.4 L879.2,92.2" fill="none" stroke="#fff" stroke-width="7.2" stroke-linejoin="round" clip-path="url(#c8)"/>
<path d="M1006.9,305.9 L1011.9,311.2 L1017.5,315.5 L1022.5,318.0 L1026.3,319.7 L1026.8,324.4 L1022.6,330.6 L1017.6,333.6 L1008.8,328.6 L1000.1,324.4 L993.9,324.4 L991.4,331.9 L990.9,341.9 L992.6,349.4 L998.9,353.1 L1006.3,354.4 L1008.8,361.9 L1007.6,368.1 L1010.8,371.9 L1008.8,381.8 L1010.1,394.3 L1012.6,404.3 L1018.8,413.1 L1026.3,418.1 L1030.1,424.3 L1028.8,434.3 L1026.3,441.8 L1023.8,448.0 L1026.3,454.0 L1032.6,457.7 L1031.3,462.7 L1026.3,465.2 L1020.1,461.5 L1013.8,466.5 L1016.3,472.7 L1021.3,477.7 L1026.3,481.5 L1026.8,489.0 L1028.8,495.2 L1032.6,504.0 L1036.3,513.9 L1035.8,523.9 L1033.3,531.4 L1032.6,538.9 L1036.3,543.9 L1040.1,550.2 L1036.3,556.4 L1032.6,563.9 L1030.1,571.4 L1026.3,577.6 L1022.6,586.4 L1018.8,596.4 L1015.1,606.3 L1011.8,616.3 L1011.8,626.3 L1013.3,636.3 L1011.3,643.8 L1006.3,651.3 L1000.1,658.8 L995.1,666.3 L992.6,673.8 L990.9,680.0 L992.6,679.4 L988.9,683.2 L990.9,689.4 L993.9,695.7 L997.6,701.9 L998.4,709.4 L995.9,714.9 L990.1,717.4 L983.9,713.2 L977.6,710.7 L971.4,713.9 L963.9,716.4 L956.4,713.2 L950.2,711.4 L942.7,711.9 L936.4,714.4 L931.4,717.4 L926.4,723.2 L921.4,726.9 L916.4,726.4 L913.9,721.9 L907.7,723.9 L901.5,725.7 L895.2,726.9 L892.7,723.2 L889.0,724.4 L884.0,726.9 L876.5,726.9 L866.5,726.2 L859.0,727.4 L853.6,729.4 L846.1,731.9 L839.9,734.9 L832.4,736.4 L836.1,739.9 L841.6,741.4 L840.7,741.2 L838.9,745.6 L836.4,748.7 L835.7,755.0 L832.0,757.5 L828.2,759.4 L824.5,758.7 L820.7,760.0 L819.5,763.1 L817.6,766.2 L812.6,765.6 L807.6,765.0 L803.3,764.3 L801.6,761.8 L800.9,758.5 L800.1,761.8 L800.5,765.6 L798.3,769.3 L795.8,772.5 L797.6,775.0 L796.4,777.5 L792.7,778.7 L788.9,780.6 L785.2,782.5 L781.4,784.3 L781.4,787.4 L782.7,789.9 L780.2,791.8 L775.2,792.7 L770.2,793.7 L765.2,795.2 L760.2,796.2 L755.2,796.4 L750.2,796.2 L747.7,795.8 L748.6,791.2 L750.4,787.4 L752.9,785.0 L755.2,783.1 L754.6,779.3 L750.8,778.1 L746.4,776.8 L742.7,776.0 L737.7,777.1 L731.5,777.5 L737.1,778.7 L739.0,782.5 L741.2,786.4 L744.6,789.9 L746.4,793.1 L747.1,796.2 L745.8,799.9 L744.6,804.3 L742.1,807.4 L739.0,809.9 L735.2,812.4 L731.5,814.3 L727.7,816.2 L724.6,818.4 L720.8,820.5 L717.7,821.2 L714.6,823.7 L714.0,827.4 L714.6,831.2 L715.5,834.3 L713.0,835.9 L710.2,833.9 L708.7,830.5 L705.2,829.7 L701.5,830.5 L696.5,831.2 L694.0,831.8 L691.9,840.5 L686.3,841.1 L681.3,839.9 L676.3,838.6 L671.9,839.9 L670.7,843.6 L666.3,845.5 L660.0,846.1 L655.0,845.5 L651.3,846.1 L647.6,848.6 L647.6,854.9 L541.4,854.9 L541.4,848.0 L542.0,846.5 L546.4,843.6 L552.7,839.9 L560.1,834.9 L566.4,830.5 L572.6,826.2 L578.9,822.4 L585.1,819.9 L591.4,818.0 L594.5,816.2 L595.7,812.4 L593.9,810.5 L590.1,813.0 L586.6,812.4 L584.5,808.7 L583.2,804.9 L582.0,808.7 L581.4,813.0 L578.9,816.2 L575.1,818.7 L570.1,820.9 L565.1,822.4 L558.9,823.9 L553.9,824.9 L548.9,825.8 L541.4,827.0 L535.2,828.0 L531.4,831.2 L526.4,833.7 L521.4,836.8 L516.4,836.1 L511.4,834.9 L506.4,836.8 L504.0,840.5 L502.1,838.6 L502.7,834.9 L504.0,832.4 L508.9,831.2 L513.9,829.9 L515.2,826.8 L511.4,824.9 L509.6,822.4 L512.7,819.9 L518.9,819.3 L523.9,816.2 L525.2,812.4 L523.9,809.3 L527.7,806.2 L532.7,803.1 L537.7,801.2 L541.4,799.9 L545.2,797.4 L550.2,793.1 L556.4,788.7 L562.6,785.6 L568.9,783.1 L577.0,779.0 L566.4,782.2 L556.4,786.4 L548.9,789.7 L541.4,792.7 L536.4,794.3 L531.4,796.8 L526.4,798.7 L521.4,801.2 L517.7,803.1 L512.7,806.2 L507.7,808.9 L505.2,806.2 L501.5,803.1 L496.5,799.9 L494.0,797.4 L496.5,794.9 L499.6,792.4 L500.2,788.7 L497.7,785.6 L494.0,784.3 L490.2,787.4 L487.1,791.2 L484.0,794.9 L480.8,798.4 L478.4,796.2 L478.4,791.2 L480.2,787.4 L477.1,785.0 L472.7,783.1 L470.9,780.0 L467.7,776.8 L469.6,772.5 L474.0,768.7 L479.0,766.2 L484.0,766.8 L487.1,769.3 L490.2,770.6 L489.0,767.5 L485.2,764.3 L484.0,761.2 L487.7,759.4 L489.0,755.6 L492.7,752.5 L499.0,749.4 L506.4,745.6 L513.9,743.1 L520.2,741.2 L525.2,738.7 L527.1,735.6 L527.1,736.9 L528.9,733.1 L529.5,729.4 L532.0,726.9 L536.4,726.3 L541.4,725.7 L546.4,725.0 L550.8,724.4 L546.4,723.8 L541.4,723.8 L536.4,724.2 L532.7,725.0 L527.7,725.7 L522.7,726.3 L517.7,726.9 L512.7,728.1 L507.7,730.0 L504.0,731.9 L500.2,731.3 L497.1,728.1 L494.0,726.9 L491.5,728.8 L487.7,729.4 L484.0,726.9 L479.0,728.1 L476.5,730.6 L472.7,733.1 L469.0,734.4 L465.2,733.1 L463.4,729.4 L462.7,725.7 L461.5,721.9 L462.7,718.8 L465.9,716.9 L465.2,713.8 L467.7,710.7 L472.7,709.4 L475.2,711.9 L475.9,708.2 L479.0,704.4 L482.7,701.9 L485.2,698.2 L490.2,695.1 L496.5,693.2 L501.5,691.3 L505.2,692.6 L506.2,696.9 L507.1,701.6 L511.4,700.9 L516.4,698.4 L518.9,694.4 L518.3,688.8 L521.4,686.7 L524.6,688.2 L525.8,693.2 L527.1,698.8 L530.2,701.7 L535.2,703.4 L540.2,701.9 L543.9,700.7 L548.9,700.1 L543.9,698.8 L541.4,697.6 L538.9,695.7 L537.9,691.9 L540.2,688.8 L543.9,686.9 L545.4,683.2 L545.8,678.2 L544.5,675.1 L541.4,673.5 L536.4,672.0 L532.7,670.1 L530.8,667.0 L530.8,664.5 L533.9,662.6 L538.9,661.3 L543.9,660.5 L550.2,658.2 L555.1,655.7 L560.1,652.6 L563.9,649.5 L568.3,651.4 L572.0,653.8 L567.0,648.9 L565.1,645.7 L563.9,642.0 L564.5,638.2 L566.4,634.5 L568.9,632.6 L573.9,631.4 L578.9,632.0 L585.1,632.6 L591.4,632.2 L597.6,630.7 L603.9,629.7 L610.1,629.2 L616.3,628.2 L622.6,627.6 L626.4,627.0 L632.6,625.2 L638.9,623.4 L643.9,621.4 L647.6,622.2 L650.7,621.4 L652.6,618.4 L654.5,614.7 L658.9,613.9 L666.3,613.7 L676.3,613.2 L685.3,612.2 L676.3,610.2 L670.1,608.3 L663.9,608.9 L658.2,609.7 L656.4,604.9 L656.7,599.9 L657.9,594.9 L661.1,590.0 L656.4,591.4 L652.6,595.9 L649.1,602.4 L645.1,609.9 L641.4,616.2 L638.3,620.5 L632.6,623.4 L626.4,625.2 L620.1,625.5 L616.4,622.4 L612.7,623.4 L608.9,625.2 L606.4,625.2 L600.2,625.3 L593.9,623.7 L588.9,621.2 L584.6,619.9 L582.4,616.4 L581.4,613.7 L583.3,616.4 L582.1,619.9 L578.9,621.8 L573.9,623.7 L567.7,625.5 L564.0,627.4 L562.7,631.2 L559.0,633.0 L551.5,634.5 L542.7,636.4 L532.7,638.3 L530.9,636.2 L531.5,634.3 L539.0,628.9 L546.5,623.7 L555.2,616.8 L564.0,609.9 L568.9,604.9 L572.1,601.2 L573.9,597.4 L578.9,595.6 L585.2,594.3 L588.9,592.4 L589.5,587.5 L588.9,583.7 L591.4,580.0 L593.9,576.2 L595.8,571.2 L596.4,566.8 L598.9,563.7 L601.4,561.2 L604.5,558.7 L605.8,556.9 L601.4,556.2 L595.2,556.0 L591.4,555.0 L592.0,552.5 L595.2,548.7 L598.9,544.4 L602.0,540.0 L604.5,535.1 L607.0,528.9 L609.5,522.7 L612.7,516.4 L615.8,511.4 L618.9,508.9 L622.0,508.3 L625.1,511.4 L628.3,514.5 L632.0,516.4 L635.8,514.2 L637.6,511.4 L635.1,509.2 L637.0,506.4 L642.6,505.2 L648.9,503.9 L655.1,502.7 L659.5,503.9 L658.9,498.9 L662.0,497.7 L657.6,497.7 L651.4,496.4 L646.4,497.1 L645.1,494.6 L648.9,492.7 L653.9,491.4 L657.6,488.9 L660.1,486.4 L655.1,485.8 L648.9,485.4 L643.9,486.4 L636.4,487.7 L626.4,488.7 L616.4,489.6 L608.9,490.2 L602.7,490.8 L598.9,492.7 L595.2,494.6 L590.2,495.4 L585.8,494.6 L582.7,492.1 L581.4,488.9 L581.4,485.2 L580.8,482.1 L578.9,485.2 L578.3,489.6 L575.2,491.4 L572.4,489.9 L571.7,486.4 L572.2,481.4 L572.7,476.4 L570.4,472.1 L572.7,470.2 L576.4,472.1 L580.8,469.0 L578.9,464.0 L582.1,460.2 L570.2,459.6 L566.4,462.7 L564.0,467.7 L561.5,472.7 L557.7,476.4 L551.5,478.9 L547.7,477.7 L544.0,475.2 L539.0,474.6 L535.2,472.7 L536.5,469.0 L538.4,465.2 L541.5,462.7 L545.2,460.8 L549.6,458.3 L546.5,457.7 L541.5,459.0 L537.7,456.5 L537.1,454.0 L534.0,456.5 L532.7,459.6 L529.0,461.5 L524.0,461.5 L520.2,460.2 L517.7,457.1 L514.0,456.5 L511.4,453.6 L506.4,454.3 L502.1,455.5 L500.2,452.4 L501.5,448.7 L505.2,445.5 L510.2,444.9 L515.2,445.5 L513.3,441.2 L512.1,437.4 L508.9,433.7 L506.4,428.7 L504.0,426.2 L499.6,428.0 L497.1,425.5 L498.3,422.4 L502.1,421.2 L506.4,422.4 L508.9,419.3 L513.3,418.1 L517.7,419.3 L522.1,422.4 L525.2,423.7 L522.7,419.9 L518.9,416.2 L517.1,413.1 L520.2,411.2 L525.2,410.6 L530.2,411.2 L535.2,410.6 L540.2,408.4 L537.7,406.2 L535.2,402.4 L533.9,397.5 L533.3,392.5 L534.5,387.5 L535.2,382.5 L534.9,378.1 L537.7,376.2 L542.7,374.7 L547.7,373.7 L552.0,371.9 L555.1,373.1 L560.1,372.5 L566.4,371.2 L572.6,370.0 L577.0,369.4 L573.9,368.1 L571.4,366.2 L572.6,363.1 L575.1,360.6 L575.8,356.9 L577.0,353.7 L577.6,351.2 L571.4,351.0 L563.9,351.2 L556.4,351.9 L551.4,353.7 L546.4,356.2 L541.4,358.1 L536.4,358.7 L532.7,356.2 L528.9,353.7 L525.2,351.2 L523.9,350.0 L520.2,347.4 L517.1,343.6 L516.4,339.9 L515.8,336.2 L512.7,334.3 L507.7,334.9 L502.7,335.5 L496.5,334.3 L491.5,333.0 L488.7,331.2 L490.2,328.9 L495.2,328.0 L498.0,325.9 L499.6,321.8 L502.7,322.7 L505.2,323.4 L508.9,321.4 L513.9,319.9 L518.9,319.3 L525.2,319.9 L530.2,321.4 L532.4,326.2 L533.9,331.2 L532.9,333.9 L536.4,334.3 L541.4,333.0 L543.3,329.7 L541.4,326.2 L539.5,323.0 L537.4,319.3 L536.4,314.9 L538.9,311.8 L542.0,308.1 L543.7,303.1 L545.8,301.2 L542.0,301.8 L539.5,306.2 L535.8,309.9 L532.0,312.7 L528.3,310.6 L525.4,305.9 L526.4,302.7 L530.8,301.4 L533.9,298.7 L531.7,293.9 L529.5,290.0 L527.7,286.5 L528.7,283.7 L530.9,282.0 L533.9,279.8 L537.0,277.6 L540.2,275.7 L539.2,274.2 L535.8,275.5 L532.4,277.3 L529.3,279.5 L526.4,281.7 L524.7,284.3 L523.9,287.5 L522.1,290.6 L518.9,293.7 L517.1,298.1 L518.3,302.4 L517.1,307.4 L512.7,308.7 L508.3,306.8 L506.2,301.2 L507.1,294.9 L509.6,290.0 L511.4,285.0 L512.7,280.0 L508.9,277.5 L507.7,274.3 L511.4,273.1 L513.9,269.3 L517.7,264.4 L521.4,260.0 L524.6,258.5 L527.7,260.6 L528.9,264.0 L532.7,265.0 L536.4,266.8 L540.2,265.6 L543.3,264.4 L546.2,263.5 L552.7,266.8 L555.1,270.0 L550.8,264.7 L545.8,262.2 L543.3,260.0 L542.0,255.6 L545.2,252.5 L552.0,250.6 L557.6,252.5 L562.6,255.6 L572.6,256.2 L583.9,256.9 L588.9,255.6 L595.1,258.1 L602.6,259.4 L606.3,257.5 L610.1,255.0 L616.3,256.9 L621.3,260.0 L622.6,263.7 L626.3,266.8 L628.2,271.2 L627.0,275.0 L630.1,277.5 L632.6,281.8 L634.8,286.5 L635.3,293.7 L635.8,286.5 L637.6,280.0 L641.3,276.2 L643.2,271.2 L643.8,266.2 L646.3,263.1 L651.3,261.9 L656.3,263.1 L661.3,262.5 L666.3,264.4 L672.5,266.2 L678.8,266.8 L683.8,265.0 L688.8,266.2 L694.0,265.0 L696.5,266.4 L699.6,267.4 L700.8,271.1 L702.1,275.5 L706.5,279.9 L711.5,281.1 L707.7,276.1 L704.0,271.1 L702.1,267.4 L704.0,264.3 L708.3,263.0 L714.0,262.4 L719.6,265.2 L711.5,261.2 L707.7,259.3 L706.5,256.2 L704.0,254.9 L699.0,254.7 L695.2,253.7 L694.0,250.5 L694.6,246.8 L697.7,244.3 L701.5,242.4 L706.5,239.3 L712.7,234.9 L719.0,231.2 L720.8,226.2 L720.5,221.8 L722.7,220.6 L725.2,224.9 L730.2,222.4 L736.4,220.6 L742.7,219.3 L747.7,217.5 L753.9,216.2 L747.7,215.6 L745.8,211.8 L747.7,208.7 L750.8,206.2 L752.0,201.2 L755.2,198.1 L757.7,193.7 L760.8,190.6 L763.3,188.7 L765.8,183.7 L761.4,188.7 L757.7,190.6 L753.9,192.5 L750.2,194.4 L746.4,193.7 L743.9,190.6 L742.7,187.5 L740.2,190.0 L736.4,194.4 L731.4,198.7 L727.7,202.5 L722.7,204.3 L720.5,202.5 L722.1,198.7 L725.2,195.0 L727.7,191.9 L726.4,188.7 L724.0,190.6 L721.5,193.7 L719.0,191.9 L716.5,190.6 L712.7,191.9 L709.0,193.1 L705.2,192.5 L699.0,191.9 L694.0,191.2 L691.5,188.1 L686.5,185.0 L681.5,182.5 L678.4,180.0 L677.7,176.2 L677.1,172.5 L679.0,170.0 L681.5,168.1 L684.0,166.2 L685.2,163.1 L687.7,159.9 L692.1,157.4 L696.4,155.6 L701.4,154.9 L706.4,154.9 L710.2,153.7 L712.1,151.2 L710.2,148.1 L708.3,145.6 L709.6,143.1 L713.9,141.8 L716.4,138.1 L718.9,136.8 L722.0,138.1 L725.2,139.3 L730.2,138.7 L731.4,135.6 L728.3,131.8 L724.0,128.0 L721.2,123.0 L721.0,119.9 L723.3,117.4 L728.3,116.2 L730.2,114.3 L725.8,111.8 L722.7,107.4 L722.1,103.7 L724.0,101.2 L727.7,99.9 L730.8,97.4 L733.9,94.3 L736.4,89.9 L738.3,84.9 L738.9,79.9 L740.8,76.2 L742.4,71.8 L744.6,68.7 L748.3,68.1 L752.0,69.3 L755.2,70.6 L758.9,69.3 L762.0,68.1 L765.8,68.7 L768.9,67.5 L772.7,65.0 L775.8,62.5 L778.3,58.7 L780.1,55.6 L783.3,54.0 L786.4,55.2 L788.3,58.1 L789.5,60.6 L792.6,61.8 L795.8,63.7 L797.0,66.8 L799.5,68.1 L798.9,63.7 L797.6,60.0 L797.0,56.2 L798.9,53.7 L802.6,52.2 L805.1,49.3 L806.4,46.8 L808.9,46.5 L810.4,49.0 L812.6,48.1 L815.1,46.5 L818.9,45.6 L822.0,43.1 L824.5,41.9 L825.2,41.6 L829.6,44.1 L832.7,49.7 L834.0,57.2 L835.9,62.2 L840.8,68.4 L844.6,74.7 L845.8,80.9 L845.2,85.9 L840.2,89.7 L835.9,92.2 L829.0,94.7 L834.6,95.7 L840.1,96.3 L846.3,95.0 L849.6,93.4 L850.8,88.4 L849.0,83.4 L850.2,77.2 L847.7,72.2 L844.0,66.6 L839.0,60.9 L837.7,55.9 L839.6,49.7 L841.5,44.7 L840.8,39.7 L843.3,38.5 L846.5,39.1 L848.3,36.0 L851.5,37.2 L855.2,39.1 L859.0,36.0 L863.3,32.8 L862.1,27.8 L859.6,24.1 L857.1,21.0 L857.1,18.5 L860.8,17.2 L866.4,19.1 L872.7,21.6 L878.9,24.1 L883.9,27.2 L887.7,31.6 L890.8,36.0 L893.9,39.7 L900.2,42.8 L906.4,44.7 L912.7,47.2 L916.4,47.2 L918.9,49.7 L919.5,53.4 L918.3,57.2 L916.4,59.7 L915.8,59.1 L908.9,61.6 L901.4,65.3 L895.2,69.1 L888.9,73.4 L885.8,78.4 L883.3,83.4 L880.8,88.4 L879.2,92.2" fill="none" stroke="#198EC8" stroke-width="1.7" stroke-linejoin="round" stroke-linecap="round"/>
<clipPath id="c9"><path d="M547.1,512.0 L549.6,509.5 L554.0,509.5 L560.2,511.4 L566.4,512.0 L570.2,514.5 L572.1,518.9 L572.7,523.3 L568.9,524.9 L564.0,522.7 L557.7,519.5 L551.5,516.4 L547.7,514.5Z" clip-rule="evenodd"/></clipPath>
<path d="M547.1,512.0 L549.6,509.5 L554.0,509.5 L560.2,511.4 L566.4,512.0 L570.2,514.5 L572.1,518.9 L572.7,523.3 L568.9,524.9 L564.0,522.7 L557.7,519.5 L551.5,516.4 L547.7,514.5Z" fill="#E7E58F" fill-rule="evenodd"/>
<path d="M547.1,512.0 L549.6,509.5 L554.0,509.5 L560.2,511.4 L566.4,512.0 L570.2,514.5 L572.1,518.9 L572.7,523.3 L568.9,524.9 L564.0,522.7 L557.7,519.5 L551.5,516.4 L547.7,514.5Z" fill="none" stroke="#fff" stroke-width="7.2" stroke-linejoin="round" clip-path="url(#c9)"/>
<path d="M547.1,512.0 L549.6,509.5 L554.0,509.5 L560.2,511.4 L566.4,512.0 L570.2,514.5 L572.1,518.9 L572.7,523.3 L568.9,524.9 L564.0,522.7 L557.7,519.5 L551.5,516.4 L547.7,514.5Z" fill="none" stroke="#198EC8" stroke-width="1.7" stroke-linejoin="round" stroke-linecap="round"/>
<clipPath id="c10"><path d="M559.6,485.2 L561.5,482.1 L565.2,480.2 L568.9,482.1 L570.8,486.4 L570.2,491.4 L566.4,494.6 L562.1,494.6 L559.6,490.2Z" clip-rule="evenodd"/></clipPath>
<path d="M559.6,485.2 L561.5,482.1 L565.2,480.2 L568.9,482.1 L570.8,486.4 L570.2,491.4 L566.4,494.6 L562.1,494.6 L559.6,490.2Z" fill="#E7E58F" fill-rule="evenodd"/>
<path d="M559.6,485.2 L561.5,482.1 L565.2,480.2 L568.9,482.1 L570.8,486.4 L570.2,491.4 L566.4,494.6 L562.1,494.6 L559.6,490.2Z" fill="none" stroke="#fff" stroke-width="7.2" stroke-linejoin="round" clip-path="url(#c10)"/>
<path d="M559.6,485.2 L561.5,482.1 L565.2,480.2 L568.9,482.1 L570.8,486.4 L570.2,491.4 L566.4,494.6 L562.1,494.6 L559.6,490.2Z" fill="none" stroke="#198EC8" stroke-width="1.7" stroke-linejoin="round" stroke-linecap="round"/>
<clipPath id="c11"><path d="M705.2,106.2 L708.3,101.8 L712.7,99.9 L717.1,101.8 L720.2,106.2 L720.8,111.2 L717.7,114.3 L711.5,114.9 L707.7,113.0 L706.5,109.3Z" clip-rule="evenodd"/></clipPath>
<path d="M705.2,106.2 L708.3,101.8 L712.7,99.9 L717.1,101.8 L720.2,106.2 L720.8,111.2 L717.7,114.3 L711.5,114.9 L707.7,113.0 L706.5,109.3Z" fill="#E7E58F" fill-rule="evenodd"/>
<path d="M705.2,106.2 L708.3,101.8 L712.7,99.9 L717.1,101.8 L720.2,106.2 L720.8,111.2 L717.7,114.3 L711.5,114.9 L707.7,113.0 L706.5,109.3Z" fill="none" stroke="#fff" stroke-width="7.2" stroke-linejoin="round" clip-path="url(#c11)"/>
<path d="M705.2,106.2 L708.3,101.8 L712.7,99.9 L717.1,101.8 L720.2,106.2 L720.8,111.2 L717.7,114.3 L711.5,114.9 L707.7,113.0 L706.5,109.3Z" fill="none" stroke="#198EC8" stroke-width="1.7" stroke-linejoin="round" stroke-linecap="round"/>
<clipPath id="c12"><path d="M535.2,830.2 L538.9,827.7 L545.2,826.8 L550.8,827.4 L552.7,829.5 L550.8,832.7 L546.4,834.4 L541.4,835.0 L537.0,834.4 L534.9,832.4Z" clip-rule="evenodd"/></clipPath>
<path d="M535.2,830.2 L538.9,827.7 L545.2,826.8 L550.8,827.4 L552.7,829.5 L550.8,832.7 L546.4,834.4 L541.4,835.0 L537.0,834.4 L534.9,832.4Z" fill="#E7E58F" fill-rule="evenodd"/>
<path d="M535.2,830.2 L538.9,827.7 L545.2,826.8 L550.8,827.4 L552.7,829.5 L550.8,832.7 L546.4,834.4 L541.4,835.0 L537.0,834.4 L534.9,832.4Z" fill="none" stroke="#fff" stroke-width="7.2" stroke-linejoin="round" clip-path="url(#c12)"/>
<path d="M535.2,830.2 L538.9,827.7 L545.2,826.8 L550.8,827.4 L552.7,829.5 L550.8,832.7 L546.4,834.4 L541.4,835.0 L537.0,834.4 L534.9,832.4Z" fill="none" stroke="#198EC8" stroke-width="1.7" stroke-linejoin="round" stroke-linecap="round"/>
<path d="M1422.6,848.0 L1426.4,843.9 L1431.4,846.1 L1438.9,846.1 L1446.4,844.3 L1453.9,841.1 L1463.9,837.6 L1476.3,822.4 L1486.3,812.4 L1492.6,807.4 L1498.8,804.3 L1501.3,799.9 L1500.1,804.9 L1493.8,809.3 L1488.8,813.7 L1480.1,824.9 L1470.1,837.4 L1463.9,848.0Z" fill="#D8F2FF" stroke="#fff" stroke-width="6" stroke-linejoin="round"/><path d="M1422.6,848.0 L1426.4,843.9 L1431.4,846.1 L1438.9,846.1 L1446.4,844.3 L1453.9,841.1 L1463.9,837.6 L1476.3,822.4 L1486.3,812.4 L1492.6,807.4 L1498.8,804.3 L1501.3,799.9 L1500.1,804.9 L1493.8,809.3 L1488.8,813.7 L1480.1,824.9 L1470.1,837.4 L1463.9,848.0Z" fill="#D8F2FF" stroke="#198EC8" stroke-width="1.7"/>
<path d="M878.9,91.9 L873.9,93.7 L868.9,95.6 L863.9,96.9 L860.1,100.0 L858.3,103.7 L857.0,107.5 L857.6,112.5 L857.0,116.2 L853.9,118.7 L852.6,122.5 L853.3,127.5 L852.6,132.4 L850.8,137.4 L847.6,142.4 L843.9,147.4 L840.1,151.8 L838.9,156.2 L839.5,161.2 L838.9,164.3 L833.9,163.0 L830.2,163.7 L826.4,163.0 L821.4,166.2 L816.4,169.3 L811.4,171.2 L807.7,169.3 L802.7,166.2 L797.7,169.3 L792.7,173.0 L792.0,173.7 L792.6,178.1 L795.8,181.2 L798.9,184.4 L803.9,186.9 L808.9,188.7 L813.9,191.9 L818.9,190.6 L819.5,193.7 L813.9,196.8 L808.9,200.6 L803.9,205.0 L798.9,208.1 L793.9,209.3 L786.4,208.1 L781.4,207.2 L778.3,210.6 L775.1,215.6 L771.4,219.3 L766.4,221.8 L761.4,223.7 L759.5,226.2 L761.4,229.9 L765.2,234.9 L768.9,239.9 L772.7,244.3 L777.0,247.4 L781.4,248.7 L783.9,253.7 L787.6,259.3 L792.6,261.8 L797.0,263.7 L798.9,268.7 L798.9,273.6 L800.1,278.6 L803.9,281.8 L811.4,283.0 L817.6,284.3 L822.6,286.0 L825.2,287.4 L829.0,291.2 L830.8,294.9 L836.5,296.8 L842.7,298.4 L847.7,298.7 L851.4,296.2 L855.2,294.9 L857.7,298.1 L860.2,299.9 L865.2,301.2 L869.5,302.2 L873.9,299.9 L875.2,295.6 L875.8,291.2 L877.0,287.4 L880.2,283.7 L883.9,280.6 L888.9,278.1 L890.8,275.6 L890.8,271.8 L888.9,268.7 L886.4,266.2 L885.8,263.7 L883.3,260.6 L885.2,256.8 L885.2,253.7 L889.5,252.5 L893.9,249.4 L897.6,245.0 L901.4,240.0 L904.5,236.9 L907.6,236.5 L911.4,238.7 L916.4,242.5 L920.1,245.6 L922.6,249.4 L925.1,253.1 L927.0,257.5 L928.2,261.8 L927.0,265.0 L925.1,266.5 L929.5,268.7 L931.4,272.5 L933.2,276.8 L936.4,280.6 L940.1,283.7 L943.9,286.2 L948.2,283.1 L952.0,285.6 L955.1,288.7 L957.0,292.4 L956.3,297.4 L953.8,301.8 L952.6,304.9 L953.2,309.9 L955.7,314.3 L958.8,318.0 L962.6,315.5 L968.8,313.7 L975.1,311.8 L981.3,311.2 L983.8,313.7 L988.8,311.8 L991.9,309.9 L992.6,303.7 L995.0,303.1 L998.8,304.9 L1003.8,303.7 L1006.9,305.5" fill="none" stroke="#fff" stroke-width="3" stroke-linejoin="round"/>
<path d="M540.2,408.4 L546.4,411.2 L553.9,412.4 L563.9,412.8" fill="none" stroke="#fff" stroke-width="4" stroke-linecap="round" stroke-linejoin="round"/>
<path d="M838.3,96.9 L832.7,103.7 L827.0,110.0 L822.0,115.6" fill="none" stroke="#fff" stroke-width="3" stroke-linecap="round" stroke-linejoin="round"/>
<path d="M1418.9,446.8 L1424.5,457.5 L1429.5,466.2 L1435.1,471.8 L1442.6,474.7 L1450.1,473.9 L1453.2,470.0 L1461.3,467.1" fill="none" stroke="#fff" stroke-width="5" stroke-linecap="round" stroke-linejoin="round"/>
<path d="M1093.7,241.8 L1095.4,245.5 L1097.6,249.9 L1100.1,253.0" fill="none" stroke="#fff" stroke-width="4" stroke-linecap="round" stroke-linejoin="round"/>
<path d="M818.9,55.6 L819.9,61.2 L821.4,70.0 L820.9,76.2 L819.5,82.4" fill="none" stroke="#fff" stroke-width="4" stroke-linecap="round" stroke-linejoin="round"/>
<path d="M865.7,38.7 L870.7,41.9 L875.0,42.7" fill="none" stroke="#fff" stroke-width="3" stroke-linecap="round" stroke-linejoin="round"/>
<path d="M910.9,693.2 L912.9,703.2 L915.4,714.4 L918.4,725.7" fill="none" stroke="#fff" stroke-width="3" stroke-linecap="round" stroke-linejoin="round"/>
<path d="M931.9,704.9 L936.4,701.9 L940.2,698.7" fill="none" stroke="#fff" stroke-width="3" stroke-linecap="round" stroke-linejoin="round"/>
<path d="M1063.3,138.7 L1068.9,146.1 L1073.9,153.0" fill="none" stroke="#fff" stroke-width="3" stroke-linecap="round" stroke-linejoin="round"/>
<path d="M1074.9,249.7 L1085.1,245.0 L1091.4,242.7" fill="none" stroke="#fff" stroke-width="4" stroke-linecap="round" stroke-linejoin="round"/>
<path d="M583.9,833.7 L573.9,838.6 L563.9,843.6 L555.1,847.6" fill="none" stroke="#fff" stroke-width="4" stroke-linecap="round" stroke-linejoin="round"/>
<path d="M1418.9,446.8 L1424.5,457.5 L1429.5,466.2 L1435.1,471.8 L1442.6,474.7 L1450.1,473.9 L1453.2,470.0 L1461.3,467.1" fill="none" stroke="#198EC8" stroke-width="1.2" stroke-linecap="round" stroke-linejoin="round"/>
<path d="M1093.7,241.8 L1095.4,245.5 L1097.6,249.9 L1100.1,253.0" fill="none" stroke="#198EC8" stroke-width="1.2" stroke-linecap="round" stroke-linejoin="round"/>
<path d="M818.9,55.6 L819.9,61.2 L821.4,70.0 L820.9,76.2" fill="none" stroke="#198EC8" stroke-width="1.2" stroke-linecap="round" stroke-linejoin="round"/>
<path d="M915.4,714.4 L918.4,725.7" fill="none" stroke="#198EC8" stroke-width="1.2" stroke-linecap="round" stroke-linejoin="round"/>
<path d="M573.9,838.6 L563.9,843.6 L555.1,847.6" fill="none" stroke="#198EC8" stroke-width="1.2" stroke-linecap="round" stroke-linejoin="round"/>
<path d="M838.3,96.9 L832.7,103.7 L827.0,110.0" fill="none" stroke="#198EC8" stroke-width="1.2" stroke-linecap="round" stroke-linejoin="round"/>
<circle cx="663.5" cy="607.6" r="143" fill="none" stroke="#d6d8fb" stroke-width="1.7"/>
<circle cx="718.8" cy="784.8" r="140.5" fill="none" stroke="#d6d8fb" stroke-width="1.7"/>
<circle cx="1005.1" cy="488.3" r="193" fill="none" stroke="#d6d8fb" stroke-width="1.7"/>
<circle cx="738.0" cy="97.3" r="81" fill="none" stroke="#8f99f5" stroke-width="2.0"/>
<circle cx="677.5" cy="345.0" r="98" fill="none" stroke="#8f99f5" stroke-width="2.0"/>
<circle cx="663.5" cy="607.6" r="95.5" fill="none" stroke="#8f99f5" stroke-width="2.0"/>
<circle cx="585.0" cy="715.3" r="75" fill="none" stroke="#8f99f5" stroke-width="2.0"/>
<circle cx="718.8" cy="784.8" r="93.7" fill="none" stroke="#8f99f5" stroke-width="2.0"/>
<circle cx="899.4" cy="713.8" r="75.7" fill="none" stroke="#8f99f5" stroke-width="2.0"/>
<circle cx="981.5" cy="476.2" r="48.3" fill="none" stroke="#8f99f5" stroke-width="2.0"/>
<circle cx="1005.1" cy="488.3" r="96.2" fill="none" stroke="#8f99f5" stroke-width="2.0"/>
<circle cx="738.0" cy="97.3" r="50.5" fill="none" stroke="#0a16ee" stroke-width="2.2"/>
<circle cx="677.5" cy="345.0" r="49.2" fill="none" stroke="#0a16ee" stroke-width="2.2"/>
<circle cx="663.5" cy="607.6" r="47.8" fill="none" stroke="#0a16ee" stroke-width="2.2"/>
<circle cx="585.0" cy="715.3" r="47" fill="none" stroke="#0a16ee" stroke-width="2.2"/>
<circle cx="718.8" cy="784.8" r="47" fill="none" stroke="#0a16ee" stroke-width="2.2"/>
<circle cx="899.4" cy="713.8" r="47.4" fill="none" stroke="#0a16ee" stroke-width="2.2"/>
<circle cx="981.5" cy="476.2" r="19.3" fill="none" stroke="#0a16ee" stroke-width="2.2"/>
<circle cx="1005.1" cy="488.3" r="48.2" fill="none" stroke="#0a16ee" stroke-width="2.2"/>
<path d="M0,0 L1.2,1.6 L1.7,3.2 L1.7,7.8 L4,8.1 L9.6,12.5 L9.6,15.2 L8.7,15.2 L8.2,13.9 L5.6,13.9 L5.3,13.1 L1.7,13.1 L1.7,19.7 L4.6,21.2 L4.6,22 L1.9,22 L1,21.3 L0,21.9 L-1,21.3 L-1.9,22 L-4.6,22 L-4.6,21.2 L-1.7,19.7 L-1.7,13.1 L-5.3,13.1 L-5.6,13.9 L-8.2,13.9 L-8.7,15.2 L-9.6,15.2 L-9.6,12.5 L-4,8.1 L-1.7,7.8 L-1.7,3.2 L-1.2,1.6Z" transform="translate(738.0,86.3)" fill="#FF6600"/>
<path d="M0,0 L1.2,1.6 L1.7,3.2 L1.7,7.8 L4,8.1 L9.6,12.5 L9.6,15.2 L8.7,15.2 L8.2,13.9 L5.6,13.9 L5.3,13.1 L1.7,13.1 L1.7,19.7 L4.6,21.2 L4.6,22 L1.9,22 L1,21.3 L0,21.9 L-1,21.3 L-1.9,22 L-4.6,22 L-4.6,21.2 L-1.7,19.7 L-1.7,13.1 L-5.3,13.1 L-5.6,13.9 L-8.2,13.9 L-8.7,15.2 L-9.6,15.2 L-9.6,12.5 L-4,8.1 L-1.7,7.8 L-1.7,3.2 L-1.2,1.6Z" transform="translate(677.5,334.0)" fill="#FF6600"/>
<path d="M0,0 L1.2,1.6 L1.7,3.2 L1.7,7.8 L4,8.1 L9.6,12.5 L9.6,15.2 L8.7,15.2 L8.2,13.9 L5.6,13.9 L5.3,13.1 L1.7,13.1 L1.7,19.7 L4.6,21.2 L4.6,22 L1.9,22 L1,21.3 L0,21.9 L-1,21.3 L-1.9,22 L-4.6,22 L-4.6,21.2 L-1.7,19.7 L-1.7,13.1 L-5.3,13.1 L-5.6,13.9 L-8.2,13.9 L-8.7,15.2 L-9.6,15.2 L-9.6,12.5 L-4,8.1 L-1.7,7.8 L-1.7,3.2 L-1.2,1.6Z" transform="translate(663.5,596.6)" fill="#FF6600"/>
<path d="M0,0 L1.2,1.6 L1.7,3.2 L1.7,7.8 L4,8.1 L9.6,12.5 L9.6,15.2 L8.7,15.2 L8.2,13.9 L5.6,13.9 L5.3,13.1 L1.7,13.1 L1.7,19.7 L4.6,21.2 L4.6,22 L1.9,22 L1,21.3 L0,21.9 L-1,21.3 L-1.9,22 L-4.6,22 L-4.6,21.2 L-1.7,19.7 L-1.7,13.1 L-5.3,13.1 L-5.6,13.9 L-8.2,13.9 L-8.7,15.2 L-9.6,15.2 L-9.6,12.5 L-4,8.1 L-1.7,7.8 L-1.7,3.2 L-1.2,1.6Z" transform="translate(585.0,704.3)" fill="#FF6600"/>
<path d="M0,0 L1.2,1.6 L1.7,3.2 L1.7,7.8 L4,8.1 L9.6,12.5 L9.6,15.2 L8.7,15.2 L8.2,13.9 L5.6,13.9 L5.3,13.1 L1.7,13.1 L1.7,19.7 L4.6,21.2 L4.6,22 L1.9,22 L1,21.3 L0,21.9 L-1,21.3 L-1.9,22 L-4.6,22 L-4.6,21.2 L-1.7,19.7 L-1.7,13.1 L-5.3,13.1 L-5.6,13.9 L-8.2,13.9 L-8.7,15.2 L-9.6,15.2 L-9.6,12.5 L-4,8.1 L-1.7,7.8 L-1.7,3.2 L-1.2,1.6Z" transform="translate(718.8,773.8)" fill="#FF6600"/>
<path d="M0,0 L1.2,1.6 L1.7,3.2 L1.7,7.8 L4,8.1 L9.6,12.5 L9.6,15.2 L8.7,15.2 L8.2,13.9 L5.6,13.9 L5.3,13.1 L1.7,13.1 L1.7,19.7 L4.6,21.2 L4.6,22 L1.9,22 L1,21.3 L0,21.9 L-1,21.3 L-1.9,22 L-4.6,22 L-4.6,21.2 L-1.7,19.7 L-1.7,13.1 L-5.3,13.1 L-5.6,13.9 L-8.2,13.9 L-8.7,15.2 L-9.6,15.2 L-9.6,12.5 L-4,8.1 L-1.7,7.8 L-1.7,3.2 L-1.2,1.6Z" transform="translate(899.4,702.8)" fill="#FF6600"/>
<path d="M0,0 L1.2,1.6 L1.7,3.2 L1.7,7.8 L4,8.1 L9.6,12.5 L9.6,15.2 L8.7,15.2 L8.2,13.9 L5.6,13.9 L5.3,13.1 L1.7,13.1 L1.7,19.7 L4.6,21.2 L4.6,22 L1.9,22 L1,21.3 L0,21.9 L-1,21.3 L-1.9,22 L-4.6,22 L-4.6,21.2 L-1.7,19.7 L-1.7,13.1 L-5.3,13.1 L-5.6,13.9 L-8.2,13.9 L-8.7,15.2 L-9.6,15.2 L-9.6,12.5 L-4,8.1 L-1.7,7.8 L-1.7,3.2 L-1.2,1.6Z" transform="translate(981.5,465.2)" fill="#FF6600"/>
<path d="M0,0 L1.2,1.6 L1.7,3.2 L1.7,7.8 L4,8.1 L9.6,12.5 L9.6,15.2 L8.7,15.2 L8.2,13.9 L5.6,13.9 L5.3,13.1 L1.7,13.1 L1.7,19.7 L4.6,21.2 L4.6,22 L1.9,22 L1,21.3 L0,21.9 L-1,21.3 L-1.9,22 L-4.6,22 L-4.6,21.2 L-1.7,19.7 L-1.7,13.1 L-5.3,13.1 L-5.6,13.9 L-8.2,13.9 L-8.7,15.2 L-9.6,15.2 L-9.6,12.5 L-4,8.1 L-1.7,7.8 L-1.7,3.2 L-1.2,1.6Z" transform="translate(1005.1,477.3)" fill="#FF6600"/>
<path d="M0,0 L1.2,1.6 L1.7,3.2 L1.7,7.8 L4,8.1 L9.6,12.5 L9.6,15.2 L8.7,15.2 L8.2,13.9 L5.6,13.9 L5.3,13.1 L1.7,13.1 L1.7,19.7 L4.6,21.2 L4.6,22 L1.9,22 L1,21.3 L0,21.9 L-1,21.3 L-1.9,22 L-4.6,22 L-4.6,21.2 L-1.7,19.7 L-1.7,13.1 L-5.3,13.1 L-5.6,13.9 L-8.2,13.9 L-8.7,15.2 L-9.6,15.2 L-9.6,12.5 L-4,8.1 L-1.7,7.8 L-1.7,3.2 L-1.2,1.6Z" transform="translate(1030.8,499.2)" fill="#FF6600"/>
<path d="M0,0 L1.2,1.6 L1.7,3.2 L1.7,7.8 L4,8.1 L9.6,12.5 L9.6,15.2 L8.7,15.2 L8.2,13.9 L5.6,13.9 L5.3,13.1 L1.7,13.1 L1.7,19.7 L4.6,21.2 L4.6,22 L1.9,22 L1,21.3 L0,21.9 L-1,21.3 L-1.9,22 L-4.6,22 L-4.6,21.2 L-1.7,19.7 L-1.7,13.1 L-5.3,13.1 L-5.6,13.9 L-8.2,13.9 L-8.7,15.2 L-9.6,15.2 L-9.6,12.5 L-4,8.1 L-1.7,7.8 L-1.7,3.2 L-1.2,1.6Z" transform="translate(915.2,542.0)" fill="#FF6600"/>
<path d="M0,0 L1.2,1.6 L1.7,3.2 L1.7,7.8 L4,8.1 L9.6,12.5 L9.6,15.2 L8.7,15.2 L8.2,13.9 L5.6,13.9 L5.3,13.1 L1.7,13.1 L1.7,19.7 L4.6,21.2 L4.6,22 L1.9,22 L1,21.3 L0,21.9 L-1,21.3 L-1.9,22 L-4.6,22 L-4.6,21.2 L-1.7,19.7 L-1.7,13.1 L-5.3,13.1 L-5.6,13.9 L-8.2,13.9 L-8.7,15.2 L-9.6,15.2 L-9.6,12.5 L-4,8.1 L-1.7,7.8 L-1.7,3.2 L-1.2,1.6Z" transform="translate(966.5,266.2)" fill="#FF6600"/>
<path d="M0,0 L1.2,1.6 L1.7,3.2 L1.7,7.8 L4,8.1 L9.6,12.5 L9.6,15.2 L8.7,15.2 L8.2,13.9 L5.6,13.9 L5.3,13.1 L1.7,13.1 L1.7,19.7 L4.6,21.2 L4.6,22 L1.9,22 L1,21.3 L0,21.9 L-1,21.3 L-1.9,22 L-4.6,22 L-4.6,21.2 L-1.7,19.7 L-1.7,13.1 L-5.3,13.1 L-5.6,13.9 L-8.2,13.9 L-8.7,15.2 L-9.6,15.2 L-9.6,12.5 L-4,8.1 L-1.7,7.8 L-1.7,3.2 L-1.2,1.6Z" transform="translate(1043.5,752.0)" fill="#FF6600"/>
<text x="821.5" y="508" text-anchor="middle" font-family="'Liberation Sans',sans-serif" font-size="16" letter-spacing="0.3" fill="#08254D" stroke="#fff" stroke-width="3.2" stroke-linejoin="round">Ireland</text>
<text x="821.5" y="508" text-anchor="middle" font-family="'Liberation Sans',sans-serif" font-size="16" letter-spacing="0.3" fill="#08254D" stroke="#08254D" stroke-width="0.7">Ireland</text>
<text x="1226" y="283" text-anchor="middle" font-family="'Liberation Sans',sans-serif" font-size="16" letter-spacing="0.15" fill="#08254D" stroke="#fff" stroke-width="3.2" stroke-linejoin="round">Isle of Man</text>
<text x="1226" y="283" text-anchor="middle" font-family="'Liberation Sans',sans-serif" font-size="16" letter-spacing="0.15" fill="#08254D" stroke="#08254D" stroke-width="0.7">Isle of Man</text>
</svg>
<svg class="abs" style="left:0;top:0;pointer-events:none" width="1575" height="925" viewBox="0 0 1575 925"><clipPath id="mapclip"><rect x="46" y="70" width="1518" height="848"/></clipPath><g fill="#505356" clip-path="url(#mapclip)"><rect x="45" y="69" width="2" height="2"/><rect x="45" y="104" width="2" height="2"/><rect x="45" y="139" width="2" height="2"/><rect x="45" y="175" width="2" height="2"/><rect x="45" y="210" width="2" height="2"/><rect x="45" y="245" width="2" height="2"/><rect x="45" y="281" width="2" height="2"/><rect x="45" y="316" width="2" height="2"/><rect x="45" y="351" width="2" height="2"/><rect x="45" y="387" width="2" height="2"/><rect x="45" y="422" width="2" height="2"/><rect x="45" y="457" width="2" height="2"/><rect x="45" y="493" width="2" height="2"/><rect x="45" y="528" width="2" height="2"/><rect x="45" y="563" width="2" height="2"/><rect x="45" y="599" width="2" height="2"/><rect x="45" y="634" width="2" height="2"/><rect x="45" y="669" width="2" height="2"/><rect x="45" y="705" width="2" height="2"/><rect x="45" y="740" width="2" height="2"/><rect x="45" y="775" width="2" height="2"/><rect x="45" y="811" width="2" height="2"/><rect x="45" y="846" width="2" height="2"/><rect x="45" y="881" width="2" height="2"/><rect x="45" y="917" width="2" height="2"/><rect x="87" y="69" width="2" height="2"/><rect x="87" y="104" width="2" height="2"/><rect x="87" y="139" width="2" height="2"/><rect x="87" y="175" width="2" height="2"/><rect x="87" y="210" width="2" height="2"/><rect x="87" y="245" width="2" height="2"/><rect x="87" y="281" width="2" height="2"/><rect x="87" y="316" width="2" height="2"/><rect x="87" y="351" width="2" height="2"/><rect x="87" y="387" width="2" height="2"/><rect x="87" y="422" width="2" height="2"/><rect x="87" y="457" width="2" height="2"/><rect x="87" y="493" width="2" height="2"/><rect x="87" y="528" width="2" height="2"/><rect x="87" y="563" width="2" height="2"/><rect x="87" y="599" width="2" height="2"/><rect x="87" y="634" width="2" height="2"/><rect x="87" y="669" width="2" height="2"/><rect x="87" y="705" width="2" height="2"/><rect x="87" y="740" width="2" height="2"/><rect x="87" y="775" width="2" height="2"/><rect x="87" y="811" width="2" height="2"/><rect x="87" y="846" width="2" height="2"/><rect x="87" y="881" width="2" height="2"/><rect x="87" y="917" width="2" height="2"/><rect x="129" y="69" width="2" height="2"/><rect x="129" y="104" width="2" height="2"/><rect x="129" y="139" width="2" height="2"/><rect x="129" y="175" width="2" height="2"/><rect x="129" y="210" width="2" height="2"/><rect x="129" y="245" width="2" height="2"/><rect x="129" y="281" width="2" height="2"/><rect x="129" y="316" width="2" height="2"/><rect x="129" y="351" width="2" height="2"/><rect x="129" y="387" width="2" height="2"/><rect x="129" y="422" width="2" height="2"/><rect x="129" y="457" width="2" height="2"/><rect x="129" y="493" width="2" height="2"/><rect x="129" y="528" width="2" height="2"/><rect x="129" y="563" width="2" height="2"/><rect x="129" y="599" width="2" height="2"/><rect x="129" y="634" width="2" height="2"/><rect x="129" y="669" width="2" height="2"/><rect x="129" y="705" width="2" height="2"/><rect x="129" y="740" width="2" height="2"/><rect x="129" y="775" width="2" height="2"/><rect x="129" y="811" width="2" height="2"/><rect x="129" y="846" width="2" height="2"/><rect x="129" y="881" width="2" height="2"/><rect x="129" y="917" width="2" height="2"/><rect x="171" y="69" width="2" height="2"/><rect x="171" y="104" width="2" height="2"/><rect x="171" y="139" width="2" height="2"/><rect x="171" y="175" width="2" height="2"/><rect x="171" y="210" width="2" height="2"/><rect x="171" y="245" width="2" height="2"/><rect x="171" y="281" width="2" height="2"/><rect x="171" y="316" width="2" height="2"/><rect x="171" y="351" width="2" height="2"/><rect x="171" y="387" width="2" height="2"/><rect x="171" y="422" width="2" height="2"/><rect x="171" y="457" width="2" height="2"/><rect x="171" y="493" width="2" height="2"/><rect x="171" y="528" width="2" height="2"/><rect x="171" y="563" width="2" height="2"/><rect x="171" y="599" width="2" height="2"/><rect x="171" y="634" width="2" height="2"/><rect x="171" y="669" width="2" height="2"/><rect x="171" y="705" width="2" height="2"/><rect x="171" y="740" width="2" height="2"/><rect x="171" y="775" width="2" height="2"/><rect x="171" y="811" width="2" height="2"/><rect x="171" y="846" width="2" height="2"/><rect x="171" y="881" width="2" height="2"/><rect x="171" y="917" width="2" height="2"/><rect x="213" y="69" width="2" height="2"/><rect x="213" y="104" width="2" height="2"/><rect x="213" y="139" width="2" height="2"/><rect x="213" y="175" width="2" height="2"/><rect x="213" y="210" width="2" height="2"/><rect x="213" y="245" width="2" height="2"/><rect x="213" y="281" width="2" height="2"/><rect x="213" y="316" width="2" height="2"/><rect x="213" y="351" width="2" height="2"/><rect x="213" y="387" width="2" height="2"/><rect x="213" y="422" width="2" height="2"/><rect x="213" y="457" width="2" height="2"/><rect x="213" y="493" width="2" height="2"/><rect x="213" y="528" width="2" height="2"/><rect x="213" y="563" width="2" height="2"/><rect x="213" y="599" width="2" height="2"/><rect x="213" y="634" width="2" height="2"/><rect x="213" y="669" width="2" height="2"/><rect x="213" y="705" width="2" height="2"/><rect x="213" y="740" width="2" height="2"/><rect x="213" y="775" width="2" height="2"/><rect x="213" y="811" width="2" height="2"/><rect x="213" y="846" width="2" height="2"/><rect x="213" y="881" width="2" height="2"/><rect x="213" y="917" width="2" height="2"/><rect x="255" y="69" width="2" height="2"/><rect x="255" y="104" width="2" height="2"/><rect x="255" y="139" width="2" height="2"/><rect x="255" y="175" width="2" height="2"/><rect x="255" y="210" width="2" height="2"/><rect x="255" y="245" width="2" height="2"/><rect x="255" y="281" width="2" height="2"/><rect x="255" y="316" width="2" height="2"/><rect x="255" y="351" width="2" height="2"/><rect x="255" y="387" width="2" height="2"/><rect x="255" y="422" width="2" height="2"/><rect x="255" y="457" width="2" height="2"/><rect x="255" y="493" width="2" height="2"/><rect x="255" y="528" width="2" height="2"/><rect x="255" y="563" width="2" height="2"/><rect x="255" y="599" width="2" height="2"/><rect x="255" y="634" width="2" height="2"/><rect x="255" y="669" width="2" height="2"/><rect x="255" y="705" width="2" height="2"/><rect x="255" y="740" width="2" height="2"/><rect x="255" y="775" width="2" height="2"/><rect x="255" y="811" width="2" height="2"/><rect x="255" y="846" width="2" height="2"/><rect x="255" y="881" width="2" height="2"/><rect x="255" y="917" width="2" height="2"/><rect x="298" y="69" width="2" height="2"/><rect x="298" y="104" width="2" height="2"/><rect x="298" y="139" width="2" height="2"/><rect x="298" y="175" width="2" height="2"/><rect x="298" y="210" width="2" height="2"/><rect x="298" y="245" width="2" height="2"/><rect x="298" y="281" width="2" height="2"/><rect x="298" y="316" width="2" height="2"/><rect x="298" y="351" width="2" height="2"/><rect x="298" y="387" width="2" height="2"/><rect x="298" y="422" width="2" height="2"/><rect x="298" y="457" width="2" height="2"/><rect x="298" y="493" width="2" height="2"/><rect x="298" y="528" width="2" height="2"/><rect x="298" y="563" width="2" height="2"/><rect x="298" y="599" width="2" height="2"/><rect x="298" y="634" width="2" height="2"/><rect x="298" y="669" width="2" height="2"/><rect x="298" y="705" width="2" height="2"/><rect x="298" y="740" width="2" height="2"/><rect x="298" y="775" width="2" height="2"/><rect x="298" y="811" width="2" height="2"/><rect x="298" y="846" width="2" height="2"/><rect x="298" y="881" width="2" height="2"/><rect x="298" y="917" width="2" height="2"/><rect x="340" y="69" width="2" height="2"/><rect x="340" y="104" width="2" height="2"/><rect x="340" y="139" width="2" height="2"/><rect x="340" y="175" width="2" height="2"/><rect x="340" y="210" width="2" height="2"/><rect x="340" y="245" width="2" height="2"/><rect x="340" y="281" width="2" height="2"/><rect x="340" y="316" width="2" height="2"/><rect x="340" y="351" width="2" height="2"/><rect x="340" y="387" width="2" height="2"/><rect x="340" y="422" width="2" height="2"/><rect x="340" y="457" width="2" height="2"/><rect x="340" y="493" width="2" height="2"/><rect x="340" y="528" width="2" height="2"/><rect x="340" y="563" width="2" height="2"/><rect x="340" y="599" width="2" height="2"/><rect x="340" y="634" width="2" height="2"/><rect x="340" y="669" width="2" height="2"/><rect x="340" y="705" width="2" height="2"/><rect x="340" y="740" width="2" height="2"/><rect x="340" y="775" width="2" height="2"/><rect x="340" y="811" width="2" height="2"/><rect x="340" y="846" width="2" height="2"/><rect x="340" y="881" width="2" height="2"/><rect x="340" y="917" width="2" height="2"/><rect x="382" y="69" width="2" height="2"/><rect x="382" y="104" width="2" height="2"/><rect x="382" y="139" width="2" height="2"/><rect x="382" y="175" width="2" height="2"/><rect x="382" y="210" width="2" height="2"/><rect x="382" y="245" width="2" height="2"/><rect x="382" y="281" width="2" height="2"/><rect x="382" y="316" width="2" height="2"/><rect x="382" y="351" width="2" height="2"/><rect x="382" y="387" width="2" height="2"/><rect x="382" y="422" width="2" height="2"/><rect x="382" y="457" width="2" height="2"/><rect x="382" y="493" width="2" height="2"/><rect x="382" y="528" width="2" height="2"/><rect x="382" y="563" width="2" height="2"/><rect x="382" y="599" width="2" height="2"/><rect x="382" y="634" width="2" height="2"/><rect x="382" y="669" width="2" height="2"/><rect x="382" y="705" width="2" height="2"/><rect x="382" y="740" width="2" height="2"/><rect x="382" y="775" width="2" height="2"/><rect x="382" y="811" width="2" height="2"/><rect x="382" y="846" width="2" height="2"/><rect x="382" y="881" width="2" height="2"/><rect x="382" y="917" width="2" height="2"/><rect x="424" y="69" width="2" height="2"/><rect x="424" y="104" width="2" height="2"/><rect x="424" y="139" width="2" height="2"/><rect x="424" y="175" width="2" height="2"/><rect x="424" y="210" width="2" height="2"/><rect x="424" y="245" width="2" height="2"/><rect x="424" y="281" width="2" height="2"/><rect x="424" y="316" width="2" height="2"/><rect x="424" y="351" width="2" height="2"/><rect x="424" y="387" width="2" height="2"/><rect x="424" y="422" width="2" height="2"/><rect x="424" y="457" width="2" height="2"/><rect x="424" y="493" width="2" height="2"/><rect x="424" y="528" width="2" height="2"/><rect x="424" y="563" width="2" height="2"/><rect x="424" y="599" width="2" height="2"/><rect x="424" y="634" width="2" height="2"/><rect x="424" y="669" width="2" height="2"/><rect x="424" y="705" width="2" height="2"/><rect x="424" y="740" width="2" height="2"/><rect x="424" y="775" width="2" height="2"/><rect x="424" y="811" width="2" height="2"/><rect x="424" y="846" width="2" height="2"/><rect x="424" y="881" width="2" height="2"/><rect x="424" y="917" width="2" height="2"/><rect x="466" y="69" width="2" height="2"/><rect x="466" y="104" width="2" height="2"/><rect x="466" y="139" width="2" height="2"/><rect x="466" y="175" width="2" height="2"/><rect x="466" y="210" width="2" height="2"/><rect x="466" y="245" width="2" height="2"/><rect x="466" y="281" width="2" height="2"/><rect x="466" y="316" width="2" height="2"/><rect x="466" y="351" width="2" height="2"/><rect x="466" y="387" width="2" height="2"/><rect x="466" y="422" width="2" height="2"/><rect x="466" y="457" width="2" height="2"/><rect x="466" y="493" width="2" height="2"/><rect x="466" y="528" width="2" height="2"/><rect x="466" y="563" width="2" height="2"/><rect x="466" y="599" width="2" height="2"/><rect x="466" y="634" width="2" height="2"/><rect x="466" y="669" width="2" height="2"/><rect x="466" y="705" width="2" height="2"/><rect x="466" y="740" width="2" height="2"/><rect x="466" y="775" width="2" height="2"/><rect x="466" y="811" width="2" height="2"/><rect x="466" y="846" width="2" height="2"/><rect x="466" y="881" width="2" height="2"/><rect x="466" y="917" width="2" height="2"/><rect x="508" y="69" width="2" height="2"/><rect x="508" y="104" width="2" height="2"/><rect x="508" y="139" width="2" height="2"/><rect x="508" y="175" width="2" height="2"/><rect x="508" y="210" width="2" height="2"/><rect x="508" y="245" width="2" height="2"/><rect x="508" y="281" width="2" height="2"/><rect x="508" y="316" width="2" height="2"/><rect x="508" y="351" width="2" height="2"/><rect x="508" y="387" width="2" height="2"/><rect x="508" y="422" width="2" height="2"/><rect x="508" y="457" width="2" height="2"/><rect x="508" y="493" width="2" height="2"/><rect x="508" y="528" width="2" height="2"/><rect x="508" y="563" width="2" height="2"/><rect x="508" y="599" width="2" height="2"/><rect x="508" y="634" width="2" height="2"/><rect x="508" y="669" width="2" height="2"/><rect x="508" y="705" width="2" height="2"/><rect x="508" y="740" width="2" height="2"/><rect x="508" y="775" width="2" height="2"/><rect x="508" y="811" width="2" height="2"/><rect x="508" y="846" width="2" height="2"/><rect x="508" y="881" width="2" height="2"/><rect x="508" y="917" width="2" height="2"/><rect x="551" y="69" width="2" height="2"/><rect x="551" y="104" width="2" height="2"/><rect x="551" y="139" width="2" height="2"/><rect x="551" y="175" width="2" height="2"/><rect x="551" y="210" width="2" height="2"/><rect x="551" y="245" width="2" height="2"/><rect x="551" y="281" width="2" height="2"/><rect x="551" y="316" width="2" height="2"/><rect x="551" y="351" width="2" height="2"/><rect x="551" y="387" width="2" height="2"/><rect x="551" y="422" width="2" height="2"/><rect x="551" y="457" width="2" height="2"/><rect x="551" y="493" width="2" height="2"/><rect x="551" y="528" width="2" height="2"/><rect x="551" y="563" width="2" height="2"/><rect x="551" y="599" width="2" height="2"/><rect x="551" y="634" width="2" height="2"/><rect x="551" y="669" width="2" height="2"/><rect x="551" y="705" width="2" height="2"/><rect x="551" y="740" width="2" height="2"/><rect x="551" y="775" width="2" height="2"/><rect x="551" y="811" width="2" height="2"/><rect x="551" y="846" width="2" height="2"/><rect x="551" y="881" width="2" height="2"/><rect x="551" y="917" width="2" height="2"/><rect x="593" y="69" width="2" height="2"/><rect x="593" y="104" width="2" height="2"/><rect x="593" y="139" width="2" height="2"/><rect x="593" y="175" width="2" height="2"/><rect x="593" y="210" width="2" height="2"/><rect x="593" y="245" width="2" height="2"/><rect x="593" y="281" width="2" height="2"/><rect x="593" y="316" width="2" height="2"/><rect x="593" y="351" width="2" height="2"/><rect x="593" y="387" width="2" height="2"/><rect x="593" y="422" width="2" height="2"/><rect x="593" y="457" width="2" height="2"/><rect x="593" y="493" width="2" height="2"/><rect x="593" y="528" width="2" height="2"/><rect x="593" y="563" width="2" height="2"/><rect x="593" y="599" width="2" height="2"/><rect x="593" y="634" width="2" height="2"/><rect x="593" y="669" width="2" height="2"/><rect x="593" y="705" width="2" height="2"/><rect x="593" y="740" width="2" height="2"/><rect x="593" y="775" width="2" height="2"/><rect x="593" y="811" width="2" height="2"/><rect x="593" y="846" width="2" height="2"/><rect x="593" y="881" width="2" height="2"/><rect x="593" y="917" width="2" height="2"/><rect x="635" y="69" width="2" height="2"/><rect x="635" y="104" width="2" height="2"/><rect x="635" y="139" width="2" height="2"/><rect x="635" y="175" width="2" height="2"/><rect x="635" y="210" width="2" height="2"/><rect x="635" y="245" width="2" height="2"/><rect x="635" y="281" width="2" height="2"/><rect x="635" y="316" width="2" height="2"/><rect x="635" y="351" width="2" height="2"/><rect x="635" y="387" width="2" height="2"/><rect x="635" y="422" width="2" height="2"/><rect x="635" y="457" width="2" height="2"/><rect x="635" y="493" width="2" height="2"/><rect x="635" y="528" width="2" height="2"/><rect x="635" y="563" width="2" height="2"/><rect x="635" y="599" width="2" height="2"/><rect x="635" y="634" width="2" height="2"/><rect x="635" y="669" width="2" height="2"/><rect x="635" y="705" width="2" height="2"/><rect x="635" y="740" width="2" height="2"/><rect x="635" y="775" width="2" height="2"/><rect x="635" y="811" width="2" height="2"/><rect x="635" y="846" width="2" height="2"/><rect x="635" y="881" width="2" height="2"/><rect x="635" y="917" width="2" height="2"/><rect x="677" y="69" width="2" height="2"/><rect x="677" y="104" width="2" height="2"/><rect x="677" y="139" width="2" height="2"/><rect x="677" y="175" width="2" height="2"/><rect x="677" y="210" width="2" height="2"/><rect x="677" y="245" width="2" height="2"/><rect x="677" y="281" width="2" height="2"/><rect x="677" y="316" width="2" height="2"/><rect x="677" y="351" width="2" height="2"/><rect x="677" y="387" width="2" height="2"/><rect x="677" y="422" width="2" height="2"/><rect x="677" y="457" width="2" height="2"/><rect x="677" y="493" width="2" height="2"/><rect x="677" y="528" width="2" height="2"/><rect x="677" y="563" width="2" height="2"/><rect x="677" y="599" width="2" height="2"/><rect x="677" y="634" width="2" height="2"/><rect x="677" y="669" width="2" height="2"/><rect x="677" y="705" width="2" height="2"/><rect x="677" y="740" width="2" height="2"/><rect x="677" y="775" width="2" height="2"/><rect x="677" y="811" width="2" height="2"/><rect x="677" y="846" width="2" height="2"/><rect x="677" y="881" width="2" height="2"/><rect x="677" y="917" width="2" height="2"/><rect x="719" y="69" width="2" height="2"/><rect x="719" y="104" width="2" height="2"/><rect x="719" y="139" width="2" height="2"/><rect x="719" y="175" width="2" height="2"/><rect x="719" y="210" width="2" height="2"/><rect x="719" y="245" width="2" height="2"/><rect x="719" y="281" width="2" height="2"/><rect x="719" y="316" width="2" height="2"/><rect x="719" y="351" width="2" height="2"/><rect x="719" y="387" width="2" height="2"/><rect x="719" y="422" width="2" height="2"/><rect x="719" y="457" width="2" height="2"/><rect x="719" y="493" width="2" height="2"/><rect x="719" y="528" width="2" height="2"/><rect x="719" y="563" width="2" height="2"/><rect x="719" y="599" width="2" height="2"/><rect x="719" y="634" width="2" height="2"/><rect x="719" y="669" width="2" height="2"/><rect x="719" y="705" width="2" height="2"/><rect x="719" y="740" width="2" height="2"/><rect x="719" y="775" width="2" height="2"/><rect x="719" y="811" width="2" height="2"/><rect x="719" y="846" width="2" height="2"/><rect x="719" y="881" width="2" height="2"/><rect x="719" y="917" width="2" height="2"/><rect x="761" y="69" width="2" height="2"/><rect x="761" y="104" width="2" height="2"/><rect x="761" y="139" width="2" height="2"/><rect x="761" y="175" width="2" height="2"/><rect x="761" y="210" width="2" height="2"/><rect x="761" y="245" width="2" height="2"/><rect x="761" y="281" width="2" height="2"/><rect x="761" y="316" width="2" height="2"/><rect x="761" y="351" width="2" height="2"/><rect x="761" y="387" width="2" height="2"/><rect x="761" y="422" width="2" height="2"/><rect x="761" y="457" width="2" height="2"/><rect x="761" y="493" width="2" height="2"/><rect x="761" y="528" width="2" height="2"/><rect x="761" y="563" width="2" height="2"/><rect x="761" y="599" width="2" height="2"/><rect x="761" y="634" width="2" height="2"/><rect x="761" y="669" width="2" height="2"/><rect x="761" y="705" width="2" height="2"/><rect x="761" y="740" width="2" height="2"/><rect x="761" y="775" width="2" height="2"/><rect x="761" y="811" width="2" height="2"/><rect x="761" y="846" width="2" height="2"/><rect x="761" y="881" width="2" height="2"/><rect x="761" y="917" width="2" height="2"/><rect x="804" y="69" width="2" height="2"/><rect x="804" y="104" width="2" height="2"/><rect x="804" y="139" width="2" height="2"/><rect x="804" y="175" width="2" height="2"/><rect x="804" y="210" width="2" height="2"/><rect x="804" y="245" width="2" height="2"/><rect x="804" y="281" width="2" height="2"/><rect x="804" y="316" width="2" height="2"/><rect x="804" y="351" width="2" height="2"/><rect x="804" y="387" width="2" height="2"/><rect x="804" y="422" width="2" height="2"/><rect x="804" y="457" width="2" height="2"/><rect x="804" y="493" width="2" height="2"/><rect x="804" y="528" width="2" height="2"/><rect x="804" y="563" width="2" height="2"/><rect x="804" y="599" width="2" height="2"/><rect x="804" y="634" width="2" height="2"/><rect x="804" y="669" width="2" height="2"/><rect x="804" y="705" width="2" height="2"/><rect x="804" y="740" width="2" height="2"/><rect x="804" y="775" width="2" height="2"/><rect x="804" y="811" width="2" height="2"/><rect x="804" y="846" width="2" height="2"/><rect x="804" y="881" width="2" height="2"/><rect x="804" y="917" width="2" height="2"/><rect x="846" y="69" width="2" height="2"/><rect x="846" y="104" width="2" height="2"/><rect x="846" y="139" width="2" height="2"/><rect x="846" y="175" width="2" height="2"/><rect x="846" y="210" width="2" height="2"/><rect x="846" y="245" width="2" height="2"/><rect x="846" y="281" width="2" height="2"/><rect x="846" y="316" width="2" height="2"/><rect x="846" y="351" width="2" height="2"/><rect x="846" y="387" width="2" height="2"/><rect x="846" y="422" width="2" height="2"/><rect x="846" y="457" width="2" height="2"/><rect x="846" y="493" width="2" height="2"/><rect x="846" y="528" width="2" height="2"/><rect x="846" y="563" width="2" height="2"/><rect x="846" y="599" width="2" height="2"/><rect x="846" y="634" width="2" height="2"/><rect x="846" y="669" width="2" height="2"/><rect x="846" y="705" width="2" height="2"/><rect x="846" y="740" width="2" height="2"/><rect x="846" y="775" width="2" height="2"/><rect x="846" y="811" width="2" height="2"/><rect x="846" y="846" width="2" height="2"/><rect x="846" y="881" width="2" height="2"/><rect x="846" y="917" width="2" height="2"/><rect x="888" y="69" width="2" height="2"/><rect x="888" y="104" width="2" height="2"/><rect x="888" y="139" width="2" height="2"/><rect x="888" y="175" width="2" height="2"/><rect x="888" y="210" width="2" height="2"/><rect x="888" y="245" width="2" height="2"/><rect x="888" y="281" width="2" height="2"/><rect x="888" y="316" width="2" height="2"/><rect x="888" y="351" width="2" height="2"/><rect x="888" y="387" width="2" height="2"/><rect x="888" y="422" width="2" height="2"/><rect x="888" y="457" width="2" height="2"/><rect x="888" y="493" width="2" height="2"/><rect x="888" y="528" width="2" height="2"/><rect x="888" y="563" width="2" height="2"/><rect x="888" y="599" width="2" height="2"/><rect x="888" y="634" width="2" height="2"/><rect x="888" y="669" width="2" height="2"/><rect x="888" y="705" width="2" height="2"/><rect x="888" y="740" width="2" height="2"/><rect x="888" y="775" width="2" height="2"/><rect x="888" y="811" width="2" height="2"/><rect x="888" y="846" width="2" height="2"/><rect x="888" y="881" width="2" height="2"/><rect x="888" y="917" width="2" height="2"/><rect x="930" y="69" width="2" height="2"/><rect x="930" y="104" width="2" height="2"/><rect x="930" y="139" width="2" height="2"/><rect x="930" y="175" width="2" height="2"/><rect x="930" y="210" width="2" height="2"/><rect x="930" y="245" width="2" height="2"/><rect x="930" y="281" width="2" height="2"/><rect x="930" y="316" width="2" height="2"/><rect x="930" y="351" width="2" height="2"/><rect x="930" y="387" width="2" height="2"/><rect x="930" y="422" width="2" height="2"/><rect x="930" y="457" width="2" height="2"/><rect x="930" y="493" width="2" height="2"/><rect x="930" y="528" width="2" height="2"/><rect x="930" y="563" width="2" height="2"/><rect x="930" y="599" width="2" height="2"/><rect x="930" y="634" width="2" height="2"/><rect x="930" y="669" width="2" height="2"/><rect x="930" y="705" width="2" height="2"/><rect x="930" y="740" width="2" height="2"/><rect x="930" y="775" width="2" height="2"/><rect x="930" y="811" width="2" height="2"/><rect x="930" y="846" width="2" height="2"/><rect x="930" y="881" width="2" height="2"/><rect x="930" y="917" width="2" height="2"/><rect x="972" y="69" width="2" height="2"/><rect x="972" y="104" width="2" height="2"/><rect x="972" y="139" width="2" height="2"/><rect x="972" y="175" width="2" height="2"/><rect x="972" y="210" width="2" height="2"/><rect x="972" y="245" width="2" height="2"/><rect x="972" y="281" width="2" height="2"/><rect x="972" y="316" width="2" height="2"/><rect x="972" y="351" width="2" height="2"/><rect x="972" y="387" width="2" height="2"/><rect x="972" y="422" width="2" height="2"/><rect x="972" y="457" width="2" height="2"/><rect x="972" y="493" width="2" height="2"/><rect x="972" y="528" width="2" height="2"/><rect x="972" y="563" width="2" height="2"/><rect x="972" y="599" width="2" height="2"/><rect x="972" y="634" width="2" height="2"/><rect x="972" y="669" width="2" height="2"/><rect x="972" y="705" width="2" height="2"/><rect x="972" y="740" width="2" height="2"/><rect x="972" y="775" width="2" height="2"/><rect x="972" y="811" width="2" height="2"/><rect x="972" y="846" width="2" height="2"/><rect x="972" y="881" width="2" height="2"/><rect x="972" y="917" width="2" height="2"/><rect x="1014" y="69" width="2" height="2"/><rect x="1014" y="104" width="2" height="2"/><rect x="1014" y="139" width="2" height="2"/><rect x="1014" y="175" width="2" height="2"/><rect x="1014" y="210" width="2" height="2"/><rect x="1014" y="245" width="2" height="2"/><rect x="1014" y="281" width="2" height="2"/><rect x="1014" y="316" width="2" height="2"/><rect x="1014" y="351" width="2" height="2"/><rect x="1014" y="387" width="2" height="2"/><rect x="1014" y="422" width="2" height="2"/><rect x="1014" y="457" width="2" height="2"/><rect x="1014" y="493" width="2" height="2"/><rect x="1014" y="528" width="2" height="2"/><rect x="1014" y="563" width="2" height="2"/><rect x="1014" y="599" width="2" height="2"/><rect x="1014" y="634" width="2" height="2"/><rect x="1014" y="669" width="2" height="2"/><rect x="1014" y="705" width="2" height="2"/><rect x="1014" y="740" width="2" height="2"/><rect x="1014" y="775" width="2" height="2"/><rect x="1014" y="811" width="2" height="2"/><rect x="1014" y="846" width="2" height="2"/><rect x="1014" y="881" width="2" height="2"/><rect x="1014" y="917" width="2" height="2"/><rect x="1057" y="69" width="2" height="2"/><rect x="1057" y="104" width="2" height="2"/><rect x="1057" y="139" width="2" height="2"/><rect x="1057" y="175" width="2" height="2"/><rect x="1057" y="210" width="2" height="2"/><rect x="1057" y="245" width="2" height="2"/><rect x="1057" y="281" width="2" height="2"/><rect x="1057" y="316" width="2" height="2"/><rect x="1057" y="351" width="2" height="2"/><rect x="1057" y="387" width="2" height="2"/><rect x="1057" y="422" width="2" height="2"/><rect x="1057" y="457" width="2" height="2"/><rect x="1057" y="493" width="2" height="2"/><rect x="1057" y="528" width="2" height="2"/><rect x="1057" y="563" width="2" height="2"/><rect x="1057" y="599" width="2" height="2"/><rect x="1057" y="634" width="2" height="2"/><rect x="1057" y="669" width="2" height="2"/><rect x="1057" y="705" width="2" height="2"/><rect x="1057" y="740" width="2" height="2"/><rect x="1057" y="775" width="2" height="2"/><rect x="1057" y="811" width="2" height="2"/><rect x="1057" y="846" width="2" height="2"/><rect x="1057" y="881" width="2" height="2"/><rect x="1057" y="917" width="2" height="2"/><rect x="1099" y="69" width="2" height="2"/><rect x="1099" y="104" width="2" height="2"/><rect x="1099" y="139" width="2" height="2"/><rect x="1099" y="175" width="2" height="2"/><rect x="1099" y="210" width="2" height="2"/><rect x="1099" y="245" width="2" height="2"/><rect x="1099" y="281" width="2" height="2"/><rect x="1099" y="316" width="2" height="2"/><rect x="1099" y="351" width="2" height="2"/><rect x="1099" y="387" width="2" height="2"/><rect x="1099" y="422" width="2" height="2"/><rect x="1099" y="457" width="2" height="2"/><rect x="1099" y="493" width="2" height="2"/><rect x="1099" y="528" width="2" height="2"/><rect x="1099" y="563" width="2" height="2"/><rect x="1099" y="599" width="2" height="2"/><rect x="1099" y="634" width="2" height="2"/><rect x="1099" y="669" width="2" height="2"/><rect x="1099" y="705" width="2" height="2"/><rect x="1099" y="740" width="2" height="2"/><rect x="1099" y="775" width="2" height="2"/><rect x="1099" y="811" width="2" height="2"/><rect x="1099" y="846" width="2" height="2"/><rect x="1099" y="881" width="2" height="2"/><rect x="1099" y="917" width="2" height="2"/><rect x="1141" y="69" width="2" height="2"/><rect x="1141" y="104" width="2" height="2"/><rect x="1141" y="139" width="2" height="2"/><rect x="1141" y="175" width="2" height="2"/><rect x="1141" y="210" width="2" height="2"/><rect x="1141" y="245" width="2" height="2"/><rect x="1141" y="281" width="2" height="2"/><rect x="1141" y="316" width="2" height="2"/><rect x="1141" y="351" width="2" height="2"/><rect x="1141" y="387" width="2" height="2"/><rect x="1141" y="422" width="2" height="2"/><rect x="1141" y="457" width="2" height="2"/><rect x="1141" y="493" width="2" height="2"/><rect x="1141" y="528" width="2" height="2"/><rect x="1141" y="563" width="2" height="2"/><rect x="1141" y="599" width="2" height="2"/><rect x="1141" y="634" width="2" height="2"/><rect x="1141" y="669" width="2" height="2"/><rect x="1141" y="705" width="2" height="2"/><rect x="1141" y="740" width="2" height="2"/><rect x="1141" y="775" width="2" height="2"/><rect x="1141" y="811" width="2" height="2"/><rect x="1141" y="846" width="2" height="2"/><rect x="1141" y="881" width="2" height="2"/><rect x="1141" y="917" width="2" height="2"/><rect x="1183" y="69" width="2" height="2"/><rect x="1183" y="104" width="2" height="2"/><rect x="1183" y="139" width="2" height="2"/><rect x="1183" y="175" width="2" height="2"/><rect x="1183" y="210" width="2" height="2"/><rect x="1183" y="245" width="2" height="2"/><rect x="1183" y="281" width="2" height="2"/><rect x="1183" y="316" width="2" height="2"/><rect x="1183" y="351" width="2" height="2"/><rect x="1183" y="387" width="2" height="2"/><rect x="1183" y="422" width="2" height="2"/><rect x="1183" y="457" width="2" height="2"/><rect x="1183" y="493" width="2" height="2"/><rect x="1183" y="528" width="2" height="2"/><rect x="1183" y="563" width="2" height="2"/><rect x="1183" y="599" width="2" height="2"/><rect x="1183" y="634" width="2" height="2"/><rect x="1183" y="669" width="2" height="2"/><rect x="1183" y="705" width="2" height="2"/><rect x="1183" y="740" width="2" height="2"/><rect x="1183" y="775" width="2" height="2"/><rect x="1183" y="811" width="2" height="2"/><rect x="1183" y="846" width="2" height="2"/><rect x="1183" y="881" width="2" height="2"/><rect x="1183" y="917" width="2" height="2"/><rect x="1225" y="69" width="2" height="2"/><rect x="1225" y="104" width="2" height="2"/><rect x="1225" y="139" width="2" height="2"/><rect x="1225" y="175" width="2" height="2"/><rect x="1225" y="210" width="2" height="2"/><rect x="1225" y="245" width="2" height="2"/><rect x="1225" y="281" width="2" height="2"/><rect x="1225" y="316" width="2" height="2"/><rect x="1225" y="351" width="2" height="2"/><rect x="1225" y="387" width="2" height="2"/><rect x="1225" y="422" width="2" height="2"/><rect x="1225" y="457" width="2" height="2"/><rect x="1225" y="493" width="2" height="2"/><rect x="1225" y="528" width="2" height="2"/><rect x="1225" y="563" width="2" height="2"/><rect x="1225" y="599" width="2" height="2"/><rect x="1225" y="634" width="2" height="2"/><rect x="1225" y="669" width="2" height="2"/><rect x="1225" y="705" width="2" height="2"/><rect x="1225" y="740" width="2" height="2"/><rect x="1225" y="775" width="2" height="2"/><rect x="1225" y="811" width="2" height="2"/><rect x="1225" y="846" width="2" height="2"/><rect x="1225" y="881" width="2" height="2"/><rect x="1225" y="917" width="2" height="2"/><rect x="1267" y="69" width="2" height="2"/><rect x="1267" y="104" width="2" height="2"/><rect x="1267" y="139" width="2" height="2"/><rect x="1267" y="175" width="2" height="2"/><rect x="1267" y="210" width="2" height="2"/><rect x="1267" y="245" width="2" height="2"/><rect x="1267" y="281" width="2" height="2"/><rect x="1267" y="316" width="2" height="2"/><rect x="1267" y="351" width="2" height="2"/><rect x="1267" y="387" width="2" height="2"/><rect x="1267" y="422" width="2" height="2"/><rect x="1267" y="457" width="2" height="2"/><rect x="1267" y="493" width="2" height="2"/><rect x="1267" y="528" width="2" height="2"/><rect x="1267" y="563" width="2" height="2"/><rect x="1267" y="599" width="2" height="2"/><rect x="1267" y="634" width="2" height="2"/><rect x="1267" y="669" width="2" height="2"/><rect x="1267" y="705" width="2" height="2"/><rect x="1267" y="740" width="2" height="2"/><rect x="1267" y="775" width="2" height="2"/><rect x="1267" y="811" width="2" height="2"/><rect x="1267" y="846" width="2" height="2"/><rect x="1267" y="881" width="2" height="2"/><rect x="1267" y="917" width="2" height="2"/><rect x="1310" y="69" width="2" height="2"/><rect x="1310" y="104" width="2" height="2"/><rect x="1310" y="139" width="2" height="2"/><rect x="1310" y="175" width="2" height="2"/><rect x="1310" y="210" width="2" height="2"/><rect x="1310" y="245" width="2" height="2"/><rect x="1310" y="281" width="2" height="2"/><rect x="1310" y="316" width="2" height="2"/><rect x="1310" y="351" width="2" height="2"/><rect x="1310" y="387" width="2" height="2"/><rect x="1310" y="422" width="2" height="2"/><rect x="1310" y="457" width="2" height="2"/><rect x="1310" y="493" width="2" height="2"/><rect x="1310" y="528" width="2" height="2"/><rect x="1310" y="563" width="2" height="2"/><rect x="1310" y="599" width="2" height="2"/><rect x="1310" y="634" width="2" height="2"/><rect x="1310" y="669" width="2" height="2"/><rect x="1310" y="705" width="2" height="2"/><rect x="1310" y="740" width="2" height="2"/><rect x="1310" y="775" width="2" height="2"/><rect x="1310" y="811" width="2" height="2"/><rect x="1310" y="846" width="2" height="2"/><rect x="1310" y="881" width="2" height="2"/><rect x="1310" y="917" width="2" height="2"/><rect x="1352" y="69" width="2" height="2"/><rect x="1352" y="104" width="2" height="2"/><rect x="1352" y="139" width="2" height="2"/><rect x="1352" y="175" width="2" height="2"/><rect x="1352" y="210" width="2" height="2"/><rect x="1352" y="245" width="2" height="2"/><rect x="1352" y="281" width="2" height="2"/><rect x="1352" y="316" width="2" height="2"/><rect x="1352" y="351" width="2" height="2"/><rect x="1352" y="387" width="2" height="2"/><rect x="1352" y="422" width="2" height="2"/><rect x="1352" y="457" width="2" height="2"/><rect x="1352" y="493" width="2" height="2"/><rect x="1352" y="528" width="2" height="2"/><rect x="1352" y="563" width="2" height="2"/><rect x="1352" y="599" width="2" height="2"/><rect x="1352" y="634" width="2" height="2"/><rect x="1352" y="669" width="2" height="2"/><rect x="1352" y="705" width="2" height="2"/><rect x="1352" y="740" width="2" height="2"/><rect x="1352" y="775" width="2" height="2"/><rect x="1352" y="811" width="2" height="2"/><rect x="1352" y="846" width="2" height="2"/><rect x="1352" y="881" width="2" height="2"/><rect x="1352" y="917" width="2" height="2"/><rect x="1394" y="69" width="2" height="2"/><rect x="1394" y="104" width="2" height="2"/><rect x="1394" y="139" width="2" height="2"/><rect x="1394" y="175" width="2" height="2"/><rect x="1394" y="210" width="2" height="2"/><rect x="1394" y="245" width="2" height="2"/><rect x="1394" y="281" width="2" height="2"/><rect x="1394" y="316" width="2" height="2"/><rect x="1394" y="351" width="2" height="2"/><rect x="1394" y="387" width="2" height="2"/><rect x="1394" y="422" width="2" height="2"/><rect x="1394" y="457" width="2" height="2"/><rect x="1394" y="493" width="2" height="2"/><rect x="1394" y="528" width="2" height="2"/><rect x="1394" y="563" width="2" height="2"/><rect x="1394" y="599" width="2" height="2"/><rect x="1394" y="634" width="2" height="2"/><rect x="1394" y="669" width="2" height="2"/><rect x="1394" y="705" width="2" height="2"/><rect x="1394" y="740" width="2" height="2"/><rect x="1394" y="775" width="2" height="2"/><rect x="1394" y="811" width="2" height="2"/><rect x="1394" y="846" width="2" height="2"/><rect x="1394" y="881" width="2" height="2"/><rect x="1394" y="917" width="2" height="2"/><rect x="1436" y="69" width="2" height="2"/><rect x="1436" y="104" width="2" height="2"/><rect x="1436" y="139" width="2" height="2"/><rect x="1436" y="175" width="2" height="2"/><rect x="1436" y="210" width="2" height="2"/><rect x="1436" y="245" width="2" height="2"/><rect x="1436" y="281" width="2" height="2"/><rect x="1436" y="316" width="2" height="2"/><rect x="1436" y="351" width="2" height="2"/><rect x="1436" y="387" width="2" height="2"/><rect x="1436" y="422" width="2" height="2"/><rect x="1436" y="457" width="2" height="2"/><rect x="1436" y="493" width="2" height="2"/><rect x="1436" y="528" width="2" height="2"/><rect x="1436" y="563" width="2" height="2"/><rect x="1436" y="599" width="2" height="2"/><rect x="1436" y="634" width="2" height="2"/><rect x="1436" y="669" width="2" height="2"/><rect x="1436" y="705" width="2" height="2"/><rect x="1436" y="740" width="2" height="2"/><rect x="1436" y="775" width="2" height="2"/><rect x="1436" y="811" width="2" height="2"/><rect x="1436" y="846" width="2" height="2"/><rect x="1436" y="881" width="2" height="2"/><rect x="1436" y="917" width="2" height="2"/><rect x="1478" y="69" width="2" height="2"/><rect x="1478" y="104" width="2" height="2"/><rect x="1478" y="139" width="2" height="2"/><rect x="1478" y="175" width="2" height="2"/><rect x="1478" y="210" width="2" height="2"/><rect x="1478" y="245" width="2" height="2"/><rect x="1478" y="281" width="2" height="2"/><rect x="1478" y="316" width="2" height="2"/><rect x="1478" y="351" width="2" height="2"/><rect x="1478" y="387" width="2" height="2"/><rect x="1478" y="422" width="2" height="2"/><rect x="1478" y="457" width="2" height="2"/><rect x="1478" y="493" width="2" height="2"/><rect x="1478" y="528" width="2" height="2"/><rect x="1478" y="563" width="2" height="2"/><rect x="1478" y="599" width="2" height="2"/><rect x="1478" y="634" width="2" height="2"/><rect x="1478" y="669" width="2" height="2"/><rect x="1478" y="705" width="2" height="2"/><rect x="1478" y="740" width="2" height="2"/><rect x="1478" y="775" width="2" height="2"/><rect x="1478" y="811" width="2" height="2"/><rect x="1478" y="846" width="2" height="2"/><rect x="1478" y="881" width="2" height="2"/><rect x="1478" y="917" width="2" height="2"/><rect x="1520" y="69" width="2" height="2"/><rect x="1520" y="104" width="2" height="2"/><rect x="1520" y="139" width="2" height="2"/><rect x="1520" y="175" width="2" height="2"/><rect x="1520" y="210" width="2" height="2"/><rect x="1520" y="245" width="2" height="2"/><rect x="1520" y="281" width="2" height="2"/><rect x="1520" y="316" width="2" height="2"/><rect x="1520" y="351" width="2" height="2"/><rect x="1520" y="387" width="2" height="2"/><rect x="1520" y="422" width="2" height="2"/><rect x="1520" y="457" width="2" height="2"/><rect x="1520" y="493" width="2" height="2"/><rect x="1520" y="528" width="2" height="2"/><rect x="1520" y="563" width="2" height="2"/><rect x="1520" y="599" width="2" height="2"/><rect x="1520" y="634" width="2" height="2"/><rect x="1520" y="669" width="2" height="2"/><rect x="1520" y="705" width="2" height="2"/><rect x="1520" y="740" width="2" height="2"/><rect x="1520" y="775" width="2" height="2"/><rect x="1520" y="811" width="2" height="2"/><rect x="1520" y="846" width="2" height="2"/><rect x="1520" y="881" width="2" height="2"/><rect x="1520" y="917" width="2" height="2"/><rect x="1563" y="69" width="2" height="2"/><rect x="1563" y="104" width="2" height="2"/><rect x="1563" y="139" width="2" height="2"/><rect x="1563" y="175" width="2" height="2"/><rect x="1563" y="210" width="2" height="2"/><rect x="1563" y="245" width="2" height="2"/><rect x="1563" y="281" width="2" height="2"/><rect x="1563" y="316" width="2" height="2"/><rect x="1563" y="351" width="2" height="2"/><rect x="1563" y="387" width="2" height="2"/><rect x="1563" y="422" width="2" height="2"/><rect x="1563" y="457" width="2" height="2"/><rect x="1563" y="493" width="2" height="2"/><rect x="1563" y="528" width="2" height="2"/><rect x="1563" y="563" width="2" height="2"/><rect x="1563" y="599" width="2" height="2"/><rect x="1563" y="634" width="2" height="2"/><rect x="1563" y="669" width="2" height="2"/><rect x="1563" y="705" width="2" height="2"/><rect x="1563" y="740" width="2" height="2"/><rect x="1563" y="775" width="2" height="2"/><rect x="1563" y="811" width="2" height="2"/><rect x="1563" y="846" width="2" height="2"/><rect x="1563" y="881" width="2" height="2"/><rect x="1563" y="917" width="2" height="2"/></g></svg>
<svg class="abs" style="left:71px;top:170px" width="14" height="14" viewBox="0 0 14 14"><rect x="0.3" y="0.3" width="13" height="13" rx="2" fill="#6e6e6e"/><path d="M3,7.2L5.6,9.8L10.8,3.8" fill="none" stroke="#fff" stroke-width="1.9"/></svg>
<span class="abs" style="left:93px;top:170.5px;font-size:13px;line-height:16px;color:#3a3a3a;white-space:nowrap">Dublin</span>
<svg class="abs" style="left:71px;top:200px" width="14" height="14" viewBox="0 0 14 14"><rect x="0.3" y="0.3" width="13" height="13" rx="2" fill="#6e6e6e"/><path d="M3,7.2L5.6,9.8L10.8,3.8" fill="none" stroke="#fff" stroke-width="1.9"/></svg>
<span class="abs" style="left:93px;top:200.5px;font-size:13px;line-height:16px;color:#3a3a3a;white-space:nowrap">Cork</span>
<svg class="abs" style="left:71px;top:230px" width="14" height="14" viewBox="0 0 14 14"><rect x="0.3" y="0.3" width="13" height="13" rx="2" fill="#6e6e6e"/><path d="M3,7.2L5.6,9.8L10.8,3.8" fill="none" stroke="#fff" stroke-width="1.9"/></svg>
<span class="abs" style="left:93px;top:230.5px;font-size:13px;line-height:16px;color:#3a3a3a;white-space:nowrap">Shannon</span>
<svg class="abs" style="left:71px;top:260px" width="14" height="14" viewBox="0 0 14 14"><rect x="0.3" y="0.3" width="13" height="13" rx="2" fill="#6e6e6e"/><path d="M3,7.2L5.6,9.8L10.8,3.8" fill="none" stroke="#fff" stroke-width="1.9"/></svg>
<span class="abs" style="left:93px;top:260.5px;font-size:13px;line-height:16px;color:#3a3a3a;white-space:nowrap">Kerry</span>
<svg class="abs" style="left:71px;top:290px" width="14" height="14" viewBox="0 0 14 14"><rect x="0.3" y="0.3" width="13" height="13" rx="2" fill="#6e6e6e"/><path d="M3,7.2L5.6,9.8L10.8,3.8" fill="none" stroke="#fff" stroke-width="1.9"/></svg>
<span class="abs" style="left:93px;top:290.5px;font-size:13px;line-height:16px;color:#3a3a3a;white-space:nowrap">Waterford</span>
<svg class="abs" style="left:71px;top:320px" width="14" height="14" viewBox="0 0 14 14"><rect x="0.3" y="0.3" width="13" height="13" rx="2" fill="#6e6e6e"/><path d="M3,7.2L5.6,9.8L10.8,3.8" fill="none" stroke="#fff" stroke-width="1.9"/></svg>
<span class="abs" style="left:93px;top:320.5px;font-size:13px;line-height:16px;color:#3a3a3a;white-space:nowrap">Donegal</span>
<svg class="abs" style="left:71px;top:350px" width="14" height="14" viewBox="0 0 14 14"><rect x="0.3" y="0.3" width="13" height="13" rx="2" fill="#6e6e6e"/><path d="M3,7.2L5.6,9.8L10.8,3.8" fill="none" stroke="#fff" stroke-width="1.9"/></svg>
<span class="abs" style="left:93px;top:350.5px;font-size:13px;line-height:16px;color:#3a3a3a;white-space:nowrap">Knock</span>
<svg class="abs" style="left:71px;top:380px" width="14" height="14" viewBox="0 0 14 14"><rect x="0.3" y="0.3" width="13" height="13" rx="2" fill="#6e6e6e"/><path d="M3,7.2L5.6,9.8L10.8,3.8" fill="none" stroke="#fff" stroke-width="1.9"/></svg>
<span class="abs" style="left:93px;top:380.5px;font-size:13px;line-height:16px;color:#3a3a3a;white-space:nowrap">Baldonnel</span>
<div class="abs" style="left:1525px;top:80px;width:29px;height:87px;background:#fff;border-radius:4px;box-shadow:0 0 0 2px rgba(0,0,0,.1)"></div>
<div class="abs" style="left:1525px;top:109px;width:29px;height:1px;background:#ddd"></div>
<div class="abs" style="left:1525px;top:138px;width:29px;height:1px;background:#ddd"></div>
<svg class="abs" style="left:1525px;top:80px" width="29" height="87" viewBox="0 0 29 87"><path d="M9,14.7H20 M14.5,9.2V20.2" stroke="#333" stroke-width="2.7"/><path d="M9,43.7H20" stroke="#333" stroke-width="2.7"/><path d="M14.5,63.5L18.6,72.2H10.4Z" fill="#333"/><path d="M14.5,82.5L18.6,73.8H10.4Z" fill="#ccc"/></svg>
<div class="abs" style="left:1525px;top:177px;width:29px;height:89px;background:#fff;border-radius:4px;box-shadow:0 0 0 2px rgba(0,0,0,.1)"></div>
<div class="abs" style="left:1525px;top:206px;width:29px;height:1px;background:#ddd"></div>
<div class="abs" style="left:1525px;top:236px;width:29px;height:1px;background:#ddd"></div>
<svg class="abs" style="left:1525px;top:177px" width="29" height="89" viewBox="0 0 29 89"><g fill="#666" stroke="#666"><path d="M10.6,18.6L18.4,11.2" stroke-width="2.2"/><circle cx="10.4" cy="18.8" r="2.5" stroke="none"/><circle cx="18.6" cy="11" r="2.5" stroke="none"/><rect x="10.6" y="40.6" width="7.8" height="7.8" fill="none" stroke-width="2.2"/><rect x="8.6" y="38.6" width="3.6" height="3.6" stroke="none"/><rect x="16.8" y="38.6" width="3.6" height="3.6" stroke="none"/><rect x="8.6" y="46.8" width="3.6" height="3.6" stroke="none"/><rect x="16.8" y="46.8" width="3.6" height="3.6" stroke="none"/><path d="M9,70.3H20 M12.5,69.8V68.4H16.5V69.8" fill="none" stroke-width="1.5"/><path d="M9.8,72.2H19.2L18.6,81.6H10.4Z" stroke="none"/><path d="M13,74V79.8 M16,74V79.8" stroke="#fff" stroke-width="1.1"/></g></svg>
<div class="abs" style="left:1472px;top:884px;width:82px;height:24px;border-radius:12px;background:#fff"></div>
<div class="abs" style="left:1530px;top:884px;width:24px;height:24px;border-radius:12px;background:#efefef"></div>
<span class="abs" style="left:1480px;top:888px;font-size:11.2px;line-height:14px;color:#444;white-space:nowrap">MapLibre</span>
<svg class="abs" style="left:1534px;top:888px" width="16" height="16" viewBox="0 0 16 16"><circle cx="8" cy="8" r="7.2" fill="#000"/><circle cx="8" cy="4.3" r="1.3" fill="#fff"/><rect x="6.9" y="6.7" width="2.2" height="5.8" rx="0.6" fill="#fff"/></svg>
<div id="rpanel">
<span class="abs" style="left:7px;top:6.5px;font-size:10px;letter-spacing:0.98px;line-height:12px;color:#333;white-space:nowrap">DASHBOARD</span>
<svg class="abs" style="left:215px;top:4px" width="122" height="15" viewBox="0 0 122 15">
<circle cx="6.5" cy="7.3" r="5.7" fill="#333"/><text x="6.5" y="10.6" text-anchor="middle" font-family="'Liberation Sans',sans-serif" font-weight="bold" font-size="9.5" fill="#e8e8e8">?</text>
<g fill="#333"><ellipse cx="30.5" cy="3.2" rx="5.6" ry="2.3"/><path d="M24.9,5V6.6C24.9,8 27.4,9 30.5,9S36.1,8 36.1,6.6V5C36.1,6.3 33.6,7.2 30.5,7.2S24.9,6.3 24.9,5Z"/><path d="M24.9,8.4V10C24.9,11.4 27.4,12.4 30.5,12.4S36.1,11.4 36.1,10V8.4C36.1,9.7 33.6,10.6 30.5,10.6S24.9,9.7 24.9,8.4Z"/><path d="M24.9,11.6V12.6C24.9,13.9 27.4,14.8 30.5,14.8S36.1,13.9 36.1,12.6V11.6C36.1,12.9 33.6,13.8 30.5,13.8S24.9,12.9 24.9,11.6Z"/></g>
<path d="M50.2,7.5C52.5,3.8 60.5,3.8 62.8,7.5C60.5,11.2 52.5,11.2 50.2,7.5Z" fill="none" stroke="#333" stroke-width="1.5"/><circle cx="56.5" cy="7.2" r="2.7" fill="#333"/>
<g fill="#333"><rect x="80.7" y="1.6" width="4.2" height="4"/><rect x="76.2" y="9.3" width="3.8" height="3.8"/><rect x="80.9" y="9.3" width="3.8" height="3.8"/><rect x="85.6" y="9.3" width="3.8" height="3.8"/><path d="M82.3,5.6H83.3V7H88V9.3H87V8H83.3V9.3H82.3V8H78.6V9.3H77.6V7H82.3Z"/></g>
<path d="M106.5,3.8L110.6,7.4L106.5,11Z M112.5,3.8L116.6,7.4L112.5,11Z" fill="#777"/></svg>
<div class="hr" style="top:25px;background:#b4b4b4"></div>
<svg class="abs" style="left:9px;top:44px" width="8" height="6"><path d="M0.3,0.6H7.1L3.7,4.8Z" fill="#333"/></svg>
<span class="sec" style="top:41.5px">BASICS</span>
<div class="hr" style="top:61px"></div>
<span class="lbl" style="top:68px">Hash</span>
<div class="inp" style="top:64.6px">f4c28579-9cf1-e53f-9f55-4a4</div>
<span class="lbl" style="top:91px">Name</span>
<div class="inp" style="top:87.6px">Offline circles</div>
<span class="lbl" style="top:114px">Link</span>
<div class="inp" style="top:110.6px">../#f4c28579-9cf1-e53f-9f55-4</div>
<span class="lbl" style="top:137px">Hostname(s) access</span>
<div class="inp" style="top:133.6px"></div>
<span class="lbl" style="top:160px">Enable "Share Dashboard"</span>
<div class="chk" style="top:158.6px"></div>
<span class="lbl" style="top:183px">Save Viewer State</span>
<div class="inp" style="top:180.4px;height:21px;padding-left:3px;line-height:22px">Enabled</div>
<svg class="abs" style="left:322px;top:189.5px" width="9" height="6"><path d="M0.6,0.5H7.6L4.1,4.7Z" fill="#444"/></svg>
<span class="lbl" style="top:206px">Unsaved Viewer Prompt</span>
<div class="chk" style="top:204.6px"></div>
<span class="lbl" style="top:229px">Fill Height</span>
<div class="chk" style="top:227.6px"></div>
<svg class="abs" style="left:174px;top:227.6px" width="13" height="13" viewBox="0 0 13 13"><path d="M2.4,6.6L5.3,10.6L10.6,1.8" fill="none" stroke="#1a1a1a" stroke-width="1.6"/></svg>
<span class="lbl" style="top:252px">Floatable</span>
<div class="chk" style="top:250.6px"></div>
<svg class="abs" style="left:174px;top:250.6px" width="13" height="13" viewBox="0 0 13 13"><path d="M2.4,6.6L5.3,10.6L10.6,1.8" fill="none" stroke="#1a1a1a" stroke-width="1.6"/></svg>
<span class="lbl" style="top:275px">Column Count</span>
<div class="inp" style="top:271.6px">36</div>
<span class="lbl" style="top:298px">Row Count</span>
<div class="inp" style="top:294.6px">24</div>
<span class="lbl" style="top:321px">Hide Pdf Global Viewstates</span>
<div class="chk" style="top:319.6px"></div>
<div class="hr" style="top:347.5px;background:#cfcfcf"></div>
<svg class="abs" style="left:9px;top:362.5px" width="6" height="9"><path d="M0.6,0.6V7.8L4.6,4.2Z" fill="#333"/></svg>
<span class="sec" style="top:362.5px">STYLE</span>
<div class="hr" style="top:382px"></div>
<svg class="abs" style="left:9px;top:398.5px" width="6" height="9"><path d="M0.6,0.6V7.8L4.6,4.2Z" fill="#333"/></svg>
<span class="sec" style="top:398.5px">POPUPS</span>
<div class="hr" style="top:418px"></div>
<svg class="abs" style="left:9px;top:434.5px" width="6" height="9"><path d="M0.6,0.6V7.8L4.6,4.2Z" fill="#333"/></svg>
<span class="sec" style="top:434.5px">SHORTCUTS</span>
<div class="hr" style="top:454px"></div>
<svg class="abs" style="left:9px;top:470.5px" width="6" height="9"><path d="M0.6,0.6V7.8L4.6,4.2Z" fill="#333"/></svg>
<span class="sec" style="top:470.5px">NOTIFICATIONS</span>
<div class="hr" style="top:490px"></div>
<svg class="abs" style="left:9px;top:506.5px" width="6" height="9"><path d="M0.6,0.6V7.8L4.6,4.2Z" fill="#333"/></svg>
<span class="sec" style="top:506.5px">PERMISSIONS</span>
<div class="hr" style="top:526px"></div>
<svg class="abs" style="left:9px;top:542.5px" width="6" height="9"><path d="M0.6,0.6V7.8L4.6,4.2Z" fill="#333"/></svg>
<span class="sec" style="top:542.5px">SCREENS</span>
<div class="hr" style="top:562px"></div>
<div class="btn" style="left:101px;top:583px;width:93px"><svg class="abs" style="left:7.5px;top:6.5px" width="13" height="12" viewBox="0 0 13 12"><circle cx="4.6" cy="6" r="2.6" fill="none" stroke="#444" stroke-width="2"/><path d="M4.6,1.6V10.4 M0.2,6H9 M1.5,2.9L7.7,9.1 M7.7,2.9L1.5,9.1" stroke="#444" stroke-width="1.1"/><circle cx="4.6" cy="6" r="1.2" fill="#efefef"/><circle cx="10.4" cy="2.8" r="1.5" fill="none" stroke="#444" stroke-width="1.2"/><circle cx="10.4" cy="9.2" r="1.5" fill="none" stroke="#444" stroke-width="1.2"/></svg><span class="abs" style="left:25px;top:0">Connections</span></div>
<div class="btn" style="left:214px;top:583px;width:115px"><svg class="abs" style="left:7.5px;top:6.5px" width="13" height="12" viewBox="0 0 13 12"><g fill="#444"><rect x="4.6" y="0.8" width="3.6" height="3.4"/><rect x="0.6" y="7.4" width="3.2" height="3.2"/><rect x="4.8" y="7.4" width="3.2" height="3.2"/><rect x="9" y="7.4" width="3.2" height="3.2"/><path d="M6,4H6.9V5.4H11V7.4H10.1V6.3H6.9V7.4H6V6.3H2.8V7.4H1.9V5.4H6Z"/></g></svg><span class="abs" style="left:25px;top:0">Document Graph</span></div>
</div>

<svg class="abs" style="left:1785px;top:818px" width="16" height="24" viewBox="-2 -2 16 24"><path d="M0.2,0.3V16.9L4,13.3L6.7,19.2L9.2,18.1L6.6,12.3H11.8Z" fill="#fff" stroke="#16162a" stroke-width="1.15" stroke-linejoin="round"/></svg>
<div class="abs" style="left:1914px;top:1px;width:4px;height:924px;background:#f7f7f7"></div>
<div class="abs" style="left:1918px;top:1px;width:3px;height:924px;background:#d9d9d9"></div>
<div class="abs" style="left:0;top:0;width:1923px;height:1px;background:#a8a8a8"></div>
<div class="abs" style="left:0;top:0;width:1px;height:927px;background:#a8a8a8"></div>
<div class="abs" style="left:0;top:925px;width:1923px;height:1.8px;background:#a6a6a6"></div>
<div class="abs" style="left:1921px;top:0;width:1.8px;height:927px;background:#a6a6a6"></div>
<div class="abs" style="left:1923px;top:0;width:2px;height:929px;background:#fff"></div>
<div class="abs" style="left:0;top:927px;width:1925px;height:2px;background:#fff"></div>

</div>
</body></html>
